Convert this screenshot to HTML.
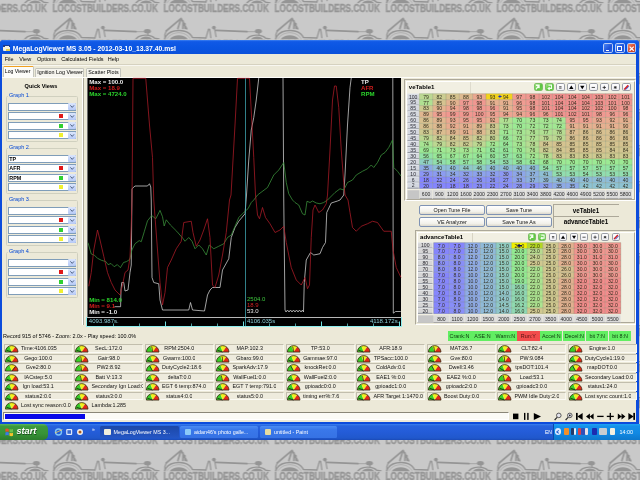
<!DOCTYPE html>
<html><head><meta charset="utf-8"><title>MegaLogViewer MS 3.05</title>
<style>
html,body{margin:0;padding:0;}
body{width:640px;height:480px;overflow:hidden;position:relative;background:#c9c9c9;font-family:"Liberation Sans", sans-serif;}
#root{position:absolute;left:0;top:0;width:640px;height:480px;overflow:hidden;will-change:transform;}
#root div,#root .t,#root .abs{position:absolute;}
.t{white-space:nowrap;display:block;}
svg{display:block;overflow:visible;}
</style></head><body><div id="root">
<svg class="abs" style="left:0;top:0" width="640" height="480" viewBox="0 0 640 480">
<pattern id="wm" x="52.5" y="0" width="111.0" height="36.0" patternUnits="userSpaceOnUse">
<clipPath id="cc"><rect x="-5" y="10" width="125" height="29.2"/></clipPath>
<rect width="111.0" height="36.0" fill="#c9c9c9"/>
<g transform="translate(0 0)" clip-path="url(#cc)">
<g fill="none" stroke="#959595" stroke-linecap="round" stroke-linejoin="round">
 <path d="M2.7 31L17.6 18.4L23.3 28.8M17.2 19.4L14.4 28.6M19.6 21.2L19.4 28.4M21.4 23.6L21.6 28.4" stroke-width="1.7"/>
 <path d="M2.7 31L1.4 34.6V40" stroke-width="1.3"/>
 <path d="M1.4 38.6C3.5 32.6 10 30.3 16.2 30.4C22.5 30.6 27 33.4 28.8 37.4L42.5 37.9" stroke-width="1.5"/>
 <path d="M3.4 39.5C5.5 34.6 10.6 32.6 16 32.7C20.6 32.9 24.6 35 26.4 38.4" stroke-width="0.8" stroke="#a8a8a8"/>
 <path d="M42.5 37.9L45 29.2L46.2 29.4L47.4 37.6" stroke-width="1.3"/>
 <path d="M51 28.4L52.6 36.6" stroke-width="1.2"/>
 <path d="M52.6 30.4L83.5 31.7" stroke-width="1.7"/>
 <path d="M83.5 31.7H91.3" stroke-width="0.7"/>
 <path d="M95.4 33L95.6 35.2" stroke-width="1.3"/>
 <path d="M83.4 39C85.6 36 89.6 35 93.6 35.1C97.4 35.2 100.4 36.4 102.2 38.2L106.6 38.9" stroke-width="1.4"/>
</g>
<g fill="#959595">
 <path d="M4.9 41.5C6.4 37.6 10.6 35.2 15.4 35.2C20.2 35.2 24.2 37.6 25.6 41.5Z"/>
 <ellipse cx="50.4" cy="27.6" rx="1.9" ry="1.9"/>
 <ellipse cx="94.9" cy="31.2" rx="3.5" ry="2.2"/>
 <path d="M86.6 41C88 37.8 90.6 36.6 93.6 36.6C96.6 36.6 99.2 37.8 100.6 41Z"/>
</g></g><g transform="translate(0 -36)" clip-path="url(#cc)">
<g fill="none" stroke="#959595" stroke-linecap="round" stroke-linejoin="round">
 <path d="M2.7 31L17.6 18.4L23.3 28.8M17.2 19.4L14.4 28.6M19.6 21.2L19.4 28.4M21.4 23.6L21.6 28.4" stroke-width="1.7"/>
 <path d="M2.7 31L1.4 34.6V40" stroke-width="1.3"/>
 <path d="M1.4 38.6C3.5 32.6 10 30.3 16.2 30.4C22.5 30.6 27 33.4 28.8 37.4L42.5 37.9" stroke-width="1.5"/>
 <path d="M3.4 39.5C5.5 34.6 10.6 32.6 16 32.7C20.6 32.9 24.6 35 26.4 38.4" stroke-width="0.8" stroke="#a8a8a8"/>
 <path d="M42.5 37.9L45 29.2L46.2 29.4L47.4 37.6" stroke-width="1.3"/>
 <path d="M51 28.4L52.6 36.6" stroke-width="1.2"/>
 <path d="M52.6 30.4L83.5 31.7" stroke-width="1.7"/>
 <path d="M83.5 31.7H91.3" stroke-width="0.7"/>
 <path d="M95.4 33L95.6 35.2" stroke-width="1.3"/>
 <path d="M83.4 39C85.6 36 89.6 35 93.6 35.1C97.4 35.2 100.4 36.4 102.2 38.2L106.6 38.9" stroke-width="1.4"/>
</g>
<g fill="#959595">
 <path d="M4.9 41.5C6.4 37.6 10.6 35.2 15.4 35.2C20.2 35.2 24.2 37.6 25.6 41.5Z"/>
 <ellipse cx="50.4" cy="27.6" rx="1.9" ry="1.9"/>
 <ellipse cx="94.9" cy="31.2" rx="3.5" ry="2.2"/>
 <path d="M86.6 41C88 37.8 90.6 36.6 93.6 36.6C96.6 36.6 99.2 37.8 100.6 41Z"/>
</g></g>
<rect x="-1" y="3.6" width="107.5" height="8.8" fill="#c9c9c9" opacity="0.0"/>
<text x="0" y="11.75" font-family='"Liberation Sans", sans-serif' font-weight="bold" font-size="10.2" fill="#959595" stroke="#959595" stroke-width="0.35" textLength="105.5" lengthAdjust="spacingAndGlyphs">LOCOSTBUILDERS.CO.UK</text>
</pattern>
<rect width="640" height="480" fill="url(#wm)"/>
</svg>
<div style="left:0.00px;top:39.70px;width:638.50px;height:384.60px;background:#0c4cdc;border-radius:3.5px 3.5px 0 0;"></div>
<div style="left:0.00px;top:39.70px;width:638.50px;height:14.60px;background:linear-gradient(#3d80f2 0%,#1059e6 12%,#0a55e2 55%,#0b50da 100%);border-radius:3.5px 3.5px 0 0;"></div>
<div style="left:2.20px;top:54.30px;width:634.00px;height:367.30px;background:#ece9d8;"></div>
<div style="left:3.40px;top:44.70px;width:6.90px;height:6.50px;background:#f4f2e4;border-radius:1px;"></div>
<div style="left:3.40px;top:44.70px;width:6.90px;height:2.60px;background:#1f3c90;"></div>
<div style="left:5.00px;top:46.30px;width:3.50px;height:2.60px;background:#f8f4e0;"></div>
<div style="left:6.00px;top:48.60px;width:3.50px;height:2.20px;background:#e8d050;"></div>
<span class="t" style="top:44.53px;font-size:6.79px;line-height:8.15px;color:#fff;font-weight:bold;left:12.80px;">MegaLogViewer MS 3.05 - 2012-03-10_13.37.40.msl</span>
<div style="left:603.40px;top:43.30px;width:9.60px;height:9.90px;background:linear-gradient(135deg,#4a86f4,#1c50d8 60%,#2a62e8);border:1px solid #b9cdf6;border-radius:1.8px;box-sizing:border-box;"></div>
<div style="left:615.00px;top:43.30px;width:9.60px;height:9.90px;background:linear-gradient(135deg,#4a86f4,#1c50d8 60%,#2a62e8);border:1px solid #b9cdf6;border-radius:1.8px;box-sizing:border-box;"></div>
<div style="left:626.60px;top:43.30px;width:9.60px;height:9.90px;background:linear-gradient(135deg,#f08a6a,#d84a2a 55%,#c83c20);border:1px solid #b9cdf6;border-radius:1.8px;box-sizing:border-box;"></div>
<div style="left:605.80px;top:49.60px;width:3.40px;height:1.50px;background:#fff;"></div>
<div style="left:617.40px;top:45.80px;width:5.00px;height:4.80px;border:1px solid #fff;border-top-width:1.6px;box-sizing:border-box;"></div>
<svg class="abs" style="left:628.7px;top:45.6px" width="5.4" height="5.4" viewBox="0 0 5.4 5.4"><path d="M0.6 0.6L4.8 4.8M4.8 0.6L0.6 4.8" stroke="#fff" stroke-width="1.2"/></svg>
<div style="left:2.20px;top:63.90px;width:634.00px;height:0.60px;background:#d6d2c0;"></div>
<div style="left:2.20px;top:64.50px;width:634.00px;height:0.60px;background:#f8f7f0;"></div>
<span class="t" style="top:56.20px;font-size:5.5px;line-height:6.60px;color:#000;left:4.70px;">File</span>
<span class="t" style="top:56.20px;font-size:5.5px;line-height:6.60px;color:#000;left:19.30px;">View</span>
<span class="t" style="top:56.20px;font-size:5.5px;line-height:6.60px;color:#000;left:37.00px;">Options</span>
<span class="t" style="top:56.20px;font-size:5.5px;line-height:6.60px;color:#000;left:61.30px;">Calculated Fields</span>
<span class="t" style="top:56.20px;font-size:5.5px;line-height:6.60px;color:#000;left:107.80px;">Help</span>
<div style="left:2.20px;top:76.60px;width:634.00px;height:0.70px;background:#fdfdfa;"></div>
<div style="left:35.20px;top:67.60px;width:48.80px;height:9.00px;background:#f6f5ee;border:1px solid #c4c5bd;border-bottom:none;box-sizing:border-box;border-radius:1.5px 1.5px 0 0;"></div>
<div style="left:85.80px;top:67.60px;width:34.80px;height:9.00px;background:#f6f5ee;border:1px solid #c4c5bd;border-bottom:none;box-sizing:border-box;border-radius:1.5px 1.5px 0 0;"></div>
<div style="left:2.60px;top:65.80px;width:31.40px;height:11.50px;background:#fcfcf9;border:1px solid #c4c5bd;border-bottom:none;border-top:1.3px solid #f0a020;box-sizing:border-box;border-radius:1.5px 1.5px 0 0;"></div>
<span class="t" style="top:68.32px;font-size:5.14px;line-height:6.17px;color:#000;left:4.80px;">Log Viewer</span>
<span class="t" style="top:68.98px;font-size:5.36px;line-height:6.43px;color:#000;left:37.20px;">Ignition Log Viewer</span>
<span class="t" style="top:68.98px;font-size:5.36px;line-height:6.43px;color:#000;left:88.30px;">Scatter Plots</span>
<div style="left:82.30px;top:78.00px;width:0.70px;height:247.00px;background:#fff;"></div>
<div style="left:83.00px;top:78.00px;width:0.70px;height:247.00px;background:#aca899;"></div>
<span class="t" style="top:82.64px;font-size:5.6px;line-height:6.72px;color:#000;font-weight:bold;left:-59.00px;width:200px;text-align:center;">Quick Views</span>
<div style="left:5.50px;top:96.00px;width:72.50px;height:46.00px;border:0.6px solid #d0d0bf;border-radius:1.5px;box-sizing:border-box;"></div>
<div style="left:8.00px;top:93.00px;width:19.50px;height:6.00px;background:#ece9d8;"></div>
<span class="t" style="top:92.30px;font-size:5.5px;line-height:6.60px;color:#0046d5;left:9.00px;">Graph 1</span>
<div style="left:7.50px;top:102.50px;width:68.80px;height:8.40px;background:#fff;border:0.6px solid #7f9db9;box-sizing:border-box;"></div>
<div style="left:68.20px;top:103.10px;width:7.50px;height:7.20px;background:linear-gradient(#dbe6fd,#b6c9f7);border-radius:1px;"></div>
<svg class="abs" style="left:69.8px;top:105.20px" width="4.4" height="3" viewBox="0 0 4.4 3"><path d="M0.4 0.4L2.2 2.4L4 0.4" fill="none" stroke="#4d6185" stroke-width="1"/></svg>
<div style="left:7.50px;top:112.00px;width:68.80px;height:8.40px;background:#fff;border:0.6px solid #7f9db9;box-sizing:border-box;"></div>
<div style="left:68.20px;top:112.60px;width:7.50px;height:7.20px;background:linear-gradient(#dbe6fd,#b6c9f7);border-radius:1px;"></div>
<svg class="abs" style="left:69.8px;top:114.70px" width="4.4" height="3" viewBox="0 0 4.4 3"><path d="M0.4 0.4L2.2 2.4L4 0.4" fill="none" stroke="#4d6185" stroke-width="1"/></svg>
<div style="left:59.00px;top:114.40px;width:3.80px;height:3.80px;background:#e01818;"></div>
<div style="left:7.50px;top:121.50px;width:68.80px;height:8.40px;background:#fff;border:0.6px solid #7f9db9;box-sizing:border-box;"></div>
<div style="left:68.20px;top:122.10px;width:7.50px;height:7.20px;background:linear-gradient(#dbe6fd,#b6c9f7);border-radius:1px;"></div>
<svg class="abs" style="left:69.8px;top:124.20px" width="4.4" height="3" viewBox="0 0 4.4 3"><path d="M0.4 0.4L2.2 2.4L4 0.4" fill="none" stroke="#4d6185" stroke-width="1"/></svg>
<div style="left:59.00px;top:123.90px;width:3.80px;height:3.80px;background:#30d030;"></div>
<div style="left:7.50px;top:131.00px;width:68.80px;height:8.40px;background:#fff;border:0.6px solid #7f9db9;box-sizing:border-box;"></div>
<div style="left:68.20px;top:131.60px;width:7.50px;height:7.20px;background:linear-gradient(#dbe6fd,#b6c9f7);border-radius:1px;"></div>
<svg class="abs" style="left:69.8px;top:133.70px" width="4.4" height="3" viewBox="0 0 4.4 3"><path d="M0.4 0.4L2.2 2.4L4 0.4" fill="none" stroke="#4d6185" stroke-width="1"/></svg>
<div style="left:59.00px;top:133.40px;width:3.80px;height:3.80px;background:#f0f030;"></div>
<div style="left:5.50px;top:148.00px;width:72.50px;height:46.00px;border:0.6px solid #d0d0bf;border-radius:1.5px;box-sizing:border-box;"></div>
<div style="left:8.00px;top:145.00px;width:19.50px;height:6.00px;background:#ece9d8;"></div>
<span class="t" style="top:144.30px;font-size:5.5px;line-height:6.60px;color:#0046d5;left:9.00px;">Graph 2</span>
<div style="left:7.50px;top:154.50px;width:68.80px;height:8.40px;background:#fff;border:0.6px solid #7f9db9;box-sizing:border-box;"></div>
<div style="left:68.20px;top:155.10px;width:7.50px;height:7.20px;background:linear-gradient(#dbe6fd,#b6c9f7);border-radius:1px;"></div>
<svg class="abs" style="left:69.8px;top:157.20px" width="4.4" height="3" viewBox="0 0 4.4 3"><path d="M0.4 0.4L2.2 2.4L4 0.4" fill="none" stroke="#4d6185" stroke-width="1"/></svg>
<span class="t" style="top:155.56px;font-size:5.4px;line-height:6.48px;color:#000;font-weight:bold;left:9.30px;">TP</span>
<div style="left:7.50px;top:164.00px;width:68.80px;height:8.40px;background:#fff;border:0.6px solid #7f9db9;box-sizing:border-box;"></div>
<div style="left:68.20px;top:164.60px;width:7.50px;height:7.20px;background:linear-gradient(#dbe6fd,#b6c9f7);border-radius:1px;"></div>
<svg class="abs" style="left:69.8px;top:166.70px" width="4.4" height="3" viewBox="0 0 4.4 3"><path d="M0.4 0.4L2.2 2.4L4 0.4" fill="none" stroke="#4d6185" stroke-width="1"/></svg>
<div style="left:59.00px;top:166.40px;width:3.80px;height:3.80px;background:#e01818;"></div>
<span class="t" style="top:165.06px;font-size:5.4px;line-height:6.48px;color:#000;font-weight:bold;left:9.30px;">AFR</span>
<div style="left:7.50px;top:173.50px;width:68.80px;height:8.40px;background:#fff;border:0.6px solid #7f9db9;box-sizing:border-box;"></div>
<div style="left:68.20px;top:174.10px;width:7.50px;height:7.20px;background:linear-gradient(#dbe6fd,#b6c9f7);border-radius:1px;"></div>
<svg class="abs" style="left:69.8px;top:176.20px" width="4.4" height="3" viewBox="0 0 4.4 3"><path d="M0.4 0.4L2.2 2.4L4 0.4" fill="none" stroke="#4d6185" stroke-width="1"/></svg>
<div style="left:59.00px;top:175.90px;width:3.80px;height:3.80px;background:#30d030;"></div>
<span class="t" style="top:174.56px;font-size:5.4px;line-height:6.48px;color:#000;font-weight:bold;left:9.30px;">RPM</span>
<div style="left:7.50px;top:183.00px;width:68.80px;height:8.40px;background:#fff;border:0.6px solid #7f9db9;box-sizing:border-box;"></div>
<div style="left:68.20px;top:183.60px;width:7.50px;height:7.20px;background:linear-gradient(#dbe6fd,#b6c9f7);border-radius:1px;"></div>
<svg class="abs" style="left:69.8px;top:185.70px" width="4.4" height="3" viewBox="0 0 4.4 3"><path d="M0.4 0.4L2.2 2.4L4 0.4" fill="none" stroke="#4d6185" stroke-width="1"/></svg>
<div style="left:59.00px;top:185.40px;width:3.80px;height:3.80px;background:#f0f030;"></div>
<div style="left:5.50px;top:200.00px;width:72.50px;height:46.00px;border:0.6px solid #d0d0bf;border-radius:1.5px;box-sizing:border-box;"></div>
<div style="left:8.00px;top:197.00px;width:19.50px;height:6.00px;background:#ece9d8;"></div>
<span class="t" style="top:196.30px;font-size:5.5px;line-height:6.60px;color:#0046d5;left:9.00px;">Graph 3</span>
<div style="left:7.50px;top:206.50px;width:68.80px;height:8.40px;background:#fff;border:0.6px solid #7f9db9;box-sizing:border-box;"></div>
<div style="left:68.20px;top:207.10px;width:7.50px;height:7.20px;background:linear-gradient(#dbe6fd,#b6c9f7);border-radius:1px;"></div>
<svg class="abs" style="left:69.8px;top:209.20px" width="4.4" height="3" viewBox="0 0 4.4 3"><path d="M0.4 0.4L2.2 2.4L4 0.4" fill="none" stroke="#4d6185" stroke-width="1"/></svg>
<div style="left:7.50px;top:216.00px;width:68.80px;height:8.40px;background:#fff;border:0.6px solid #7f9db9;box-sizing:border-box;"></div>
<div style="left:68.20px;top:216.60px;width:7.50px;height:7.20px;background:linear-gradient(#dbe6fd,#b6c9f7);border-radius:1px;"></div>
<svg class="abs" style="left:69.8px;top:218.70px" width="4.4" height="3" viewBox="0 0 4.4 3"><path d="M0.4 0.4L2.2 2.4L4 0.4" fill="none" stroke="#4d6185" stroke-width="1"/></svg>
<div style="left:59.00px;top:218.40px;width:3.80px;height:3.80px;background:#e01818;"></div>
<div style="left:7.50px;top:225.50px;width:68.80px;height:8.40px;background:#fff;border:0.6px solid #7f9db9;box-sizing:border-box;"></div>
<div style="left:68.20px;top:226.10px;width:7.50px;height:7.20px;background:linear-gradient(#dbe6fd,#b6c9f7);border-radius:1px;"></div>
<svg class="abs" style="left:69.8px;top:228.20px" width="4.4" height="3" viewBox="0 0 4.4 3"><path d="M0.4 0.4L2.2 2.4L4 0.4" fill="none" stroke="#4d6185" stroke-width="1"/></svg>
<div style="left:59.00px;top:227.90px;width:3.80px;height:3.80px;background:#30d030;"></div>
<div style="left:7.50px;top:235.00px;width:68.80px;height:8.40px;background:#fff;border:0.6px solid #7f9db9;box-sizing:border-box;"></div>
<div style="left:68.20px;top:235.60px;width:7.50px;height:7.20px;background:linear-gradient(#dbe6fd,#b6c9f7);border-radius:1px;"></div>
<svg class="abs" style="left:69.8px;top:237.70px" width="4.4" height="3" viewBox="0 0 4.4 3"><path d="M0.4 0.4L2.2 2.4L4 0.4" fill="none" stroke="#4d6185" stroke-width="1"/></svg>
<div style="left:59.00px;top:237.40px;width:3.80px;height:3.80px;background:#f0f030;"></div>
<div style="left:5.50px;top:252.00px;width:72.50px;height:46.00px;border:0.6px solid #d0d0bf;border-radius:1.5px;box-sizing:border-box;"></div>
<div style="left:8.00px;top:249.00px;width:19.50px;height:6.00px;background:#ece9d8;"></div>
<span class="t" style="top:248.30px;font-size:5.5px;line-height:6.60px;color:#0046d5;left:9.00px;">Graph 4</span>
<div style="left:7.50px;top:258.50px;width:68.80px;height:8.40px;background:#fff;border:0.6px solid #7f9db9;box-sizing:border-box;"></div>
<div style="left:68.20px;top:259.10px;width:7.50px;height:7.20px;background:linear-gradient(#dbe6fd,#b6c9f7);border-radius:1px;"></div>
<svg class="abs" style="left:69.8px;top:261.20px" width="4.4" height="3" viewBox="0 0 4.4 3"><path d="M0.4 0.4L2.2 2.4L4 0.4" fill="none" stroke="#4d6185" stroke-width="1"/></svg>
<div style="left:7.50px;top:268.00px;width:68.80px;height:8.40px;background:#fff;border:0.6px solid #7f9db9;box-sizing:border-box;"></div>
<div style="left:68.20px;top:268.60px;width:7.50px;height:7.20px;background:linear-gradient(#dbe6fd,#b6c9f7);border-radius:1px;"></div>
<svg class="abs" style="left:69.8px;top:270.70px" width="4.4" height="3" viewBox="0 0 4.4 3"><path d="M0.4 0.4L2.2 2.4L4 0.4" fill="none" stroke="#4d6185" stroke-width="1"/></svg>
<div style="left:59.00px;top:270.40px;width:3.80px;height:3.80px;background:#e01818;"></div>
<div style="left:7.50px;top:277.50px;width:68.80px;height:8.40px;background:#fff;border:0.6px solid #7f9db9;box-sizing:border-box;"></div>
<div style="left:68.20px;top:278.10px;width:7.50px;height:7.20px;background:linear-gradient(#dbe6fd,#b6c9f7);border-radius:1px;"></div>
<svg class="abs" style="left:69.8px;top:280.20px" width="4.4" height="3" viewBox="0 0 4.4 3"><path d="M0.4 0.4L2.2 2.4L4 0.4" fill="none" stroke="#4d6185" stroke-width="1"/></svg>
<div style="left:59.00px;top:279.90px;width:3.80px;height:3.80px;background:#30d030;"></div>
<div style="left:7.50px;top:287.00px;width:68.80px;height:8.40px;background:#fff;border:0.6px solid #7f9db9;box-sizing:border-box;"></div>
<div style="left:68.20px;top:287.60px;width:7.50px;height:7.20px;background:linear-gradient(#dbe6fd,#b6c9f7);border-radius:1px;"></div>
<svg class="abs" style="left:69.8px;top:289.70px" width="4.4" height="3" viewBox="0 0 4.4 3"><path d="M0.4 0.4L2.2 2.4L4 0.4" fill="none" stroke="#4d6185" stroke-width="1"/></svg>
<div style="left:59.00px;top:289.40px;width:3.80px;height:3.80px;background:#f0f030;"></div>
<div style="left:85.80px;top:316.50px;width:316.40px;height:10.60px;background:#8eeeee;"></div>
<div style="left:87.30px;top:78.30px;width:313.50px;height:247.70px;background:#000;"></div>
<div style="left:86.80px;top:78.30px;width:1.00px;height:238.60px;background:#6a6a6a;"></div>
<div style="left:87.30px;top:316.50px;width:313.50px;height:0.80px;background:#b8b8b8;"></div>
<svg class="abs" style="left:0;top:0" width="640" height="480" viewBox="0 0 640 480">
<g fill="none" stroke-width="0.75" stroke-linejoin="round">
<polyline stroke="#d6d6d6" points="114.5,306.7 120.6,306.7 121,290 121.75,282.5 123.75,282.5 125,291 128,290 130,272.5 131.25,265 132,188.75 135,186 147.5,186 149.5,183.75 150.75,187 151.25,200 152,277.5 153.75,282.5 158.75,283.75 160,300 162.5,310 188.75,310 190.5,302.5 192.5,310 204.5,311 207.5,295 210,290 212.5,287.5 220,287.5 222.5,270 228.75,258.75 231.25,237.5 235,227.5 238.75,221.25 245,213.75 246.5,195 248.75,160 251.25,130 253.75,117.5 256.25,100 258.75,78"/>
<polyline stroke="#d6d6d6" points="283,78 283.75,200 285,310 286,312 287.5,310 289,312 290.5,310 292,312 293.5,310 295,312 296.5,310 298,312 299.5,310 301,312 302.5,310 303.5,312 304.25,282.5 306.25,260 310.5,252.5 313.75,255 320,253.75 322.5,247.5 325.5,242.5 326.75,212.5 331.25,203 337.5,201 340,200 343.75,195 345,175 347.5,125 350,87.5 351.25,78"/>
<polyline stroke="#d6d6d6" points="392.8,78 393.3,313.2 395.6,311.5 400.8,311.5"/>
<polyline stroke="#3c943c" points="88,242.7 91.25,254 94.4,255.2 97.5,258.3 101.7,260.4 105.8,261.5 108,264.6 111,263.5 114.2,266.7 117.3,264.6 120.4,267.7 123.5,262.5 126.7,261.5 129.8,259.4 131.9,250 135,243.75 139.2,240.6 141.25,241.7 144.4,231.25 147.5,220.8 151.7,215.6 155.8,218.75 160,210.4 162.5,216.7 164.2,226 166.25,219.8 170.4,225 176.7,231.25 183,238.5 185,241.25 188.75,237.5 192,241.25 195,248.75 198.75,245 202.5,248.75 206.25,255 209.25,245 213.75,248.75 218.75,246.25 223.75,243.75 227.5,237.5 231.25,235 235,226.25 238.75,217.5 245,211.25 248,208.75 251.25,202.5 253.75,200 257.5,195 267.5,187.5 273.75,175 278.75,170 283.75,162.5 286.25,182.5 288.75,193.75 292.5,200 295,202.5 298.75,205 302.5,213.75 305,215 307,201.25 310,202.5 312.5,201 316.25,203 320,203.75 323.75,202.5 327.5,200 335,192.5 340,188.75 343.75,190 347.5,182.5 352.5,180 356.25,175 362.5,171.25 367.5,168.75 371.25,165 373.75,167.5 377.5,162.5 381.25,155 385,152.5 388.75,147.5 392.5,140 393.75,167.5 397.5,171.25 401,176"/>
<polyline stroke="#b01c28" points="88.75,286.25 91.25,272.5 93.75,250 97.5,230 100,240 103.75,256.25 107.5,272.5 111.25,282.5 115,290 120,295 122.5,285 125,272.5 128,270 130,257.5 131.25,225 132,200 133,78.3 145.75,78.3 149.5,125 152.5,157.5 153.75,200 157.5,250 160,282.5 162.5,305 165,292.5 167.5,267.5 171.25,260 176.25,248.75 181.25,241.25 183.75,222.5 191.25,221.25 193,232.5 196.25,246.25 200,240 203.75,230 207.5,218.75 210,237.5 212.5,285 215,287.5 218.75,275 222.5,255 226.25,232.5 229.5,200 231,195 235,125 237.5,78.3 249.5,78.3 252,125 253.75,157.5 255.5,195 257.5,215 259.5,218.75 262.5,207.5 265.5,217.5 270,223.75 275,232.5 280,230 283.75,226.25 286.25,242.5 291.25,267.5 296.25,280 301.25,285 305,277.5 307.5,288.75 309.5,285 311.25,237.5 313,210 315,205 318.75,212.5 322.5,210 326.25,203.75 327.5,195 330,150 332.5,100 334.5,86 336.25,86 338.75,107.5 341.25,150 343.75,182.5 345,195 348,200 350,212.5 352.5,227.5 356.25,231.25 361.25,226.25 367.5,223.75 372.5,221.25 377.5,222.5 383.75,231.25 391.25,231.25 393,250 396.25,267.5 401,277.5"/>
</g>
<path d="M245.5 78.3V326" stroke="#46b8c4" stroke-width="0.7"/>
<path d="M113.5 323.5V326" stroke="#70e0e0" stroke-width="0.7"/>
<path d="M139.5 323.5V326" stroke="#70e0e0" stroke-width="0.7"/>
<path d="M165.5 321.5V326" stroke="#70e0e0" stroke-width="1"/>
<path d="M191.5 323.5V326" stroke="#70e0e0" stroke-width="0.7"/>
<path d="M217.5 323.5V326" stroke="#70e0e0" stroke-width="0.7"/>
<path d="M243.5 321.5V326" stroke="#70e0e0" stroke-width="1"/>
<path d="M269.5 323.5V326" stroke="#70e0e0" stroke-width="0.7"/>
<path d="M295.5 323.5V326" stroke="#70e0e0" stroke-width="0.7"/>
<path d="M321.5 321.5V326" stroke="#70e0e0" stroke-width="1"/>
<path d="M347.5 323.5V326" stroke="#70e0e0" stroke-width="0.7"/>
<path d="M373.5 323.5V326" stroke="#70e0e0" stroke-width="0.7"/>
<path d="M399.5 321.5V326" stroke="#70e0e0" stroke-width="1"/>
</svg>
<span class="t" style="top:78.04px;font-size:6.1px;line-height:7.32px;color:#ececec;font-weight:bold;left:89.20px;">Max = 100.0</span>
<span class="t" style="top:83.94px;font-size:6.1px;line-height:7.32px;color:#d01c1c;font-weight:bold;left:89.20px;">Max = 18.9</span>
<span class="t" style="top:89.84px;font-size:6.1px;line-height:7.32px;color:#2cd42c;font-weight:bold;left:89.20px;">Max = 4724.0</span>
<span class="t" style="top:77.54px;font-size:6.1px;line-height:7.32px;color:#ececec;font-weight:bold;left:361.00px;">TP</span>
<span class="t" style="top:83.84px;font-size:6.1px;line-height:7.32px;color:#d01c1c;font-weight:bold;left:361.00px;">AFR</span>
<span class="t" style="top:90.14px;font-size:6.1px;line-height:7.32px;color:#2cd42c;font-weight:bold;left:361.00px;">RPM</span>
<span class="t" style="top:296.14px;font-size:6.1px;line-height:7.32px;color:#2cd42c;font-weight:bold;left:89.20px;">Min = 814.0</span>
<span class="t" style="top:302.14px;font-size:6.1px;line-height:7.32px;color:#d01c1c;font-weight:bold;left:89.20px;">Min = 9.1</span>
<span class="t" style="top:308.04px;font-size:6.1px;line-height:7.32px;color:#ececec;font-weight:bold;left:89.20px;">Min = -1.0</span>
<span class="t" style="top:296.20px;font-size:6px;line-height:7.20px;color:#3cc43c;left:247.00px;">2504.0</span>
<span class="t" style="top:301.90px;font-size:6px;line-height:7.20px;color:#d02222;left:247.00px;">18.9</span>
<span class="t" style="top:307.60px;font-size:6px;line-height:7.20px;color:#e8e8e8;left:247.00px;">53.0</span>
<span class="t" style="top:317.56px;font-size:6.06px;line-height:7.27px;color:#8ccdd6;left:88.80px;">4093.987s.</span>
<span class="t" style="top:317.56px;font-size:6.06px;line-height:7.27px;color:#8ccdd6;left:247.00px;">4106.035s</span>
<span class="t" style="top:317.56px;font-size:6.06px;line-height:7.27px;color:#8ccdd6;left:199.40px;width:200px;text-align:right;">4118.172s.</span>
<span class="t" style="top:332.94px;font-size:5.44px;line-height:6.53px;color:#000;left:3.00px;">Record 915 of 5746 - Zoom: 2.0x - Play speed: 100.0%</span>
<div style="left:404.40px;top:79.00px;width:231.80px;height:122.00px;border:0.7px solid #aca899;border-right-color:#fff;border-bottom-color:#fff;box-sizing:border-box;"></div>
<div style="left:406.30px;top:81.00px;width:228.50px;height:118.60px;background:#f1efe2;border:0.6px solid #fff;border-right-color:#aca899;border-bottom-color:#aca899;box-sizing:border-box;"></div>
<div style="left:470.00px;top:82.00px;width:1.00px;height:10.50px;background:#dedbcd;"></div>
<span class="t" style="top:82.74px;font-size:6.1px;line-height:7.32px;color:#000;font-weight:bold;left:408.80px;">veTable1</span>
<div style="left:534.30px;top:82.90px;width:8.60px;height:8.60px;background:linear-gradient(135deg,#a6ea86,#5cc440 55%,#6ad04a);border:1px solid #7cc066;border-radius:1.8px;box-sizing:border-box;"></div>
<svg class="abs" style="left:534.30px;top:82.90px" width="8.6" height="8.6" viewBox="0 0 8.5 8.5"><path d="M2 2.2H5V5.2M5 2.2L2 6.4" fill="none" stroke="#f4fff0" stroke-width="1.3"/></svg>
<div style="left:545.30px;top:82.90px;width:8.60px;height:8.60px;background:linear-gradient(135deg,#a6ea86,#5cc440 55%,#6ad04a);border:1px solid #7cc066;border-radius:1.8px;box-sizing:border-box;"></div>
<svg class="abs" style="left:545.30px;top:82.90px" width="8.6" height="8.6" viewBox="0 0 8.5 8.5"><path d="M3.4 2.2H6.4V5.4H4M4.6 4.2L3.2 5.4L4.6 6.6" fill="none" stroke="#f4fff0" stroke-width="1.2"/></svg>
<div style="left:556.30px;top:82.90px;width:8.60px;height:8.60px;background:linear-gradient(#ffffff,#f0f0f4);border:1px solid #9a9ea6;border-radius:1.8px;box-sizing:border-box;"></div>
<svg class="abs" style="left:556.30px;top:82.90px" width="8.6" height="8.6" viewBox="0 0 8.5 8.5"><path d="M3.1 3.7H5.5M3.1 5.1H5.5" stroke="#222" stroke-width="0.75"/></svg>
<div style="left:567.30px;top:82.90px;width:8.60px;height:8.60px;background:linear-gradient(#ffffff,#f0f0f4);border:1px solid #9a9ea6;border-radius:1.8px;box-sizing:border-box;"></div>
<svg class="abs" style="left:567.30px;top:82.90px" width="8.6" height="8.6" viewBox="0 0 8.5 8.5"><path d="M2.1 6L4.25 2.5L6.4 6Z" fill="#000"/></svg>
<div style="left:578.30px;top:82.90px;width:8.60px;height:8.60px;background:linear-gradient(#ffffff,#f0f0f4);border:1px solid #9a9ea6;border-radius:1.8px;box-sizing:border-box;"></div>
<svg class="abs" style="left:578.30px;top:82.90px" width="8.6" height="8.6" viewBox="0 0 8.5 8.5"><path d="M2.1 2.8L4.25 6.3L6.4 2.8Z" fill="#000"/></svg>
<div style="left:589.30px;top:82.90px;width:8.60px;height:8.60px;background:linear-gradient(#ffffff,#f0f0f4);border:1px solid #9a9ea6;border-radius:1.8px;box-sizing:border-box;"></div>
<svg class="abs" style="left:589.30px;top:82.90px" width="8.6" height="8.6" viewBox="0 0 8.5 8.5"><path d="M2.6 4.4H5.9" stroke="#222" stroke-width="0.8"/></svg>
<div style="left:600.30px;top:82.90px;width:8.60px;height:8.60px;background:linear-gradient(#ffffff,#f0f0f4);border:1px solid #9a9ea6;border-radius:1.8px;box-sizing:border-box;"></div>
<svg class="abs" style="left:600.30px;top:82.90px" width="8.6" height="8.6" viewBox="0 0 8.5 8.5"><path d="M2.6 4.4H5.9M4.25 2.75V6.05" stroke="#222" stroke-width="0.8"/></svg>
<div style="left:611.30px;top:82.90px;width:8.60px;height:8.60px;background:linear-gradient(#ffffff,#f0f0f4);border:1px solid #9a9ea6;border-radius:1.8px;box-sizing:border-box;"></div>
<svg class="abs" style="left:611.30px;top:82.90px" width="8.6" height="8.6" viewBox="0 0 8.5 8.5"><path d="M2.9 4.4H5.6M4.25 3V5.8M3.2 3.3L5.3 5.5M5.3 3.3L3.2 5.5" stroke="#222" stroke-width="0.7"/></svg>
<div style="left:622.30px;top:82.90px;width:8.60px;height:8.60px;background:linear-gradient(#ffffff,#f0f0f4);border:1px solid #9a9ea6;border-radius:1.8px;box-sizing:border-box;"></div>
<svg class="abs" style="left:622.30px;top:82.90px" width="8.6" height="8.6" viewBox="0 0 8.5 8.5"><path d="M2.2 6.4L6.2 2.2" stroke="#d42020" stroke-width="1.5"/><path d="M3.6 6.6L6.8 3.2" stroke="#2030c0" stroke-width="0.9"/></svg>
<svg class="abs" style="left:0;top:0" width="640" height="480" viewBox="0 0 640 480"><rect x="407.50" y="93.70" width="11.30" height="5.93" fill="#d3d7df"/><rect x="407.50" y="98.73" width="11.30" height="0.9" fill="#8d929c"/><rect x="407.50" y="93.70" width="11.30" height="0.6" fill="#eceef2"/><rect x="419.40" y="93.70" width="13.35" height="5.98" fill="#bcd892"/><rect x="432.70" y="93.70" width="13.35" height="5.98" fill="#cbcd92"/><rect x="446.00" y="93.70" width="13.35" height="5.98" fill="#d5c390"/><rect x="459.30" y="93.70" width="13.35" height="5.98" fill="#deba90"/><rect x="472.60" y="93.70" width="13.35" height="5.98" fill="#eaa891"/><rect x="485.90" y="93.70" width="13.35" height="5.98" fill="#f2d21e"/><rect x="499.20" y="93.70" width="13.35" height="5.98" fill="#f2d21e"/><rect x="512.50" y="93.70" width="13.35" height="5.98" fill="#f09a92"/><rect x="525.80" y="93.70" width="13.35" height="5.98" fill="#f09891"/><rect x="539.10" y="93.70" width="13.35" height="5.98" fill="#f2928f"/><rect x="552.40" y="93.70" width="13.35" height="5.98" fill="#f28e8e"/><rect x="565.70" y="93.70" width="13.35" height="5.98" fill="#f28e8e"/><rect x="579.00" y="93.70" width="13.35" height="5.98" fill="#f28e8e"/><rect x="592.30" y="93.70" width="13.35" height="5.98" fill="#f2908e"/><rect x="605.60" y="93.70" width="13.35" height="5.98" fill="#f2928f"/><rect x="618.90" y="93.70" width="13.35" height="5.98" fill="#f19390"/><rect x="407.50" y="99.63" width="11.30" height="5.93" fill="#d3d7df"/><rect x="407.50" y="104.66" width="11.30" height="0.9" fill="#8d929c"/><rect x="407.50" y="99.63" width="11.30" height="0.6" fill="#eceef2"/><rect x="419.40" y="99.63" width="13.35" height="5.98" fill="#b0e092"/><rect x="432.70" y="99.63" width="13.35" height="5.98" fill="#d5c390"/><rect x="446.00" y="99.63" width="13.35" height="5.98" fill="#e3b390"/><rect x="459.30" y="99.63" width="13.35" height="5.98" fill="#f09a92"/><rect x="472.60" y="99.63" width="13.35" height="5.98" fill="#f09891"/><rect x="485.90" y="99.63" width="13.35" height="5.98" fill="#e6b090"/><rect x="499.20" y="99.63" width="13.35" height="5.98" fill="#e6b090"/><rect x="512.50" y="99.63" width="13.35" height="5.98" fill="#f09c92"/><rect x="525.80" y="99.63" width="13.35" height="5.98" fill="#f09891"/><rect x="539.10" y="99.63" width="13.35" height="5.98" fill="#f19390"/><rect x="552.40" y="99.63" width="13.35" height="5.98" fill="#f28e8e"/><rect x="565.70" y="99.63" width="13.35" height="5.98" fill="#f28e8e"/><rect x="579.00" y="99.63" width="13.35" height="5.98" fill="#f28e8e"/><rect x="592.30" y="99.63" width="13.35" height="5.98" fill="#f2908e"/><rect x="605.60" y="99.63" width="13.35" height="5.98" fill="#f19390"/><rect x="618.90" y="99.63" width="13.35" height="5.98" fill="#f19590"/><rect x="407.50" y="105.56" width="11.30" height="5.93" fill="#d3d7df"/><rect x="407.50" y="110.59" width="11.30" height="0.9" fill="#8d929c"/><rect x="407.50" y="105.56" width="11.30" height="0.6" fill="#eceef2"/><rect x="419.40" y="105.56" width="13.35" height="5.98" fill="#ceca91"/><rect x="432.70" y="105.56" width="13.35" height="5.98" fill="#e3b390"/><rect x="446.00" y="105.56" width="13.35" height="5.98" fill="#eca491"/><rect x="459.30" y="105.56" width="13.35" height="5.98" fill="#f09891"/><rect x="472.60" y="105.56" width="13.35" height="5.98" fill="#f09891"/><rect x="485.90" y="105.56" width="13.35" height="5.98" fill="#f09c92"/><rect x="499.20" y="105.56" width="13.35" height="5.98" fill="#e6b090"/><rect x="512.50" y="105.56" width="13.35" height="5.98" fill="#eea092"/><rect x="525.80" y="105.56" width="13.35" height="5.98" fill="#f09891"/><rect x="539.10" y="105.56" width="13.35" height="5.98" fill="#f19390"/><rect x="552.40" y="105.56" width="13.35" height="5.98" fill="#f28e8e"/><rect x="565.70" y="105.56" width="13.35" height="5.98" fill="#f28e8e"/><rect x="579.00" y="105.56" width="13.35" height="5.98" fill="#f2928f"/><rect x="592.30" y="105.56" width="13.35" height="5.98" fill="#f2928f"/><rect x="605.60" y="105.56" width="13.35" height="5.98" fill="#f19590"/><rect x="618.90" y="105.56" width="13.35" height="5.98" fill="#f09891"/><rect x="407.50" y="111.49" width="11.30" height="5.93" fill="#d3d7df"/><rect x="407.50" y="116.52" width="11.30" height="0.9" fill="#8d929c"/><rect x="407.50" y="111.49" width="11.30" height="0.6" fill="#eceef2"/><rect x="419.40" y="111.49" width="13.35" height="5.98" fill="#e0b690"/><rect x="432.70" y="111.49" width="13.35" height="5.98" fill="#eea092"/><rect x="446.00" y="111.49" width="13.35" height="5.98" fill="#f19790"/><rect x="459.30" y="111.49" width="13.35" height="5.98" fill="#f19790"/><rect x="472.60" y="111.49" width="13.35" height="5.98" fill="#f19590"/><rect x="485.90" y="111.49" width="13.35" height="5.98" fill="#eea092"/><rect x="499.20" y="111.49" width="13.35" height="5.98" fill="#eca491"/><rect x="512.50" y="111.49" width="13.35" height="5.98" fill="#eca491"/><rect x="525.80" y="111.49" width="13.35" height="5.98" fill="#f09c92"/><rect x="539.10" y="111.49" width="13.35" height="5.98" fill="#f09c92"/><rect x="552.40" y="111.49" width="13.35" height="5.98" fill="#f19390"/><rect x="565.70" y="111.49" width="13.35" height="5.98" fill="#f2928f"/><rect x="579.00" y="111.49" width="13.35" height="5.98" fill="#f19390"/><rect x="592.30" y="111.49" width="13.35" height="5.98" fill="#f09891"/><rect x="605.60" y="111.49" width="13.35" height="5.98" fill="#f09c92"/><rect x="618.90" y="111.49" width="13.35" height="5.98" fill="#f09c92"/><rect x="407.50" y="117.42" width="11.30" height="5.93" fill="#d3d7df"/><rect x="407.50" y="122.45" width="11.30" height="0.9" fill="#8d929c"/><rect x="407.50" y="117.42" width="11.30" height="0.6" fill="#eceef2"/><rect x="419.40" y="117.42" width="13.35" height="5.98" fill="#d8c090"/><rect x="432.70" y="117.42" width="13.35" height="5.98" fill="#e0b690"/><rect x="446.00" y="117.42" width="13.35" height="5.98" fill="#eaa891"/><rect x="459.30" y="117.42" width="13.35" height="5.98" fill="#eea092"/><rect x="472.60" y="117.42" width="13.35" height="5.98" fill="#eea092"/><rect x="485.90" y="117.42" width="13.35" height="5.98" fill="#e8ac90"/><rect x="499.20" y="117.42" width="13.35" height="5.98" fill="#b0e092"/><rect x="512.50" y="117.42" width="13.35" height="5.98" fill="#9cea94"/><rect x="525.80" y="117.42" width="13.35" height="5.98" fill="#a5e693"/><rect x="539.10" y="117.42" width="13.35" height="5.98" fill="#a5e693"/><rect x="552.40" y="117.42" width="13.35" height="5.98" fill="#a7e493"/><rect x="565.70" y="117.42" width="13.35" height="5.98" fill="#eea092"/><rect x="579.00" y="117.42" width="13.35" height="5.98" fill="#eea092"/><rect x="592.30" y="117.42" width="13.35" height="5.98" fill="#eaa891"/><rect x="605.60" y="117.42" width="13.35" height="5.98" fill="#e8ac90"/><rect x="618.90" y="117.42" width="13.35" height="5.98" fill="#e6b090"/><rect x="407.50" y="123.35" width="11.30" height="5.93" fill="#d3d7df"/><rect x="407.50" y="128.38" width="11.30" height="0.9" fill="#8d929c"/><rect x="407.50" y="123.35" width="11.30" height="0.6" fill="#eceef2"/><rect x="419.40" y="123.35" width="13.35" height="5.98" fill="#d8c090"/><rect x="432.70" y="123.35" width="13.35" height="5.98" fill="#deba90"/><rect x="446.00" y="123.35" width="13.35" height="5.98" fill="#e8ac90"/><rect x="459.30" y="123.35" width="13.35" height="5.98" fill="#e6b090"/><rect x="472.60" y="123.35" width="13.35" height="5.98" fill="#e0b690"/><rect x="485.90" y="123.35" width="13.35" height="5.98" fill="#ceca91"/><rect x="499.20" y="123.35" width="13.35" height="5.98" fill="#a5e693"/><rect x="512.50" y="123.35" width="13.35" height="5.98" fill="#9cea94"/><rect x="525.80" y="123.35" width="13.35" height="5.98" fill="#a2e793"/><rect x="539.10" y="123.35" width="13.35" height="5.98" fill="#a2e793"/><rect x="552.40" y="123.35" width="13.35" height="5.98" fill="#a2e793"/><rect x="565.70" y="123.35" width="13.35" height="5.98" fill="#e6b090"/><rect x="579.00" y="123.35" width="13.35" height="5.98" fill="#e6b090"/><rect x="592.30" y="123.35" width="13.35" height="5.98" fill="#e6b090"/><rect x="605.60" y="123.35" width="13.35" height="5.98" fill="#e6b090"/><rect x="618.90" y="123.35" width="13.35" height="5.98" fill="#e3b390"/><rect x="407.50" y="129.28" width="11.30" height="5.93" fill="#d3d7df"/><rect x="407.50" y="134.31" width="11.30" height="0.9" fill="#8d929c"/><rect x="407.50" y="129.28" width="11.30" height="0.6" fill="#eceef2"/><rect x="419.40" y="129.28" width="13.35" height="5.98" fill="#ceca91"/><rect x="432.70" y="129.28" width="13.35" height="5.98" fill="#dbbd90"/><rect x="446.00" y="129.28" width="13.35" height="5.98" fill="#e0b690"/><rect x="459.30" y="129.28" width="13.35" height="5.98" fill="#e6b090"/><rect x="472.60" y="129.28" width="13.35" height="5.98" fill="#deba90"/><rect x="485.90" y="129.28" width="13.35" height="5.98" fill="#ceca91"/><rect x="499.20" y="129.28" width="13.35" height="5.98" fill="#9fe994"/><rect x="512.50" y="129.28" width="13.35" height="5.98" fill="#a5e693"/><rect x="525.80" y="129.28" width="13.35" height="5.98" fill="#ade192"/><rect x="539.10" y="129.28" width="13.35" height="5.98" fill="#b0e092"/><rect x="552.40" y="129.28" width="13.35" height="5.98" fill="#b6dc92"/><rect x="565.70" y="129.28" width="13.35" height="5.98" fill="#dbbd90"/><rect x="579.00" y="129.28" width="13.35" height="5.98" fill="#d8c090"/><rect x="592.30" y="129.28" width="13.35" height="5.98" fill="#d8c090"/><rect x="605.60" y="129.28" width="13.35" height="5.98" fill="#d8c090"/><rect x="618.90" y="129.28" width="13.35" height="5.98" fill="#d8c090"/><rect x="407.50" y="135.21" width="11.30" height="5.93" fill="#d3d7df"/><rect x="407.50" y="140.24" width="11.30" height="0.9" fill="#8d929c"/><rect x="407.50" y="135.21" width="11.30" height="0.6" fill="#eceef2"/><rect x="419.40" y="135.21" width="13.35" height="5.98" fill="#bcd892"/><rect x="432.70" y="135.21" width="13.35" height="5.98" fill="#cbcd92"/><rect x="446.00" y="135.21" width="13.35" height="5.98" fill="#d2c691"/><rect x="459.30" y="135.21" width="13.35" height="5.98" fill="#d5c390"/><rect x="472.60" y="135.21" width="13.35" height="5.98" fill="#cbcd92"/><rect x="485.90" y="135.21" width="13.35" height="5.98" fill="#c2d492"/><rect x="499.20" y="135.21" width="13.35" height="5.98" fill="#99e998"/><rect x="512.50" y="135.21" width="13.35" height="5.98" fill="#a5e693"/><rect x="525.80" y="135.21" width="13.35" height="5.98" fill="#b0e092"/><rect x="539.10" y="135.21" width="13.35" height="5.98" fill="#bcd892"/><rect x="552.40" y="135.21" width="13.35" height="5.98" fill="#bcd892"/><rect x="565.70" y="135.21" width="13.35" height="5.98" fill="#d8c090"/><rect x="579.00" y="135.21" width="13.35" height="5.98" fill="#d8c090"/><rect x="592.30" y="135.21" width="13.35" height="5.98" fill="#d8c090"/><rect x="605.60" y="135.21" width="13.35" height="5.98" fill="#d8c090"/><rect x="618.90" y="135.21" width="13.35" height="5.98" fill="#d8c090"/><rect x="407.50" y="141.14" width="11.30" height="5.93" fill="#d3d7df"/><rect x="407.50" y="146.17" width="11.30" height="0.9" fill="#8d929c"/><rect x="407.50" y="141.14" width="11.30" height="0.6" fill="#eceef2"/><rect x="419.40" y="141.14" width="13.35" height="5.98" fill="#a7e493"/><rect x="432.70" y="141.14" width="13.35" height="5.98" fill="#bcd892"/><rect x="446.00" y="141.14" width="13.35" height="5.98" fill="#cbcd92"/><rect x="459.30" y="141.14" width="13.35" height="5.98" fill="#cbcd92"/><rect x="472.60" y="141.14" width="13.35" height="5.98" fill="#bcd892"/><rect x="485.90" y="141.14" width="13.35" height="5.98" fill="#a2e793"/><rect x="499.20" y="141.14" width="13.35" height="5.98" fill="#97e89a"/><rect x="512.50" y="141.14" width="13.35" height="5.98" fill="#a5e693"/><rect x="525.80" y="141.14" width="13.35" height="5.98" fill="#b6dc92"/><rect x="539.10" y="141.14" width="13.35" height="5.98" fill="#d2c691"/><rect x="552.40" y="141.14" width="13.35" height="5.98" fill="#d5c390"/><rect x="565.70" y="141.14" width="13.35" height="5.98" fill="#d5c390"/><rect x="579.00" y="141.14" width="13.35" height="5.98" fill="#d5c390"/><rect x="592.30" y="141.14" width="13.35" height="5.98" fill="#d5c390"/><rect x="605.60" y="141.14" width="13.35" height="5.98" fill="#d5c390"/><rect x="618.90" y="141.14" width="13.35" height="5.98" fill="#d5c390"/><rect x="407.50" y="147.07" width="11.30" height="5.93" fill="#d3d7df"/><rect x="407.50" y="152.10" width="11.30" height="0.9" fill="#8d929c"/><rect x="407.50" y="147.07" width="11.30" height="0.6" fill="#eceef2"/><rect x="419.40" y="147.07" width="13.35" height="5.98" fill="#9bea95"/><rect x="432.70" y="147.07" width="13.35" height="5.98" fill="#9fe994"/><rect x="446.00" y="147.07" width="13.35" height="5.98" fill="#a5e693"/><rect x="459.30" y="147.07" width="13.35" height="5.98" fill="#a5e693"/><rect x="472.60" y="147.07" width="13.35" height="5.98" fill="#9fe994"/><rect x="485.90" y="147.07" width="13.35" height="5.98" fill="#95e79c"/><rect x="499.20" y="147.07" width="13.35" height="5.98" fill="#94e79d"/><rect x="512.50" y="147.07" width="13.35" height="5.98" fill="#9cea94"/><rect x="525.80" y="147.07" width="13.35" height="5.98" fill="#ade192"/><rect x="539.10" y="147.07" width="13.35" height="5.98" fill="#cbcd92"/><rect x="552.40" y="147.07" width="13.35" height="5.98" fill="#d2c691"/><rect x="565.70" y="147.07" width="13.35" height="5.98" fill="#d5c390"/><rect x="579.00" y="147.07" width="13.35" height="5.98" fill="#d5c390"/><rect x="592.30" y="147.07" width="13.35" height="5.98" fill="#d5c390"/><rect x="605.60" y="147.07" width="13.35" height="5.98" fill="#d2c691"/><rect x="618.90" y="147.07" width="13.35" height="5.98" fill="#d2c691"/><rect x="407.50" y="153.00" width="11.30" height="5.93" fill="#d3d7df"/><rect x="407.50" y="158.03" width="11.30" height="0.9" fill="#8d929c"/><rect x="407.50" y="153.00" width="11.30" height="0.6" fill="#eceef2"/><rect x="419.40" y="153.00" width="13.35" height="5.98" fill="#92e2a6"/><rect x="432.70" y="153.00" width="13.35" height="5.98" fill="#98e899"/><rect x="446.00" y="153.00" width="13.35" height="5.98" fill="#9ae997"/><rect x="459.30" y="153.00" width="13.35" height="5.98" fill="#9ae997"/><rect x="472.60" y="153.00" width="13.35" height="5.98" fill="#97e89a"/><rect x="485.90" y="153.00" width="13.35" height="5.98" fill="#94e79e"/><rect x="499.20" y="153.00" width="13.35" height="5.98" fill="#92e4a3"/><rect x="512.50" y="153.00" width="13.35" height="5.98" fill="#96e89b"/><rect x="525.80" y="153.00" width="13.35" height="5.98" fill="#a2e793"/><rect x="539.10" y="153.00" width="13.35" height="5.98" fill="#b6dc92"/><rect x="552.40" y="153.00" width="13.35" height="5.98" fill="#ceca91"/><rect x="565.70" y="153.00" width="13.35" height="5.98" fill="#ceca91"/><rect x="579.00" y="153.00" width="13.35" height="5.98" fill="#ceca91"/><rect x="592.30" y="153.00" width="13.35" height="5.98" fill="#ceca91"/><rect x="605.60" y="153.00" width="13.35" height="5.98" fill="#ceca91"/><rect x="618.90" y="153.00" width="13.35" height="5.98" fill="#ceca91"/><rect x="407.50" y="158.93" width="11.30" height="5.93" fill="#d3d7df"/><rect x="407.50" y="163.96" width="11.30" height="0.9" fill="#8d929c"/><rect x="407.50" y="158.93" width="11.30" height="0.6" fill="#eceef2"/><rect x="419.40" y="158.93" width="13.35" height="5.98" fill="#8fd0c2"/><rect x="432.70" y="158.93" width="13.35" height="5.98" fill="#91dfac"/><rect x="446.00" y="158.93" width="13.35" height="5.98" fill="#92e6a0"/><rect x="459.30" y="158.93" width="13.35" height="5.98" fill="#92e4a3"/><rect x="472.60" y="158.93" width="13.35" height="5.98" fill="#92e6a0"/><rect x="485.90" y="158.93" width="13.35" height="5.98" fill="#91dfac"/><rect x="499.20" y="158.93" width="13.35" height="5.98" fill="#91ddaf"/><rect x="512.50" y="158.93" width="13.35" height="5.98" fill="#92e6a0"/><rect x="525.80" y="158.93" width="13.35" height="5.98" fill="#95e79c"/><rect x="539.10" y="158.93" width="13.35" height="5.98" fill="#9ae996"/><rect x="552.40" y="158.93" width="13.35" height="5.98" fill="#9cea94"/><rect x="565.70" y="158.93" width="13.35" height="5.98" fill="#9cea94"/><rect x="579.00" y="158.93" width="13.35" height="5.98" fill="#9cea94"/><rect x="592.30" y="158.93" width="13.35" height="5.98" fill="#9cea94"/><rect x="605.60" y="158.93" width="13.35" height="5.98" fill="#9cea94"/><rect x="618.90" y="158.93" width="13.35" height="5.98" fill="#9cea94"/><rect x="407.50" y="164.86" width="11.30" height="5.93" fill="#d3d7df"/><rect x="407.50" y="169.89" width="11.30" height="0.9" fill="#8d929c"/><rect x="407.50" y="164.86" width="11.30" height="0.6" fill="#eceef2"/><rect x="419.40" y="164.86" width="13.35" height="5.98" fill="#8daae6"/><rect x="432.70" y="164.86" width="13.35" height="5.98" fill="#8ebcd8"/><rect x="446.00" y="164.86" width="13.35" height="5.98" fill="#8ebcd8"/><rect x="459.30" y="164.86" width="13.35" height="5.98" fill="#8fc7cb"/><rect x="472.60" y="164.86" width="13.35" height="5.98" fill="#8fcdc5"/><rect x="485.90" y="164.86" width="13.35" height="5.98" fill="#8ebcd8"/><rect x="499.20" y="164.86" width="13.35" height="5.98" fill="#8ebcd8"/><rect x="512.50" y="164.86" width="13.35" height="5.98" fill="#8ebcd8"/><rect x="525.80" y="164.86" width="13.35" height="5.98" fill="#8ebcd8"/><rect x="539.10" y="164.86" width="13.35" height="5.98" fill="#91dfac"/><rect x="552.40" y="164.86" width="13.35" height="5.98" fill="#92e4a3"/><rect x="565.70" y="164.86" width="13.35" height="5.98" fill="#92e4a3"/><rect x="579.00" y="164.86" width="13.35" height="5.98" fill="#92e4a3"/><rect x="592.30" y="164.86" width="13.35" height="5.98" fill="#92e4a3"/><rect x="605.60" y="164.86" width="13.35" height="5.98" fill="#92e4a3"/><rect x="618.90" y="164.86" width="13.35" height="5.98" fill="#92e4a3"/><rect x="407.50" y="170.79" width="11.30" height="5.93" fill="#d3d7df"/><rect x="407.50" y="175.82" width="11.30" height="0.9" fill="#8d929c"/><rect x="407.50" y="170.79" width="11.30" height="0.6" fill="#eceef2"/><rect x="419.40" y="170.79" width="13.35" height="5.98" fill="#8b96f5"/><rect x="432.70" y="170.79" width="13.35" height="5.98" fill="#8c9cf1"/><rect x="446.00" y="170.79" width="13.35" height="5.98" fill="#8da6e9"/><rect x="459.30" y="170.79" width="13.35" height="5.98" fill="#8c9fee"/><rect x="472.60" y="170.79" width="13.35" height="5.98" fill="#8da3ec"/><rect x="485.90" y="170.79" width="13.35" height="5.98" fill="#8c9fee"/><rect x="499.20" y="170.79" width="13.35" height="5.98" fill="#8c98f4"/><rect x="512.50" y="170.79" width="13.35" height="5.98" fill="#8da6e9"/><rect x="525.80" y="170.79" width="13.35" height="5.98" fill="#8db1e0"/><rect x="539.10" y="170.79" width="13.35" height="5.98" fill="#8ebfd5"/><rect x="552.40" y="170.79" width="13.35" height="5.98" fill="#91ddaf"/><rect x="565.70" y="170.79" width="13.35" height="5.98" fill="#91ddaf"/><rect x="579.00" y="170.79" width="13.35" height="5.98" fill="#91dfac"/><rect x="592.30" y="170.79" width="13.35" height="5.98" fill="#91ddaf"/><rect x="605.60" y="170.79" width="13.35" height="5.98" fill="#91ddaf"/><rect x="618.90" y="170.79" width="13.35" height="5.98" fill="#91ddaf"/><rect x="407.50" y="176.72" width="11.30" height="5.93" fill="#d3d7df"/><rect x="407.50" y="181.75" width="11.30" height="0.9" fill="#8d929c"/><rect x="407.50" y="176.72" width="11.30" height="0.6" fill="#eceef2"/><rect x="419.40" y="176.72" width="13.35" height="5.98" fill="#8484ff"/><rect x="432.70" y="176.72" width="13.35" height="5.98" fill="#878bfb"/><rect x="446.00" y="176.72" width="13.35" height="5.98" fill="#888efa"/><rect x="459.30" y="176.72" width="13.35" height="5.98" fill="#8991f8"/><rect x="472.60" y="176.72" width="13.35" height="5.98" fill="#8991f8"/><rect x="485.90" y="176.72" width="13.35" height="5.98" fill="#8991f8"/><rect x="499.20" y="176.72" width="13.35" height="5.98" fill="#8a93f7"/><rect x="512.50" y="176.72" width="13.35" height="5.98" fill="#8da3ec"/><rect x="525.80" y="176.72" width="13.35" height="5.98" fill="#8db1e0"/><rect x="539.10" y="176.72" width="13.35" height="5.98" fill="#8eb8db"/><rect x="552.40" y="176.72" width="13.35" height="5.98" fill="#8ebcd8"/><rect x="565.70" y="176.72" width="13.35" height="5.98" fill="#8ebcd8"/><rect x="579.00" y="176.72" width="13.35" height="5.98" fill="#8ebcd8"/><rect x="592.30" y="176.72" width="13.35" height="5.98" fill="#8ebcd8"/><rect x="605.60" y="176.72" width="13.35" height="5.98" fill="#8ebcd8"/><rect x="618.90" y="176.72" width="13.35" height="5.98" fill="#8ebcd8"/><rect x="407.50" y="182.65" width="11.30" height="5.93" fill="#d3d7df"/><rect x="407.50" y="187.68" width="11.30" height="0.9" fill="#8d929c"/><rect x="407.50" y="182.65" width="11.30" height="0.6" fill="#eceef2"/><rect x="419.40" y="182.65" width="13.35" height="5.98" fill="#8587fd"/><rect x="432.70" y="182.65" width="13.35" height="5.98" fill="#8586fe"/><rect x="446.00" y="182.65" width="13.35" height="5.98" fill="#8484ff"/><rect x="459.30" y="182.65" width="13.35" height="5.98" fill="#8484ff"/><rect x="472.60" y="182.65" width="13.35" height="5.98" fill="#878cfa"/><rect x="485.90" y="182.65" width="13.35" height="5.98" fill="#878bfb"/><rect x="499.20" y="182.65" width="13.35" height="5.98" fill="#888efa"/><rect x="512.50" y="182.65" width="13.35" height="5.98" fill="#8b95f6"/><rect x="525.80" y="182.65" width="13.35" height="5.98" fill="#8b96f5"/><rect x="539.10" y="182.65" width="13.35" height="5.98" fill="#8c9fee"/><rect x="552.40" y="182.65" width="13.35" height="5.98" fill="#8daae6"/><rect x="565.70" y="182.65" width="13.35" height="5.98" fill="#8daae6"/><rect x="579.00" y="182.65" width="13.35" height="5.98" fill="#8ec2d2"/><rect x="592.30" y="182.65" width="13.35" height="5.98" fill="#8ec2d2"/><rect x="605.60" y="182.65" width="13.35" height="5.98" fill="#8ec2d2"/><rect x="618.90" y="182.65" width="13.35" height="5.98" fill="#8ec2d2"/><path d="M419.40 93.70H632.20M419.40 99.63H632.20M419.40 105.56H632.20M419.40 111.49H632.20M419.40 117.42H632.20M419.40 123.35H632.20M419.40 129.28H632.20M419.40 135.21H632.20M419.40 141.14H632.20M419.40 147.07H632.20M419.40 153.00H632.20M419.40 158.93H632.20M419.40 164.86H632.20M419.40 170.79H632.20M419.40 176.72H632.20M419.40 182.65H632.20M419.40 188.58H632.20M419.40 93.70V188.58M432.70 93.70V188.58M446.00 93.70V188.58M459.30 93.70V188.58M472.60 93.70V188.58M485.90 93.70V188.58M499.20 93.70V188.58M512.50 93.70V188.58M525.80 93.70V188.58M539.10 93.70V188.58M552.40 93.70V188.58M565.70 93.70V188.58M579.00 93.70V188.58M592.30 93.70V188.58M605.60 93.70V188.58M618.90 93.70V188.58M632.20 93.70V188.58" stroke="#5a6a4a" stroke-opacity="0.38" stroke-width="0.6" fill="none"/><rect x="407.50" y="190.20" width="11.90" height="8.80" fill="#c6c6c6"/><rect x="419.70" y="190.20" width="12.70" height="8.80" fill="#dadada"/><rect x="419.70" y="198.10" width="12.70" height="0.9" fill="#a2a2a2"/><rect x="433.00" y="190.20" width="12.70" height="8.80" fill="#dadada"/><rect x="433.00" y="198.10" width="12.70" height="0.9" fill="#a2a2a2"/><rect x="446.30" y="190.20" width="12.70" height="8.80" fill="#dadada"/><rect x="446.30" y="198.10" width="12.70" height="0.9" fill="#a2a2a2"/><rect x="459.60" y="190.20" width="12.70" height="8.80" fill="#dadada"/><rect x="459.60" y="198.10" width="12.70" height="0.9" fill="#a2a2a2"/><rect x="472.90" y="190.20" width="12.70" height="8.80" fill="#dadada"/><rect x="472.90" y="198.10" width="12.70" height="0.9" fill="#a2a2a2"/><rect x="486.20" y="190.20" width="12.70" height="8.80" fill="#dadada"/><rect x="486.20" y="198.10" width="12.70" height="0.9" fill="#a2a2a2"/><rect x="499.50" y="190.20" width="12.70" height="8.80" fill="#dadada"/><rect x="499.50" y="198.10" width="12.70" height="0.9" fill="#a2a2a2"/><rect x="512.80" y="190.20" width="12.70" height="8.80" fill="#dadada"/><rect x="512.80" y="198.10" width="12.70" height="0.9" fill="#a2a2a2"/><rect x="526.10" y="190.20" width="12.70" height="8.80" fill="#dadada"/><rect x="526.10" y="198.10" width="12.70" height="0.9" fill="#a2a2a2"/><rect x="539.40" y="190.20" width="12.70" height="8.80" fill="#dadada"/><rect x="539.40" y="198.10" width="12.70" height="0.9" fill="#a2a2a2"/><rect x="552.70" y="190.20" width="12.70" height="8.80" fill="#dadada"/><rect x="552.70" y="198.10" width="12.70" height="0.9" fill="#a2a2a2"/><rect x="566.00" y="190.20" width="12.70" height="8.80" fill="#dadada"/><rect x="566.00" y="198.10" width="12.70" height="0.9" fill="#a2a2a2"/><rect x="579.30" y="190.20" width="12.70" height="8.80" fill="#dadada"/><rect x="579.30" y="198.10" width="12.70" height="0.9" fill="#a2a2a2"/><rect x="592.60" y="190.20" width="12.70" height="8.80" fill="#dadada"/><rect x="592.60" y="198.10" width="12.70" height="0.9" fill="#a2a2a2"/><rect x="605.90" y="190.20" width="12.70" height="8.80" fill="#dadada"/><rect x="605.90" y="198.10" width="12.70" height="0.9" fill="#a2a2a2"/><rect x="619.20" y="190.20" width="12.70" height="8.80" fill="#dadada"/><rect x="619.20" y="198.10" width="12.70" height="0.9" fill="#a2a2a2"/></svg>
<span class="t" style="top:93.51px;font-size:5.1px;line-height:6.12px;color:#2c2c34;left:313.15px;width:200px;text-align:center;">100</span>
<span class="t" style="top:93.61px;font-size:5.1px;line-height:6.12px;color:#33301f;left:326.05px;width:200px;text-align:center;">79</span>
<span class="t" style="top:93.61px;font-size:5.1px;line-height:6.12px;color:#33301f;left:339.35px;width:200px;text-align:center;">82</span>
<span class="t" style="top:93.61px;font-size:5.1px;line-height:6.12px;color:#33301f;left:352.65px;width:200px;text-align:center;">85</span>
<span class="t" style="top:93.61px;font-size:5.1px;line-height:6.12px;color:#33301f;left:365.95px;width:200px;text-align:center;">88</span>
<span class="t" style="top:93.61px;font-size:5.1px;line-height:6.12px;color:#33301f;left:379.25px;width:200px;text-align:center;">93</span>
<span class="t" style="top:93.61px;font-size:5.1px;line-height:6.12px;color:#33301f;left:392.55px;width:200px;text-align:center;">93</span>
<span class="t" style="top:93.61px;font-size:5.1px;line-height:6.12px;color:#33301f;left:405.85px;width:200px;text-align:center;">94</span>
<span class="t" style="top:93.61px;font-size:5.1px;line-height:6.12px;color:#33301f;left:419.15px;width:200px;text-align:center;">97</span>
<span class="t" style="top:93.61px;font-size:5.1px;line-height:6.12px;color:#33301f;left:432.45px;width:200px;text-align:center;">98</span>
<span class="t" style="top:93.61px;font-size:5.1px;line-height:6.12px;color:#33301f;left:445.75px;width:200px;text-align:center;">102</span>
<span class="t" style="top:93.61px;font-size:5.1px;line-height:6.12px;color:#33301f;left:459.05px;width:200px;text-align:center;">104</span>
<span class="t" style="top:93.61px;font-size:5.1px;line-height:6.12px;color:#33301f;left:472.35px;width:200px;text-align:center;">104</span>
<span class="t" style="top:93.61px;font-size:5.1px;line-height:6.12px;color:#33301f;left:485.65px;width:200px;text-align:center;">104</span>
<span class="t" style="top:93.61px;font-size:5.1px;line-height:6.12px;color:#33301f;left:498.95px;width:200px;text-align:center;">103</span>
<span class="t" style="top:93.61px;font-size:5.1px;line-height:6.12px;color:#33301f;left:512.25px;width:200px;text-align:center;">102</span>
<span class="t" style="top:93.61px;font-size:5.1px;line-height:6.12px;color:#33301f;left:525.55px;width:200px;text-align:center;">101</span>
<span class="t" style="top:99.44px;font-size:5.1px;line-height:6.12px;color:#2c2c34;left:313.15px;width:200px;text-align:center;">95</span>
<span class="t" style="top:99.53px;font-size:5.1px;line-height:6.12px;color:#33301f;left:326.05px;width:200px;text-align:center;">77</span>
<span class="t" style="top:99.53px;font-size:5.1px;line-height:6.12px;color:#33301f;left:339.35px;width:200px;text-align:center;">85</span>
<span class="t" style="top:99.53px;font-size:5.1px;line-height:6.12px;color:#33301f;left:352.65px;width:200px;text-align:center;">90</span>
<span class="t" style="top:99.53px;font-size:5.1px;line-height:6.12px;color:#33301f;left:365.95px;width:200px;text-align:center;">97</span>
<span class="t" style="top:99.53px;font-size:5.1px;line-height:6.12px;color:#33301f;left:379.25px;width:200px;text-align:center;">98</span>
<span class="t" style="top:99.53px;font-size:5.1px;line-height:6.12px;color:#33301f;left:392.55px;width:200px;text-align:center;">91</span>
<span class="t" style="top:99.53px;font-size:5.1px;line-height:6.12px;color:#33301f;left:405.85px;width:200px;text-align:center;">91</span>
<span class="t" style="top:99.53px;font-size:5.1px;line-height:6.12px;color:#33301f;left:419.15px;width:200px;text-align:center;">96</span>
<span class="t" style="top:99.53px;font-size:5.1px;line-height:6.12px;color:#33301f;left:432.45px;width:200px;text-align:center;">98</span>
<span class="t" style="top:99.53px;font-size:5.1px;line-height:6.12px;color:#33301f;left:445.75px;width:200px;text-align:center;">101</span>
<span class="t" style="top:99.53px;font-size:5.1px;line-height:6.12px;color:#33301f;left:459.05px;width:200px;text-align:center;">104</span>
<span class="t" style="top:99.53px;font-size:5.1px;line-height:6.12px;color:#33301f;left:472.35px;width:200px;text-align:center;">104</span>
<span class="t" style="top:99.53px;font-size:5.1px;line-height:6.12px;color:#33301f;left:485.65px;width:200px;text-align:center;">104</span>
<span class="t" style="top:99.53px;font-size:5.1px;line-height:6.12px;color:#33301f;left:498.95px;width:200px;text-align:center;">103</span>
<span class="t" style="top:99.53px;font-size:5.1px;line-height:6.12px;color:#33301f;left:512.25px;width:200px;text-align:center;">101</span>
<span class="t" style="top:99.53px;font-size:5.1px;line-height:6.12px;color:#33301f;left:525.55px;width:200px;text-align:center;">100</span>
<span class="t" style="top:105.37px;font-size:5.1px;line-height:6.12px;color:#2c2c34;left:313.15px;width:200px;text-align:center;">85</span>
<span class="t" style="top:105.47px;font-size:5.1px;line-height:6.12px;color:#33301f;left:326.05px;width:200px;text-align:center;">83</span>
<span class="t" style="top:105.47px;font-size:5.1px;line-height:6.12px;color:#33301f;left:339.35px;width:200px;text-align:center;">90</span>
<span class="t" style="top:105.47px;font-size:5.1px;line-height:6.12px;color:#33301f;left:352.65px;width:200px;text-align:center;">94</span>
<span class="t" style="top:105.47px;font-size:5.1px;line-height:6.12px;color:#33301f;left:365.95px;width:200px;text-align:center;">98</span>
<span class="t" style="top:105.47px;font-size:5.1px;line-height:6.12px;color:#33301f;left:379.25px;width:200px;text-align:center;">98</span>
<span class="t" style="top:105.47px;font-size:5.1px;line-height:6.12px;color:#33301f;left:392.55px;width:200px;text-align:center;">96</span>
<span class="t" style="top:105.47px;font-size:5.1px;line-height:6.12px;color:#33301f;left:405.85px;width:200px;text-align:center;">91</span>
<span class="t" style="top:105.47px;font-size:5.1px;line-height:6.12px;color:#33301f;left:419.15px;width:200px;text-align:center;">95</span>
<span class="t" style="top:105.47px;font-size:5.1px;line-height:6.12px;color:#33301f;left:432.45px;width:200px;text-align:center;">98</span>
<span class="t" style="top:105.47px;font-size:5.1px;line-height:6.12px;color:#33301f;left:445.75px;width:200px;text-align:center;">101</span>
<span class="t" style="top:105.47px;font-size:5.1px;line-height:6.12px;color:#33301f;left:459.05px;width:200px;text-align:center;">104</span>
<span class="t" style="top:105.47px;font-size:5.1px;line-height:6.12px;color:#33301f;left:472.35px;width:200px;text-align:center;">104</span>
<span class="t" style="top:105.47px;font-size:5.1px;line-height:6.12px;color:#33301f;left:485.65px;width:200px;text-align:center;">102</span>
<span class="t" style="top:105.47px;font-size:5.1px;line-height:6.12px;color:#33301f;left:498.95px;width:200px;text-align:center;">102</span>
<span class="t" style="top:105.47px;font-size:5.1px;line-height:6.12px;color:#33301f;left:512.25px;width:200px;text-align:center;">100</span>
<span class="t" style="top:105.47px;font-size:5.1px;line-height:6.12px;color:#33301f;left:525.55px;width:200px;text-align:center;">98</span>
<span class="t" style="top:111.30px;font-size:5.1px;line-height:6.12px;color:#2c2c34;left:313.15px;width:200px;text-align:center;">65</span>
<span class="t" style="top:111.40px;font-size:5.1px;line-height:6.12px;color:#33301f;left:326.05px;width:200px;text-align:center;">89</span>
<span class="t" style="top:111.40px;font-size:5.1px;line-height:6.12px;color:#33301f;left:339.35px;width:200px;text-align:center;">95</span>
<span class="t" style="top:111.40px;font-size:5.1px;line-height:6.12px;color:#33301f;left:352.65px;width:200px;text-align:center;">99</span>
<span class="t" style="top:111.40px;font-size:5.1px;line-height:6.12px;color:#33301f;left:365.95px;width:200px;text-align:center;">99</span>
<span class="t" style="top:111.40px;font-size:5.1px;line-height:6.12px;color:#33301f;left:379.25px;width:200px;text-align:center;">100</span>
<span class="t" style="top:111.40px;font-size:5.1px;line-height:6.12px;color:#33301f;left:392.55px;width:200px;text-align:center;">95</span>
<span class="t" style="top:111.40px;font-size:5.1px;line-height:6.12px;color:#33301f;left:405.85px;width:200px;text-align:center;">94</span>
<span class="t" style="top:111.40px;font-size:5.1px;line-height:6.12px;color:#33301f;left:419.15px;width:200px;text-align:center;">94</span>
<span class="t" style="top:111.40px;font-size:5.1px;line-height:6.12px;color:#33301f;left:432.45px;width:200px;text-align:center;">96</span>
<span class="t" style="top:111.40px;font-size:5.1px;line-height:6.12px;color:#33301f;left:445.75px;width:200px;text-align:center;">96</span>
<span class="t" style="top:111.40px;font-size:5.1px;line-height:6.12px;color:#33301f;left:459.05px;width:200px;text-align:center;">101</span>
<span class="t" style="top:111.40px;font-size:5.1px;line-height:6.12px;color:#33301f;left:472.35px;width:200px;text-align:center;">102</span>
<span class="t" style="top:111.40px;font-size:5.1px;line-height:6.12px;color:#33301f;left:485.65px;width:200px;text-align:center;">101</span>
<span class="t" style="top:111.40px;font-size:5.1px;line-height:6.12px;color:#33301f;left:498.95px;width:200px;text-align:center;">98</span>
<span class="t" style="top:111.40px;font-size:5.1px;line-height:6.12px;color:#33301f;left:512.25px;width:200px;text-align:center;">96</span>
<span class="t" style="top:111.40px;font-size:5.1px;line-height:6.12px;color:#33301f;left:525.55px;width:200px;text-align:center;">96</span>
<span class="t" style="top:117.23px;font-size:5.1px;line-height:6.12px;color:#2c2c34;left:313.15px;width:200px;text-align:center;">60</span>
<span class="t" style="top:117.33px;font-size:5.1px;line-height:6.12px;color:#33301f;left:326.05px;width:200px;text-align:center;">86</span>
<span class="t" style="top:117.33px;font-size:5.1px;line-height:6.12px;color:#33301f;left:339.35px;width:200px;text-align:center;">89</span>
<span class="t" style="top:117.33px;font-size:5.1px;line-height:6.12px;color:#33301f;left:352.65px;width:200px;text-align:center;">93</span>
<span class="t" style="top:117.33px;font-size:5.1px;line-height:6.12px;color:#33301f;left:365.95px;width:200px;text-align:center;">95</span>
<span class="t" style="top:117.33px;font-size:5.1px;line-height:6.12px;color:#33301f;left:379.25px;width:200px;text-align:center;">95</span>
<span class="t" style="top:117.33px;font-size:5.1px;line-height:6.12px;color:#33301f;left:392.55px;width:200px;text-align:center;">92</span>
<span class="t" style="top:117.33px;font-size:5.1px;line-height:6.12px;color:#33301f;left:405.85px;width:200px;text-align:center;">77</span>
<span class="t" style="top:117.33px;font-size:5.1px;line-height:6.12px;color:#33301f;left:419.15px;width:200px;text-align:center;">70</span>
<span class="t" style="top:117.33px;font-size:5.1px;line-height:6.12px;color:#33301f;left:432.45px;width:200px;text-align:center;">73</span>
<span class="t" style="top:117.33px;font-size:5.1px;line-height:6.12px;color:#33301f;left:445.75px;width:200px;text-align:center;">73</span>
<span class="t" style="top:117.33px;font-size:5.1px;line-height:6.12px;color:#33301f;left:459.05px;width:200px;text-align:center;">74</span>
<span class="t" style="top:117.33px;font-size:5.1px;line-height:6.12px;color:#33301f;left:472.35px;width:200px;text-align:center;">95</span>
<span class="t" style="top:117.33px;font-size:5.1px;line-height:6.12px;color:#33301f;left:485.65px;width:200px;text-align:center;">95</span>
<span class="t" style="top:117.33px;font-size:5.1px;line-height:6.12px;color:#33301f;left:498.95px;width:200px;text-align:center;">93</span>
<span class="t" style="top:117.33px;font-size:5.1px;line-height:6.12px;color:#33301f;left:512.25px;width:200px;text-align:center;">92</span>
<span class="t" style="top:117.33px;font-size:5.1px;line-height:6.12px;color:#33301f;left:525.55px;width:200px;text-align:center;">91</span>
<span class="t" style="top:123.16px;font-size:5.1px;line-height:6.12px;color:#2c2c34;left:313.15px;width:200px;text-align:center;">55</span>
<span class="t" style="top:123.25px;font-size:5.1px;line-height:6.12px;color:#33301f;left:326.05px;width:200px;text-align:center;">86</span>
<span class="t" style="top:123.25px;font-size:5.1px;line-height:6.12px;color:#33301f;left:339.35px;width:200px;text-align:center;">88</span>
<span class="t" style="top:123.25px;font-size:5.1px;line-height:6.12px;color:#33301f;left:352.65px;width:200px;text-align:center;">92</span>
<span class="t" style="top:123.25px;font-size:5.1px;line-height:6.12px;color:#33301f;left:365.95px;width:200px;text-align:center;">91</span>
<span class="t" style="top:123.25px;font-size:5.1px;line-height:6.12px;color:#33301f;left:379.25px;width:200px;text-align:center;">89</span>
<span class="t" style="top:123.25px;font-size:5.1px;line-height:6.12px;color:#33301f;left:392.55px;width:200px;text-align:center;">83</span>
<span class="t" style="top:123.25px;font-size:5.1px;line-height:6.12px;color:#33301f;left:405.85px;width:200px;text-align:center;">73</span>
<span class="t" style="top:123.25px;font-size:5.1px;line-height:6.12px;color:#33301f;left:419.15px;width:200px;text-align:center;">70</span>
<span class="t" style="top:123.25px;font-size:5.1px;line-height:6.12px;color:#33301f;left:432.45px;width:200px;text-align:center;">72</span>
<span class="t" style="top:123.25px;font-size:5.1px;line-height:6.12px;color:#33301f;left:445.75px;width:200px;text-align:center;">72</span>
<span class="t" style="top:123.25px;font-size:5.1px;line-height:6.12px;color:#33301f;left:459.05px;width:200px;text-align:center;">72</span>
<span class="t" style="top:123.25px;font-size:5.1px;line-height:6.12px;color:#33301f;left:472.35px;width:200px;text-align:center;">91</span>
<span class="t" style="top:123.25px;font-size:5.1px;line-height:6.12px;color:#33301f;left:485.65px;width:200px;text-align:center;">91</span>
<span class="t" style="top:123.25px;font-size:5.1px;line-height:6.12px;color:#33301f;left:498.95px;width:200px;text-align:center;">91</span>
<span class="t" style="top:123.25px;font-size:5.1px;line-height:6.12px;color:#33301f;left:512.25px;width:200px;text-align:center;">91</span>
<span class="t" style="top:123.25px;font-size:5.1px;line-height:6.12px;color:#33301f;left:525.55px;width:200px;text-align:center;">90</span>
<span class="t" style="top:129.09px;font-size:5.1px;line-height:6.12px;color:#2c2c34;left:313.15px;width:200px;text-align:center;">50</span>
<span class="t" style="top:129.19px;font-size:5.1px;line-height:6.12px;color:#33301f;left:326.05px;width:200px;text-align:center;">83</span>
<span class="t" style="top:129.19px;font-size:5.1px;line-height:6.12px;color:#33301f;left:339.35px;width:200px;text-align:center;">87</span>
<span class="t" style="top:129.19px;font-size:5.1px;line-height:6.12px;color:#33301f;left:352.65px;width:200px;text-align:center;">89</span>
<span class="t" style="top:129.19px;font-size:5.1px;line-height:6.12px;color:#33301f;left:365.95px;width:200px;text-align:center;">91</span>
<span class="t" style="top:129.19px;font-size:5.1px;line-height:6.12px;color:#33301f;left:379.25px;width:200px;text-align:center;">88</span>
<span class="t" style="top:129.19px;font-size:5.1px;line-height:6.12px;color:#33301f;left:392.55px;width:200px;text-align:center;">83</span>
<span class="t" style="top:129.19px;font-size:5.1px;line-height:6.12px;color:#33301f;left:405.85px;width:200px;text-align:center;">71</span>
<span class="t" style="top:129.19px;font-size:5.1px;line-height:6.12px;color:#33301f;left:419.15px;width:200px;text-align:center;">73</span>
<span class="t" style="top:129.19px;font-size:5.1px;line-height:6.12px;color:#33301f;left:432.45px;width:200px;text-align:center;">76</span>
<span class="t" style="top:129.19px;font-size:5.1px;line-height:6.12px;color:#33301f;left:445.75px;width:200px;text-align:center;">77</span>
<span class="t" style="top:129.19px;font-size:5.1px;line-height:6.12px;color:#33301f;left:459.05px;width:200px;text-align:center;">78</span>
<span class="t" style="top:129.19px;font-size:5.1px;line-height:6.12px;color:#33301f;left:472.35px;width:200px;text-align:center;">87</span>
<span class="t" style="top:129.19px;font-size:5.1px;line-height:6.12px;color:#33301f;left:485.65px;width:200px;text-align:center;">86</span>
<span class="t" style="top:129.19px;font-size:5.1px;line-height:6.12px;color:#33301f;left:498.95px;width:200px;text-align:center;">86</span>
<span class="t" style="top:129.19px;font-size:5.1px;line-height:6.12px;color:#33301f;left:512.25px;width:200px;text-align:center;">86</span>
<span class="t" style="top:129.19px;font-size:5.1px;line-height:6.12px;color:#33301f;left:525.55px;width:200px;text-align:center;">86</span>
<span class="t" style="top:135.02px;font-size:5.1px;line-height:6.12px;color:#2c2c34;left:313.15px;width:200px;text-align:center;">45</span>
<span class="t" style="top:135.12px;font-size:5.1px;line-height:6.12px;color:#33301f;left:326.05px;width:200px;text-align:center;">79</span>
<span class="t" style="top:135.12px;font-size:5.1px;line-height:6.12px;color:#33301f;left:339.35px;width:200px;text-align:center;">82</span>
<span class="t" style="top:135.12px;font-size:5.1px;line-height:6.12px;color:#33301f;left:352.65px;width:200px;text-align:center;">84</span>
<span class="t" style="top:135.12px;font-size:5.1px;line-height:6.12px;color:#33301f;left:365.95px;width:200px;text-align:center;">85</span>
<span class="t" style="top:135.12px;font-size:5.1px;line-height:6.12px;color:#33301f;left:379.25px;width:200px;text-align:center;">82</span>
<span class="t" style="top:135.12px;font-size:5.1px;line-height:6.12px;color:#33301f;left:392.55px;width:200px;text-align:center;">80</span>
<span class="t" style="top:135.12px;font-size:5.1px;line-height:6.12px;color:#33301f;left:405.85px;width:200px;text-align:center;">66</span>
<span class="t" style="top:135.12px;font-size:5.1px;line-height:6.12px;color:#33301f;left:419.15px;width:200px;text-align:center;">73</span>
<span class="t" style="top:135.12px;font-size:5.1px;line-height:6.12px;color:#33301f;left:432.45px;width:200px;text-align:center;">77</span>
<span class="t" style="top:135.12px;font-size:5.1px;line-height:6.12px;color:#33301f;left:445.75px;width:200px;text-align:center;">79</span>
<span class="t" style="top:135.12px;font-size:5.1px;line-height:6.12px;color:#33301f;left:459.05px;width:200px;text-align:center;">79</span>
<span class="t" style="top:135.12px;font-size:5.1px;line-height:6.12px;color:#33301f;left:472.35px;width:200px;text-align:center;">86</span>
<span class="t" style="top:135.12px;font-size:5.1px;line-height:6.12px;color:#33301f;left:485.65px;width:200px;text-align:center;">86</span>
<span class="t" style="top:135.12px;font-size:5.1px;line-height:6.12px;color:#33301f;left:498.95px;width:200px;text-align:center;">86</span>
<span class="t" style="top:135.12px;font-size:5.1px;line-height:6.12px;color:#33301f;left:512.25px;width:200px;text-align:center;">86</span>
<span class="t" style="top:135.12px;font-size:5.1px;line-height:6.12px;color:#33301f;left:525.55px;width:200px;text-align:center;">86</span>
<span class="t" style="top:140.94px;font-size:5.1px;line-height:6.12px;color:#2c2c34;left:313.15px;width:200px;text-align:center;">40</span>
<span class="t" style="top:141.04px;font-size:5.1px;line-height:6.12px;color:#33301f;left:326.05px;width:200px;text-align:center;">74</span>
<span class="t" style="top:141.04px;font-size:5.1px;line-height:6.12px;color:#33301f;left:339.35px;width:200px;text-align:center;">79</span>
<span class="t" style="top:141.04px;font-size:5.1px;line-height:6.12px;color:#33301f;left:352.65px;width:200px;text-align:center;">82</span>
<span class="t" style="top:141.04px;font-size:5.1px;line-height:6.12px;color:#33301f;left:365.95px;width:200px;text-align:center;">82</span>
<span class="t" style="top:141.04px;font-size:5.1px;line-height:6.12px;color:#33301f;left:379.25px;width:200px;text-align:center;">79</span>
<span class="t" style="top:141.04px;font-size:5.1px;line-height:6.12px;color:#33301f;left:392.55px;width:200px;text-align:center;">72</span>
<span class="t" style="top:141.04px;font-size:5.1px;line-height:6.12px;color:#33301f;left:405.85px;width:200px;text-align:center;">64</span>
<span class="t" style="top:141.04px;font-size:5.1px;line-height:6.12px;color:#33301f;left:419.15px;width:200px;text-align:center;">73</span>
<span class="t" style="top:141.04px;font-size:5.1px;line-height:6.12px;color:#33301f;left:432.45px;width:200px;text-align:center;">78</span>
<span class="t" style="top:141.04px;font-size:5.1px;line-height:6.12px;color:#33301f;left:445.75px;width:200px;text-align:center;">84</span>
<span class="t" style="top:141.04px;font-size:5.1px;line-height:6.12px;color:#33301f;left:459.05px;width:200px;text-align:center;">85</span>
<span class="t" style="top:141.04px;font-size:5.1px;line-height:6.12px;color:#33301f;left:472.35px;width:200px;text-align:center;">85</span>
<span class="t" style="top:141.04px;font-size:5.1px;line-height:6.12px;color:#33301f;left:485.65px;width:200px;text-align:center;">85</span>
<span class="t" style="top:141.04px;font-size:5.1px;line-height:6.12px;color:#33301f;left:498.95px;width:200px;text-align:center;">85</span>
<span class="t" style="top:141.04px;font-size:5.1px;line-height:6.12px;color:#33301f;left:512.25px;width:200px;text-align:center;">85</span>
<span class="t" style="top:141.04px;font-size:5.1px;line-height:6.12px;color:#33301f;left:525.55px;width:200px;text-align:center;">85</span>
<span class="t" style="top:146.88px;font-size:5.1px;line-height:6.12px;color:#2c2c34;left:313.15px;width:200px;text-align:center;">35</span>
<span class="t" style="top:146.97px;font-size:5.1px;line-height:6.12px;color:#33301f;left:326.05px;width:200px;text-align:center;">69</span>
<span class="t" style="top:146.97px;font-size:5.1px;line-height:6.12px;color:#33301f;left:339.35px;width:200px;text-align:center;">71</span>
<span class="t" style="top:146.97px;font-size:5.1px;line-height:6.12px;color:#33301f;left:352.65px;width:200px;text-align:center;">73</span>
<span class="t" style="top:146.97px;font-size:5.1px;line-height:6.12px;color:#33301f;left:365.95px;width:200px;text-align:center;">73</span>
<span class="t" style="top:146.97px;font-size:5.1px;line-height:6.12px;color:#33301f;left:379.25px;width:200px;text-align:center;">71</span>
<span class="t" style="top:146.97px;font-size:5.1px;line-height:6.12px;color:#33301f;left:392.55px;width:200px;text-align:center;">62</span>
<span class="t" style="top:146.97px;font-size:5.1px;line-height:6.12px;color:#33301f;left:405.85px;width:200px;text-align:center;">61</span>
<span class="t" style="top:146.97px;font-size:5.1px;line-height:6.12px;color:#33301f;left:419.15px;width:200px;text-align:center;">70</span>
<span class="t" style="top:146.97px;font-size:5.1px;line-height:6.12px;color:#33301f;left:432.45px;width:200px;text-align:center;">76</span>
<span class="t" style="top:146.97px;font-size:5.1px;line-height:6.12px;color:#33301f;left:445.75px;width:200px;text-align:center;">82</span>
<span class="t" style="top:146.97px;font-size:5.1px;line-height:6.12px;color:#33301f;left:459.05px;width:200px;text-align:center;">84</span>
<span class="t" style="top:146.97px;font-size:5.1px;line-height:6.12px;color:#33301f;left:472.35px;width:200px;text-align:center;">85</span>
<span class="t" style="top:146.97px;font-size:5.1px;line-height:6.12px;color:#33301f;left:485.65px;width:200px;text-align:center;">85</span>
<span class="t" style="top:146.97px;font-size:5.1px;line-height:6.12px;color:#33301f;left:498.95px;width:200px;text-align:center;">85</span>
<span class="t" style="top:146.97px;font-size:5.1px;line-height:6.12px;color:#33301f;left:512.25px;width:200px;text-align:center;">84</span>
<span class="t" style="top:146.97px;font-size:5.1px;line-height:6.12px;color:#33301f;left:525.55px;width:200px;text-align:center;">84</span>
<span class="t" style="top:152.81px;font-size:5.1px;line-height:6.12px;color:#2c2c34;left:313.15px;width:200px;text-align:center;">30</span>
<span class="t" style="top:152.91px;font-size:5.1px;line-height:6.12px;color:#33301f;left:326.05px;width:200px;text-align:center;">56</span>
<span class="t" style="top:152.91px;font-size:5.1px;line-height:6.12px;color:#33301f;left:339.35px;width:200px;text-align:center;">65</span>
<span class="t" style="top:152.91px;font-size:5.1px;line-height:6.12px;color:#33301f;left:352.65px;width:200px;text-align:center;">67</span>
<span class="t" style="top:152.91px;font-size:5.1px;line-height:6.12px;color:#33301f;left:365.95px;width:200px;text-align:center;">67</span>
<span class="t" style="top:152.91px;font-size:5.1px;line-height:6.12px;color:#33301f;left:379.25px;width:200px;text-align:center;">64</span>
<span class="t" style="top:152.91px;font-size:5.1px;line-height:6.12px;color:#33301f;left:392.55px;width:200px;text-align:center;">60</span>
<span class="t" style="top:152.91px;font-size:5.1px;line-height:6.12px;color:#33301f;left:405.85px;width:200px;text-align:center;">57</span>
<span class="t" style="top:152.91px;font-size:5.1px;line-height:6.12px;color:#33301f;left:419.15px;width:200px;text-align:center;">63</span>
<span class="t" style="top:152.91px;font-size:5.1px;line-height:6.12px;color:#33301f;left:432.45px;width:200px;text-align:center;">72</span>
<span class="t" style="top:152.91px;font-size:5.1px;line-height:6.12px;color:#33301f;left:445.75px;width:200px;text-align:center;">78</span>
<span class="t" style="top:152.91px;font-size:5.1px;line-height:6.12px;color:#33301f;left:459.05px;width:200px;text-align:center;">83</span>
<span class="t" style="top:152.91px;font-size:5.1px;line-height:6.12px;color:#33301f;left:472.35px;width:200px;text-align:center;">83</span>
<span class="t" style="top:152.91px;font-size:5.1px;line-height:6.12px;color:#33301f;left:485.65px;width:200px;text-align:center;">83</span>
<span class="t" style="top:152.91px;font-size:5.1px;line-height:6.12px;color:#33301f;left:498.95px;width:200px;text-align:center;">83</span>
<span class="t" style="top:152.91px;font-size:5.1px;line-height:6.12px;color:#33301f;left:512.25px;width:200px;text-align:center;">83</span>
<span class="t" style="top:152.91px;font-size:5.1px;line-height:6.12px;color:#33301f;left:525.55px;width:200px;text-align:center;">83</span>
<span class="t" style="top:158.74px;font-size:5.1px;line-height:6.12px;color:#2c2c34;left:313.15px;width:200px;text-align:center;">20</span>
<span class="t" style="top:158.84px;font-size:5.1px;line-height:6.12px;color:#33301f;left:326.05px;width:200px;text-align:center;">47</span>
<span class="t" style="top:158.84px;font-size:5.1px;line-height:6.12px;color:#33301f;left:339.35px;width:200px;text-align:center;">54</span>
<span class="t" style="top:158.84px;font-size:5.1px;line-height:6.12px;color:#33301f;left:352.65px;width:200px;text-align:center;">58</span>
<span class="t" style="top:158.84px;font-size:5.1px;line-height:6.12px;color:#33301f;left:365.95px;width:200px;text-align:center;">57</span>
<span class="t" style="top:158.84px;font-size:5.1px;line-height:6.12px;color:#33301f;left:379.25px;width:200px;text-align:center;">58</span>
<span class="t" style="top:158.84px;font-size:5.1px;line-height:6.12px;color:#33301f;left:392.55px;width:200px;text-align:center;">54</span>
<span class="t" style="top:158.84px;font-size:5.1px;line-height:6.12px;color:#33301f;left:405.85px;width:200px;text-align:center;">53</span>
<span class="t" style="top:158.84px;font-size:5.1px;line-height:6.12px;color:#33301f;left:419.15px;width:200px;text-align:center;">58</span>
<span class="t" style="top:158.84px;font-size:5.1px;line-height:6.12px;color:#33301f;left:432.45px;width:200px;text-align:center;">62</span>
<span class="t" style="top:158.84px;font-size:5.1px;line-height:6.12px;color:#33301f;left:445.75px;width:200px;text-align:center;">68</span>
<span class="t" style="top:158.84px;font-size:5.1px;line-height:6.12px;color:#33301f;left:459.05px;width:200px;text-align:center;">70</span>
<span class="t" style="top:158.84px;font-size:5.1px;line-height:6.12px;color:#33301f;left:472.35px;width:200px;text-align:center;">70</span>
<span class="t" style="top:158.84px;font-size:5.1px;line-height:6.12px;color:#33301f;left:485.65px;width:200px;text-align:center;">70</span>
<span class="t" style="top:158.84px;font-size:5.1px;line-height:6.12px;color:#33301f;left:498.95px;width:200px;text-align:center;">70</span>
<span class="t" style="top:158.84px;font-size:5.1px;line-height:6.12px;color:#33301f;left:512.25px;width:200px;text-align:center;">70</span>
<span class="t" style="top:158.84px;font-size:5.1px;line-height:6.12px;color:#33301f;left:525.55px;width:200px;text-align:center;">70</span>
<span class="t" style="top:164.67px;font-size:5.1px;line-height:6.12px;color:#2c2c34;left:313.15px;width:200px;text-align:center;">15</span>
<span class="t" style="top:164.77px;font-size:5.1px;line-height:6.12px;color:#33301f;left:326.05px;width:200px;text-align:center;">35</span>
<span class="t" style="top:164.77px;font-size:5.1px;line-height:6.12px;color:#33301f;left:339.35px;width:200px;text-align:center;">40</span>
<span class="t" style="top:164.77px;font-size:5.1px;line-height:6.12px;color:#33301f;left:352.65px;width:200px;text-align:center;">40</span>
<span class="t" style="top:164.77px;font-size:5.1px;line-height:6.12px;color:#33301f;left:365.95px;width:200px;text-align:center;">44</span>
<span class="t" style="top:164.77px;font-size:5.1px;line-height:6.12px;color:#33301f;left:379.25px;width:200px;text-align:center;">46</span>
<span class="t" style="top:164.77px;font-size:5.1px;line-height:6.12px;color:#33301f;left:392.55px;width:200px;text-align:center;">40</span>
<span class="t" style="top:164.77px;font-size:5.1px;line-height:6.12px;color:#33301f;left:405.85px;width:200px;text-align:center;">40</span>
<span class="t" style="top:164.77px;font-size:5.1px;line-height:6.12px;color:#33301f;left:419.15px;width:200px;text-align:center;">40</span>
<span class="t" style="top:164.77px;font-size:5.1px;line-height:6.12px;color:#33301f;left:432.45px;width:200px;text-align:center;">40</span>
<span class="t" style="top:164.77px;font-size:5.1px;line-height:6.12px;color:#33301f;left:445.75px;width:200px;text-align:center;">54</span>
<span class="t" style="top:164.77px;font-size:5.1px;line-height:6.12px;color:#33301f;left:459.05px;width:200px;text-align:center;">57</span>
<span class="t" style="top:164.77px;font-size:5.1px;line-height:6.12px;color:#33301f;left:472.35px;width:200px;text-align:center;">57</span>
<span class="t" style="top:164.77px;font-size:5.1px;line-height:6.12px;color:#33301f;left:485.65px;width:200px;text-align:center;">57</span>
<span class="t" style="top:164.77px;font-size:5.1px;line-height:6.12px;color:#33301f;left:498.95px;width:200px;text-align:center;">57</span>
<span class="t" style="top:164.77px;font-size:5.1px;line-height:6.12px;color:#33301f;left:512.25px;width:200px;text-align:center;">57</span>
<span class="t" style="top:164.77px;font-size:5.1px;line-height:6.12px;color:#33301f;left:525.55px;width:200px;text-align:center;">57</span>
<span class="t" style="top:170.60px;font-size:5.1px;line-height:6.12px;color:#2c2c34;left:313.15px;width:200px;text-align:center;">10</span>
<span class="t" style="top:170.70px;font-size:5.1px;line-height:6.12px;color:#33301f;left:326.05px;width:200px;text-align:center;">29</span>
<span class="t" style="top:170.70px;font-size:5.1px;line-height:6.12px;color:#33301f;left:339.35px;width:200px;text-align:center;">31</span>
<span class="t" style="top:170.70px;font-size:5.1px;line-height:6.12px;color:#33301f;left:352.65px;width:200px;text-align:center;">34</span>
<span class="t" style="top:170.70px;font-size:5.1px;line-height:6.12px;color:#33301f;left:365.95px;width:200px;text-align:center;">32</span>
<span class="t" style="top:170.70px;font-size:5.1px;line-height:6.12px;color:#33301f;left:379.25px;width:200px;text-align:center;">33</span>
<span class="t" style="top:170.70px;font-size:5.1px;line-height:6.12px;color:#33301f;left:392.55px;width:200px;text-align:center;">32</span>
<span class="t" style="top:170.70px;font-size:5.1px;line-height:6.12px;color:#33301f;left:405.85px;width:200px;text-align:center;">30</span>
<span class="t" style="top:170.70px;font-size:5.1px;line-height:6.12px;color:#33301f;left:419.15px;width:200px;text-align:center;">34</span>
<span class="t" style="top:170.70px;font-size:5.1px;line-height:6.12px;color:#33301f;left:432.45px;width:200px;text-align:center;">37</span>
<span class="t" style="top:170.70px;font-size:5.1px;line-height:6.12px;color:#33301f;left:445.75px;width:200px;text-align:center;">41</span>
<span class="t" style="top:170.70px;font-size:5.1px;line-height:6.12px;color:#33301f;left:459.05px;width:200px;text-align:center;">53</span>
<span class="t" style="top:170.70px;font-size:5.1px;line-height:6.12px;color:#33301f;left:472.35px;width:200px;text-align:center;">53</span>
<span class="t" style="top:170.70px;font-size:5.1px;line-height:6.12px;color:#33301f;left:485.65px;width:200px;text-align:center;">54</span>
<span class="t" style="top:170.70px;font-size:5.1px;line-height:6.12px;color:#33301f;left:498.95px;width:200px;text-align:center;">53</span>
<span class="t" style="top:170.70px;font-size:5.1px;line-height:6.12px;color:#33301f;left:512.25px;width:200px;text-align:center;">53</span>
<span class="t" style="top:170.70px;font-size:5.1px;line-height:6.12px;color:#33301f;left:525.55px;width:200px;text-align:center;">53</span>
<span class="t" style="top:176.53px;font-size:5.1px;line-height:6.12px;color:#2c2c34;left:313.15px;width:200px;text-align:center;">6</span>
<span class="t" style="top:176.62px;font-size:5.1px;line-height:6.12px;color:#33301f;left:326.05px;width:200px;text-align:center;">18</span>
<span class="t" style="top:176.62px;font-size:5.1px;line-height:6.12px;color:#33301f;left:339.35px;width:200px;text-align:center;">22</span>
<span class="t" style="top:176.62px;font-size:5.1px;line-height:6.12px;color:#33301f;left:352.65px;width:200px;text-align:center;">24</span>
<span class="t" style="top:176.62px;font-size:5.1px;line-height:6.12px;color:#33301f;left:365.95px;width:200px;text-align:center;">26</span>
<span class="t" style="top:176.62px;font-size:5.1px;line-height:6.12px;color:#33301f;left:379.25px;width:200px;text-align:center;">26</span>
<span class="t" style="top:176.62px;font-size:5.1px;line-height:6.12px;color:#33301f;left:392.55px;width:200px;text-align:center;">26</span>
<span class="t" style="top:176.62px;font-size:5.1px;line-height:6.12px;color:#33301f;left:405.85px;width:200px;text-align:center;">27</span>
<span class="t" style="top:176.62px;font-size:5.1px;line-height:6.12px;color:#33301f;left:419.15px;width:200px;text-align:center;">33</span>
<span class="t" style="top:176.62px;font-size:5.1px;line-height:6.12px;color:#33301f;left:432.45px;width:200px;text-align:center;">37</span>
<span class="t" style="top:176.62px;font-size:5.1px;line-height:6.12px;color:#33301f;left:445.75px;width:200px;text-align:center;">39</span>
<span class="t" style="top:176.62px;font-size:5.1px;line-height:6.12px;color:#33301f;left:459.05px;width:200px;text-align:center;">40</span>
<span class="t" style="top:176.62px;font-size:5.1px;line-height:6.12px;color:#33301f;left:472.35px;width:200px;text-align:center;">40</span>
<span class="t" style="top:176.62px;font-size:5.1px;line-height:6.12px;color:#33301f;left:485.65px;width:200px;text-align:center;">40</span>
<span class="t" style="top:176.62px;font-size:5.1px;line-height:6.12px;color:#33301f;left:498.95px;width:200px;text-align:center;">40</span>
<span class="t" style="top:176.62px;font-size:5.1px;line-height:6.12px;color:#33301f;left:512.25px;width:200px;text-align:center;">40</span>
<span class="t" style="top:176.62px;font-size:5.1px;line-height:6.12px;color:#33301f;left:525.55px;width:200px;text-align:center;">40</span>
<span class="t" style="top:182.45px;font-size:5.1px;line-height:6.12px;color:#2c2c34;left:313.15px;width:200px;text-align:center;">2</span>
<span class="t" style="top:182.55px;font-size:5.1px;line-height:6.12px;color:#33301f;left:326.05px;width:200px;text-align:center;">20</span>
<span class="t" style="top:182.55px;font-size:5.1px;line-height:6.12px;color:#33301f;left:339.35px;width:200px;text-align:center;">19</span>
<span class="t" style="top:182.55px;font-size:5.1px;line-height:6.12px;color:#33301f;left:352.65px;width:200px;text-align:center;">18</span>
<span class="t" style="top:182.55px;font-size:5.1px;line-height:6.12px;color:#33301f;left:365.95px;width:200px;text-align:center;">18</span>
<span class="t" style="top:182.55px;font-size:5.1px;line-height:6.12px;color:#33301f;left:379.25px;width:200px;text-align:center;">23</span>
<span class="t" style="top:182.55px;font-size:5.1px;line-height:6.12px;color:#33301f;left:392.55px;width:200px;text-align:center;">22</span>
<span class="t" style="top:182.55px;font-size:5.1px;line-height:6.12px;color:#33301f;left:405.85px;width:200px;text-align:center;">24</span>
<span class="t" style="top:182.55px;font-size:5.1px;line-height:6.12px;color:#33301f;left:419.15px;width:200px;text-align:center;">28</span>
<span class="t" style="top:182.55px;font-size:5.1px;line-height:6.12px;color:#33301f;left:432.45px;width:200px;text-align:center;">29</span>
<span class="t" style="top:182.55px;font-size:5.1px;line-height:6.12px;color:#33301f;left:445.75px;width:200px;text-align:center;">32</span>
<span class="t" style="top:182.55px;font-size:5.1px;line-height:6.12px;color:#33301f;left:459.05px;width:200px;text-align:center;">35</span>
<span class="t" style="top:182.55px;font-size:5.1px;line-height:6.12px;color:#33301f;left:472.35px;width:200px;text-align:center;">35</span>
<span class="t" style="top:182.55px;font-size:5.1px;line-height:6.12px;color:#33301f;left:485.65px;width:200px;text-align:center;">42</span>
<span class="t" style="top:182.55px;font-size:5.1px;line-height:6.12px;color:#33301f;left:498.95px;width:200px;text-align:center;">42</span>
<span class="t" style="top:182.55px;font-size:5.1px;line-height:6.12px;color:#33301f;left:512.25px;width:200px;text-align:center;">42</span>
<span class="t" style="top:182.55px;font-size:5.1px;line-height:6.12px;color:#33301f;left:525.55px;width:200px;text-align:center;">42</span>
<span class="t" style="top:191.34px;font-size:5.1px;line-height:6.12px;color:#2a2a2a;left:326.05px;width:200px;text-align:center;">600</span>
<span class="t" style="top:191.34px;font-size:5.1px;line-height:6.12px;color:#2a2a2a;left:339.35px;width:200px;text-align:center;">900</span>
<span class="t" style="top:191.34px;font-size:5.1px;line-height:6.12px;color:#2a2a2a;left:352.65px;width:200px;text-align:center;">1200</span>
<span class="t" style="top:191.34px;font-size:5.1px;line-height:6.12px;color:#2a2a2a;left:365.95px;width:200px;text-align:center;">1600</span>
<span class="t" style="top:191.34px;font-size:5.1px;line-height:6.12px;color:#2a2a2a;left:379.25px;width:200px;text-align:center;">2000</span>
<span class="t" style="top:191.34px;font-size:5.1px;line-height:6.12px;color:#2a2a2a;left:392.55px;width:200px;text-align:center;">2300</span>
<span class="t" style="top:191.34px;font-size:5.1px;line-height:6.12px;color:#2a2a2a;left:405.85px;width:200px;text-align:center;">2700</span>
<span class="t" style="top:191.34px;font-size:5.1px;line-height:6.12px;color:#2a2a2a;left:419.15px;width:200px;text-align:center;">3100</span>
<span class="t" style="top:191.34px;font-size:5.1px;line-height:6.12px;color:#2a2a2a;left:432.45px;width:200px;text-align:center;">3400</span>
<span class="t" style="top:191.34px;font-size:5.1px;line-height:6.12px;color:#2a2a2a;left:445.75px;width:200px;text-align:center;">3800</span>
<span class="t" style="top:191.34px;font-size:5.1px;line-height:6.12px;color:#2a2a2a;left:459.05px;width:200px;text-align:center;">4200</span>
<span class="t" style="top:191.34px;font-size:5.1px;line-height:6.12px;color:#2a2a2a;left:472.35px;width:200px;text-align:center;">4600</span>
<span class="t" style="top:191.34px;font-size:5.1px;line-height:6.12px;color:#2a2a2a;left:485.65px;width:200px;text-align:center;">4900</span>
<span class="t" style="top:191.34px;font-size:5.1px;line-height:6.12px;color:#2a2a2a;left:498.95px;width:200px;text-align:center;">5200</span>
<span class="t" style="top:191.34px;font-size:5.1px;line-height:6.12px;color:#2a2a2a;left:512.25px;width:200px;text-align:center;">5500</span>
<span class="t" style="top:191.34px;font-size:5.1px;line-height:6.12px;color:#2a2a2a;left:525.55px;width:200px;text-align:center;">5800</span>
<svg class="abs" style="left:497.8px;top:95.2px" width="3.6" height="3" viewBox="0 0 3.6 3"><path d="M0 1.5L2.4 0V3Z M2.2 0.9H3.6V2.1H2.2Z" fill="#1830c8"/></svg>
<div style="left:419.40px;top:205.30px;width:65.20px;height:10.00px;background:linear-gradient(#ffffff,#f2f1ea 70%,#dcd8cc);border:1px solid #7f93b4;border-radius:2px;box-sizing:border-box;"></div>
<span class="t" style="top:207.06px;font-size:5.4px;line-height:6.48px;color:#111;left:352.00px;width:200px;text-align:center;">Open Tune File</span>
<div style="left:486.40px;top:205.30px;width:65.20px;height:10.00px;background:linear-gradient(#ffffff,#f2f1ea 70%,#dcd8cc);border:1px solid #7f93b4;border-radius:2px;box-sizing:border-box;"></div>
<span class="t" style="top:207.06px;font-size:5.4px;line-height:6.48px;color:#111;left:419.00px;width:200px;text-align:center;">Save Tune</span>
<div style="left:419.40px;top:217.10px;width:65.20px;height:10.00px;background:linear-gradient(#ffffff,#f2f1ea 70%,#dcd8cc);border:1px solid #7f93b4;border-radius:2px;box-sizing:border-box;"></div>
<span class="t" style="top:218.86px;font-size:5.4px;line-height:6.48px;color:#111;left:352.00px;width:200px;text-align:center;">VE Analyzer</span>
<div style="left:486.40px;top:217.10px;width:65.20px;height:10.00px;background:linear-gradient(#ffffff,#f2f1ea 70%,#dcd8cc);border:1px solid #7f93b4;border-radius:2px;box-sizing:border-box;"></div>
<span class="t" style="top:218.86px;font-size:5.4px;line-height:6.48px;color:#111;left:419.00px;width:200px;text-align:center;">Save Tune As</span>
<div style="left:553.00px;top:204.40px;width:66.00px;height:0.60px;background:#aca899;"></div>
<div style="left:553.00px;top:216.30px;width:66.00px;height:0.60px;background:#aca899;"></div>
<div style="left:553.00px;top:204.40px;width:0.60px;height:24.00px;background:#aca899;"></div>
<span class="t" style="top:206.72px;font-size:6.3px;line-height:7.56px;color:#000;font-weight:bold;left:486.00px;width:200px;text-align:center;">veTable1</span>
<span class="t" style="top:218.42px;font-size:6.3px;line-height:7.56px;color:#000;font-weight:bold;left:486.00px;width:200px;text-align:center;">advanceTable1</span>
<div style="left:414.80px;top:230.40px;width:221.40px;height:94.60px;border:0.7px solid #aca899;border-right-color:#fff;border-bottom-color:#fff;box-sizing:border-box;"></div>
<div style="left:416.60px;top:232.20px;width:218.00px;height:91.20px;background:#f1efe2;border:0.6px solid #fff;border-right-color:#aca899;border-bottom-color:#aca899;box-sizing:border-box;"></div>
<div style="left:472.30px;top:233.00px;width:0.50px;height:9.00px;background:#d8d4c4;"></div>
<span class="t" style="top:232.54px;font-size:6.1px;line-height:7.32px;color:#000;font-weight:bold;left:420.00px;">advanceTable1</span>
<div style="left:527.90px;top:233.00px;width:8.10px;height:8.10px;background:linear-gradient(135deg,#a6ea86,#5cc440 55%,#6ad04a);border:1px solid #7cc066;border-radius:1.8px;box-sizing:border-box;"></div>
<svg class="abs" style="left:527.90px;top:233.00px" width="8.1" height="8.1" viewBox="0 0 8.5 8.5"><path d="M2 2.2H5V5.2M5 2.2L2 6.4" fill="none" stroke="#f4fff0" stroke-width="1.3"/></svg>
<div style="left:538.40px;top:233.00px;width:8.10px;height:8.10px;background:linear-gradient(135deg,#a6ea86,#5cc440 55%,#6ad04a);border:1px solid #7cc066;border-radius:1.8px;box-sizing:border-box;"></div>
<svg class="abs" style="left:538.40px;top:233.00px" width="8.1" height="8.1" viewBox="0 0 8.5 8.5"><path d="M3.4 2.2H6.4V5.4H4M4.6 4.2L3.2 5.4L4.6 6.6" fill="none" stroke="#f4fff0" stroke-width="1.2"/></svg>
<div style="left:548.90px;top:233.00px;width:8.10px;height:8.10px;background:linear-gradient(#ffffff,#f0f0f4);border:1px solid #9a9ea6;border-radius:1.8px;box-sizing:border-box;"></div>
<svg class="abs" style="left:548.90px;top:233.00px" width="8.1" height="8.1" viewBox="0 0 8.5 8.5"><path d="M3.1 3.7H5.5M3.1 5.1H5.5" stroke="#222" stroke-width="0.75"/></svg>
<div style="left:559.40px;top:233.00px;width:8.10px;height:8.10px;background:linear-gradient(#ffffff,#f0f0f4);border:1px solid #9a9ea6;border-radius:1.8px;box-sizing:border-box;"></div>
<svg class="abs" style="left:559.40px;top:233.00px" width="8.1" height="8.1" viewBox="0 0 8.5 8.5"><path d="M2.1 6L4.25 2.5L6.4 6Z" fill="#000"/></svg>
<div style="left:569.90px;top:233.00px;width:8.10px;height:8.10px;background:linear-gradient(#ffffff,#f0f0f4);border:1px solid #9a9ea6;border-radius:1.8px;box-sizing:border-box;"></div>
<svg class="abs" style="left:569.90px;top:233.00px" width="8.1" height="8.1" viewBox="0 0 8.5 8.5"><path d="M2.1 2.8L4.25 6.3L6.4 2.8Z" fill="#000"/></svg>
<div style="left:580.40px;top:233.00px;width:8.10px;height:8.10px;background:linear-gradient(#ffffff,#f0f0f4);border:1px solid #9a9ea6;border-radius:1.8px;box-sizing:border-box;"></div>
<svg class="abs" style="left:580.40px;top:233.00px" width="8.1" height="8.1" viewBox="0 0 8.5 8.5"><path d="M2.6 4.4H5.9" stroke="#222" stroke-width="0.8"/></svg>
<div style="left:590.90px;top:233.00px;width:8.10px;height:8.10px;background:linear-gradient(#ffffff,#f0f0f4);border:1px solid #9a9ea6;border-radius:1.8px;box-sizing:border-box;"></div>
<svg class="abs" style="left:590.90px;top:233.00px" width="8.1" height="8.1" viewBox="0 0 8.5 8.5"><path d="M2.6 4.4H5.9M4.25 2.75V6.05" stroke="#222" stroke-width="0.8"/></svg>
<div style="left:601.40px;top:233.00px;width:8.10px;height:8.10px;background:linear-gradient(#ffffff,#f0f0f4);border:1px solid #9a9ea6;border-radius:1.8px;box-sizing:border-box;"></div>
<svg class="abs" style="left:601.40px;top:233.00px" width="8.1" height="8.1" viewBox="0 0 8.5 8.5"><path d="M2.9 4.4H5.6M4.25 3V5.8M3.2 3.3L5.3 5.5M5.3 3.3L3.2 5.5" stroke="#222" stroke-width="0.7"/></svg>
<div style="left:611.90px;top:233.00px;width:8.10px;height:8.10px;background:linear-gradient(#ffffff,#f0f0f4);border:1px solid #9a9ea6;border-radius:1.8px;box-sizing:border-box;"></div>
<svg class="abs" style="left:611.90px;top:233.00px" width="8.1" height="8.1" viewBox="0 0 8.5 8.5"><path d="M2.2 6.4L6.2 2.2" stroke="#d42020" stroke-width="1.5"/><path d="M3.6 6.6L6.8 3.2" stroke="#2030c0" stroke-width="0.9"/></svg>
<svg class="abs" style="left:0;top:0" width="640" height="480" viewBox="0 0 640 480"><rect x="418.00" y="242.60" width="14.50" height="5.93" fill="#d6d6d6"/><rect x="418.00" y="247.63" width="14.50" height="0.9" fill="#8d929c"/><rect x="418.00" y="242.60" width="14.50" height="0.6" fill="#eceef2"/><rect x="433.60" y="242.60" width="15.65" height="5.98" fill="#8686fc"/><rect x="449.20" y="242.60" width="15.65" height="5.98" fill="#8686fc"/><rect x="464.80" y="242.60" width="15.65" height="5.98" fill="#8fabe7"/><rect x="480.40" y="242.60" width="15.65" height="5.98" fill="#90bad8"/><rect x="496.00" y="242.60" width="15.65" height="5.98" fill="#90ccc2"/><rect x="511.60" y="242.60" width="15.65" height="5.98" fill="#f0f000"/><rect x="527.20" y="242.60" width="15.65" height="5.98" fill="#b4d822"/><rect x="542.80" y="242.60" width="15.65" height="5.98" fill="#d0c890"/><rect x="558.40" y="242.60" width="15.65" height="5.98" fill="#e2b090"/><rect x="574.00" y="242.60" width="15.65" height="5.98" fill="#f09690"/><rect x="589.60" y="242.60" width="15.65" height="5.98" fill="#f09690"/><rect x="605.20" y="242.60" width="15.65" height="5.98" fill="#f09690"/><rect x="418.00" y="248.53" width="14.50" height="5.93" fill="#d6d6d6"/><rect x="418.00" y="253.56" width="14.50" height="0.9" fill="#8d929c"/><rect x="418.00" y="248.53" width="14.50" height="0.6" fill="#eceef2"/><rect x="433.60" y="248.53" width="15.65" height="5.98" fill="#8686fc"/><rect x="449.20" y="248.53" width="15.65" height="5.98" fill="#8686fc"/><rect x="464.80" y="248.53" width="15.65" height="5.98" fill="#8fabe7"/><rect x="480.40" y="248.53" width="15.65" height="5.98" fill="#90bad8"/><rect x="496.00" y="248.53" width="15.65" height="5.98" fill="#90ccc2"/><rect x="511.60" y="248.53" width="15.65" height="5.98" fill="#92ea92"/><rect x="527.20" y="248.53" width="15.65" height="5.98" fill="#b8db90"/><rect x="542.80" y="248.53" width="15.65" height="5.98" fill="#d0c890"/><rect x="558.40" y="248.53" width="15.65" height="5.98" fill="#e2b090"/><rect x="574.00" y="248.53" width="15.65" height="5.98" fill="#f09690"/><rect x="589.60" y="248.53" width="15.65" height="5.98" fill="#f09690"/><rect x="605.20" y="248.53" width="15.65" height="5.98" fill="#f09690"/><rect x="418.00" y="254.46" width="14.50" height="5.93" fill="#d6d6d6"/><rect x="418.00" y="259.49" width="14.50" height="0.9" fill="#8d929c"/><rect x="418.00" y="254.46" width="14.50" height="0.6" fill="#eceef2"/><rect x="433.60" y="254.46" width="15.65" height="5.98" fill="#898ff7"/><rect x="449.20" y="254.46" width="15.65" height="5.98" fill="#898ff7"/><rect x="464.80" y="254.46" width="15.65" height="5.98" fill="#8fabe7"/><rect x="480.40" y="254.46" width="15.65" height="5.98" fill="#90bad8"/><rect x="496.00" y="254.46" width="15.65" height="5.98" fill="#90ccc2"/><rect x="511.60" y="254.46" width="15.65" height="5.98" fill="#92ea92"/><rect x="527.20" y="254.46" width="15.65" height="5.98" fill="#c4d190"/><rect x="542.80" y="254.46" width="15.65" height="5.98" fill="#d0c890"/><rect x="558.40" y="254.46" width="15.65" height="5.98" fill="#e2b090"/><rect x="574.00" y="254.46" width="15.65" height="5.98" fill="#f1918e"/><rect x="589.60" y="254.46" width="15.65" height="5.98" fill="#f1918e"/><rect x="605.20" y="254.46" width="15.65" height="5.98" fill="#f1918e"/><rect x="418.00" y="260.39" width="14.50" height="5.93" fill="#d6d6d6"/><rect x="418.00" y="265.42" width="14.50" height="0.9" fill="#8d929c"/><rect x="418.00" y="260.39" width="14.50" height="0.6" fill="#eceef2"/><rect x="433.60" y="260.39" width="15.65" height="5.98" fill="#898ff7"/><rect x="449.20" y="260.39" width="15.65" height="5.98" fill="#898ff7"/><rect x="464.80" y="260.39" width="15.65" height="5.98" fill="#8fabe7"/><rect x="480.40" y="260.39" width="15.65" height="5.98" fill="#90bad8"/><rect x="496.00" y="260.39" width="15.65" height="5.98" fill="#90ccc2"/><rect x="511.60" y="260.39" width="15.65" height="5.98" fill="#92ea92"/><rect x="527.20" y="260.39" width="15.65" height="5.98" fill="#d0c890"/><rect x="542.80" y="260.39" width="15.65" height="5.98" fill="#d0c890"/><rect x="558.40" y="260.39" width="15.65" height="5.98" fill="#e2b090"/><rect x="574.00" y="260.39" width="15.65" height="5.98" fill="#f09690"/><rect x="589.60" y="260.39" width="15.65" height="5.98" fill="#f09690"/><rect x="605.20" y="260.39" width="15.65" height="5.98" fill="#f09690"/><rect x="418.00" y="266.32" width="14.50" height="5.93" fill="#d6d6d6"/><rect x="418.00" y="271.35" width="14.50" height="0.9" fill="#8d929c"/><rect x="418.00" y="266.32" width="14.50" height="0.6" fill="#eceef2"/><rect x="433.60" y="266.32" width="15.65" height="5.98" fill="#898ff7"/><rect x="449.20" y="266.32" width="15.65" height="5.98" fill="#898ff7"/><rect x="464.80" y="266.32" width="15.65" height="5.98" fill="#8fabe7"/><rect x="480.40" y="266.32" width="15.65" height="5.98" fill="#90bad8"/><rect x="496.00" y="266.32" width="15.65" height="5.98" fill="#90ccc2"/><rect x="511.60" y="266.32" width="15.65" height="5.98" fill="#92ea92"/><rect x="527.20" y="266.32" width="15.65" height="5.98" fill="#ace490"/><rect x="542.80" y="266.32" width="15.65" height="5.98" fill="#d0c890"/><rect x="558.40" y="266.32" width="15.65" height="5.98" fill="#d6c090"/><rect x="574.00" y="266.32" width="15.65" height="5.98" fill="#f09690"/><rect x="589.60" y="266.32" width="15.65" height="5.98" fill="#f09690"/><rect x="605.20" y="266.32" width="15.65" height="5.98" fill="#f09690"/><rect x="418.00" y="272.25" width="14.50" height="5.93" fill="#d6d6d6"/><rect x="418.00" y="277.28" width="14.50" height="0.9" fill="#8d929c"/><rect x="418.00" y="272.25" width="14.50" height="0.6" fill="#eceef2"/><rect x="433.60" y="272.25" width="15.65" height="5.98" fill="#8686fc"/><rect x="449.20" y="272.25" width="15.65" height="5.98" fill="#898ff7"/><rect x="464.80" y="272.25" width="15.65" height="5.98" fill="#8fabe7"/><rect x="480.40" y="272.25" width="15.65" height="5.98" fill="#90bad8"/><rect x="496.00" y="272.25" width="15.65" height="5.98" fill="#90ccc2"/><rect x="511.60" y="272.25" width="15.65" height="5.98" fill="#92ea92"/><rect x="527.20" y="272.25" width="15.65" height="5.98" fill="#ace490"/><rect x="542.80" y="272.25" width="15.65" height="5.98" fill="#d0c890"/><rect x="558.40" y="272.25" width="15.65" height="5.98" fill="#d6c090"/><rect x="574.00" y="272.25" width="15.65" height="5.98" fill="#f09690"/><rect x="589.60" y="272.25" width="15.65" height="5.98" fill="#f09690"/><rect x="605.20" y="272.25" width="15.65" height="5.98" fill="#f09690"/><rect x="418.00" y="278.18" width="14.50" height="5.93" fill="#d6d6d6"/><rect x="418.00" y="283.21" width="14.50" height="0.9" fill="#8d929c"/><rect x="418.00" y="278.18" width="14.50" height="0.6" fill="#eceef2"/><rect x="433.60" y="278.18" width="15.65" height="5.98" fill="#8686fc"/><rect x="449.20" y="278.18" width="15.65" height="5.98" fill="#898ff7"/><rect x="464.80" y="278.18" width="15.65" height="5.98" fill="#8fabe7"/><rect x="480.40" y="278.18" width="15.65" height="5.98" fill="#90bad8"/><rect x="496.00" y="278.18" width="15.65" height="5.98" fill="#90ccc2"/><rect x="511.60" y="278.18" width="15.65" height="5.98" fill="#91e898"/><rect x="527.20" y="278.18" width="15.65" height="5.98" fill="#ace490"/><rect x="542.80" y="278.18" width="15.65" height="5.98" fill="#d0c890"/><rect x="558.40" y="278.18" width="15.65" height="5.98" fill="#e2b090"/><rect x="574.00" y="278.18" width="15.65" height="5.98" fill="#f28c8c"/><rect x="589.60" y="278.18" width="15.65" height="5.98" fill="#f28c8c"/><rect x="605.20" y="278.18" width="15.65" height="5.98" fill="#f28c8c"/><rect x="418.00" y="284.11" width="14.50" height="5.93" fill="#d6d6d6"/><rect x="418.00" y="289.14" width="14.50" height="0.9" fill="#8d929c"/><rect x="418.00" y="284.11" width="14.50" height="0.6" fill="#eceef2"/><rect x="433.60" y="284.11" width="15.65" height="5.98" fill="#8686fc"/><rect x="449.20" y="284.11" width="15.65" height="5.98" fill="#898ff7"/><rect x="464.80" y="284.11" width="15.65" height="5.98" fill="#8fabe7"/><rect x="480.40" y="284.11" width="15.65" height="5.98" fill="#90bad8"/><rect x="496.00" y="284.11" width="15.65" height="5.98" fill="#90ccc2"/><rect x="511.60" y="284.11" width="15.65" height="5.98" fill="#90d8b3"/><rect x="527.20" y="284.11" width="15.65" height="5.98" fill="#ace490"/><rect x="542.80" y="284.11" width="15.65" height="5.98" fill="#d0c890"/><rect x="558.40" y="284.11" width="15.65" height="5.98" fill="#e2b090"/><rect x="574.00" y="284.11" width="15.65" height="5.98" fill="#f28c8c"/><rect x="589.60" y="284.11" width="15.65" height="5.98" fill="#f28c8c"/><rect x="605.20" y="284.11" width="15.65" height="5.98" fill="#f28c8c"/><rect x="418.00" y="290.04" width="14.50" height="5.93" fill="#d6d6d6"/><rect x="418.00" y="295.07" width="14.50" height="0.9" fill="#8d929c"/><rect x="418.00" y="290.04" width="14.50" height="0.6" fill="#eceef2"/><rect x="433.60" y="290.04" width="15.65" height="5.98" fill="#8686fc"/><rect x="449.20" y="290.04" width="15.65" height="5.98" fill="#898ff7"/><rect x="464.80" y="290.04" width="15.65" height="5.98" fill="#8fabe7"/><rect x="480.40" y="290.04" width="15.65" height="5.98" fill="#90bad8"/><rect x="496.00" y="290.04" width="15.65" height="5.98" fill="#90c5cb"/><rect x="511.60" y="290.04" width="15.65" height="5.98" fill="#90d8b3"/><rect x="527.20" y="290.04" width="15.65" height="5.98" fill="#ace490"/><rect x="542.80" y="290.04" width="15.65" height="5.98" fill="#d0c890"/><rect x="558.40" y="290.04" width="15.65" height="5.98" fill="#e2b090"/><rect x="574.00" y="290.04" width="15.65" height="5.98" fill="#f28c8c"/><rect x="589.60" y="290.04" width="15.65" height="5.98" fill="#f28c8c"/><rect x="605.20" y="290.04" width="15.65" height="5.98" fill="#f28c8c"/><rect x="418.00" y="295.97" width="14.50" height="5.93" fill="#d6d6d6"/><rect x="418.00" y="301.00" width="14.50" height="0.9" fill="#8d929c"/><rect x="418.00" y="295.97" width="14.50" height="0.6" fill="#eceef2"/><rect x="433.60" y="295.97" width="15.65" height="5.98" fill="#8686fc"/><rect x="449.20" y="295.97" width="15.65" height="5.98" fill="#898ff7"/><rect x="464.80" y="295.97" width="15.65" height="5.98" fill="#8fabe7"/><rect x="480.40" y="295.97" width="15.65" height="5.98" fill="#90bad8"/><rect x="496.00" y="295.97" width="15.65" height="5.98" fill="#90c5cb"/><rect x="511.60" y="295.97" width="15.65" height="5.98" fill="#90d8b3"/><rect x="527.20" y="295.97" width="15.65" height="5.98" fill="#ace490"/><rect x="542.80" y="295.97" width="15.65" height="5.98" fill="#d0c890"/><rect x="558.40" y="295.97" width="15.65" height="5.98" fill="#e2b090"/><rect x="574.00" y="295.97" width="15.65" height="5.98" fill="#f28c8c"/><rect x="589.60" y="295.97" width="15.65" height="5.98" fill="#f28c8c"/><rect x="605.20" y="295.97" width="15.65" height="5.98" fill="#f28c8c"/><rect x="418.00" y="301.90" width="14.50" height="5.93" fill="#d6d6d6"/><rect x="418.00" y="306.93" width="14.50" height="0.9" fill="#8d929c"/><rect x="418.00" y="301.90" width="14.50" height="0.6" fill="#eceef2"/><rect x="433.60" y="301.90" width="15.65" height="5.98" fill="#8686fc"/><rect x="449.20" y="301.90" width="15.65" height="5.98" fill="#888ef8"/><rect x="464.80" y="301.90" width="15.65" height="5.98" fill="#8fabe7"/><rect x="480.40" y="301.90" width="15.65" height="5.98" fill="#90bad8"/><rect x="496.00" y="301.90" width="15.65" height="5.98" fill="#90c8c7"/><rect x="511.60" y="301.90" width="15.65" height="5.98" fill="#90dab0"/><rect x="527.20" y="301.90" width="15.65" height="5.98" fill="#ace490"/><rect x="542.80" y="301.90" width="15.65" height="5.98" fill="#d0c890"/><rect x="558.40" y="301.90" width="15.65" height="5.98" fill="#e2b090"/><rect x="574.00" y="301.90" width="15.65" height="5.98" fill="#f28c8c"/><rect x="589.60" y="301.90" width="15.65" height="5.98" fill="#f28c8c"/><rect x="605.20" y="301.90" width="15.65" height="5.98" fill="#f28c8c"/><rect x="418.00" y="307.83" width="14.50" height="5.93" fill="#d6d6d6"/><rect x="418.00" y="312.86" width="14.50" height="0.9" fill="#8d929c"/><rect x="418.00" y="307.83" width="14.50" height="0.6" fill="#eceef2"/><rect x="433.60" y="307.83" width="15.65" height="5.98" fill="#8686fc"/><rect x="449.20" y="307.83" width="15.65" height="5.98" fill="#898ff7"/><rect x="464.80" y="307.83" width="15.65" height="5.98" fill="#8fabe7"/><rect x="480.40" y="307.83" width="15.65" height="5.98" fill="#90bad8"/><rect x="496.00" y="307.83" width="15.65" height="5.98" fill="#90c5cb"/><rect x="511.60" y="307.83" width="15.65" height="5.98" fill="#90d8b3"/><rect x="527.20" y="307.83" width="15.65" height="5.98" fill="#d0c890"/><rect x="542.80" y="307.83" width="15.65" height="5.98" fill="#d0c890"/><rect x="558.40" y="307.83" width="15.65" height="5.98" fill="#e2b090"/><rect x="574.00" y="307.83" width="15.65" height="5.98" fill="#f28c8c"/><rect x="589.60" y="307.83" width="15.65" height="5.98" fill="#f28c8c"/><rect x="605.20" y="307.83" width="15.65" height="5.98" fill="#f28c8c"/><path d="M433.60 242.60H620.80M433.60 248.53H620.80M433.60 254.46H620.80M433.60 260.39H620.80M433.60 266.32H620.80M433.60 272.25H620.80M433.60 278.18H620.80M433.60 284.11H620.80M433.60 290.04H620.80M433.60 295.97H620.80M433.60 301.90H620.80M433.60 307.83H620.80M433.60 313.76H620.80M433.60 242.60V313.76M449.20 242.60V313.76M464.80 242.60V313.76M480.40 242.60V313.76M496.00 242.60V313.76M511.60 242.60V313.76M527.20 242.60V313.76M542.80 242.60V313.76M558.40 242.60V313.76M574.00 242.60V313.76M589.60 242.60V313.76M605.20 242.60V313.76M620.80 242.60V313.76" stroke="#5a6a4a" stroke-opacity="0.38" stroke-width="0.6" fill="none"/><rect x="418.00" y="315.30" width="15.60" height="7.60" fill="#c6c6c6"/><rect x="433.90" y="315.30" width="15.00" height="7.60" fill="#dadada"/><rect x="433.90" y="322.00" width="15.00" height="0.9" fill="#a2a2a2"/><rect x="449.50" y="315.30" width="15.00" height="7.60" fill="#dadada"/><rect x="449.50" y="322.00" width="15.00" height="0.9" fill="#a2a2a2"/><rect x="465.10" y="315.30" width="15.00" height="7.60" fill="#dadada"/><rect x="465.10" y="322.00" width="15.00" height="0.9" fill="#a2a2a2"/><rect x="480.70" y="315.30" width="15.00" height="7.60" fill="#dadada"/><rect x="480.70" y="322.00" width="15.00" height="0.9" fill="#a2a2a2"/><rect x="496.30" y="315.30" width="15.00" height="7.60" fill="#dadada"/><rect x="496.30" y="322.00" width="15.00" height="0.9" fill="#a2a2a2"/><rect x="511.90" y="315.30" width="15.00" height="7.60" fill="#dadada"/><rect x="511.90" y="322.00" width="15.00" height="0.9" fill="#a2a2a2"/><rect x="527.50" y="315.30" width="15.00" height="7.60" fill="#dadada"/><rect x="527.50" y="322.00" width="15.00" height="0.9" fill="#a2a2a2"/><rect x="543.10" y="315.30" width="15.00" height="7.60" fill="#dadada"/><rect x="543.10" y="322.00" width="15.00" height="0.9" fill="#a2a2a2"/><rect x="558.70" y="315.30" width="15.00" height="7.60" fill="#dadada"/><rect x="558.70" y="322.00" width="15.00" height="0.9" fill="#a2a2a2"/><rect x="574.30" y="315.30" width="15.00" height="7.60" fill="#dadada"/><rect x="574.30" y="322.00" width="15.00" height="0.9" fill="#a2a2a2"/><rect x="589.90" y="315.30" width="15.00" height="7.60" fill="#dadada"/><rect x="589.90" y="322.00" width="15.00" height="0.9" fill="#a2a2a2"/><rect x="605.50" y="315.30" width="15.00" height="7.60" fill="#dadada"/><rect x="605.50" y="322.00" width="15.00" height="0.9" fill="#a2a2a2"/></svg>
<span class="t" style="top:242.41px;font-size:5.1px;line-height:6.12px;color:#2c2c34;left:325.25px;width:200px;text-align:center;">100</span>
<span class="t" style="top:242.50px;font-size:5.1px;line-height:6.12px;color:#33301f;left:341.40px;width:200px;text-align:center;">7.0</span>
<span class="t" style="top:242.50px;font-size:5.1px;line-height:6.12px;color:#33301f;left:357.00px;width:200px;text-align:center;">7.0</span>
<span class="t" style="top:242.50px;font-size:5.1px;line-height:6.12px;color:#33301f;left:372.60px;width:200px;text-align:center;">12.0</span>
<span class="t" style="top:242.50px;font-size:5.1px;line-height:6.12px;color:#33301f;left:388.20px;width:200px;text-align:center;">12.0</span>
<span class="t" style="top:242.50px;font-size:5.1px;line-height:6.12px;color:#33301f;left:403.80px;width:200px;text-align:center;">15.0</span>
<span class="t" style="top:242.50px;font-size:5.1px;line-height:6.12px;color:#33301f;left:419.40px;width:200px;text-align:center;">20.0</span>
<span class="t" style="top:242.50px;font-size:5.1px;line-height:6.12px;color:#33301f;left:435.00px;width:200px;text-align:center;">22.0</span>
<span class="t" style="top:242.50px;font-size:5.1px;line-height:6.12px;color:#33301f;left:450.60px;width:200px;text-align:center;">25.0</span>
<span class="t" style="top:242.50px;font-size:5.1px;line-height:6.12px;color:#33301f;left:466.20px;width:200px;text-align:center;">28.0</span>
<span class="t" style="top:242.50px;font-size:5.1px;line-height:6.12px;color:#33301f;left:481.80px;width:200px;text-align:center;">30.0</span>
<span class="t" style="top:242.50px;font-size:5.1px;line-height:6.12px;color:#33301f;left:497.40px;width:200px;text-align:center;">30.0</span>
<span class="t" style="top:242.50px;font-size:5.1px;line-height:6.12px;color:#33301f;left:513.00px;width:200px;text-align:center;">30.0</span>
<span class="t" style="top:248.34px;font-size:5.1px;line-height:6.12px;color:#2c2c34;left:325.25px;width:200px;text-align:center;">95</span>
<span class="t" style="top:248.44px;font-size:5.1px;line-height:6.12px;color:#33301f;left:341.40px;width:200px;text-align:center;">7.0</span>
<span class="t" style="top:248.44px;font-size:5.1px;line-height:6.12px;color:#33301f;left:357.00px;width:200px;text-align:center;">7.0</span>
<span class="t" style="top:248.44px;font-size:5.1px;line-height:6.12px;color:#33301f;left:372.60px;width:200px;text-align:center;">12.0</span>
<span class="t" style="top:248.44px;font-size:5.1px;line-height:6.12px;color:#33301f;left:388.20px;width:200px;text-align:center;">12.0</span>
<span class="t" style="top:248.44px;font-size:5.1px;line-height:6.12px;color:#33301f;left:403.80px;width:200px;text-align:center;">15.0</span>
<span class="t" style="top:248.44px;font-size:5.1px;line-height:6.12px;color:#33301f;left:419.40px;width:200px;text-align:center;">20.0</span>
<span class="t" style="top:248.44px;font-size:5.1px;line-height:6.12px;color:#33301f;left:435.00px;width:200px;text-align:center;">23.0</span>
<span class="t" style="top:248.44px;font-size:5.1px;line-height:6.12px;color:#33301f;left:450.60px;width:200px;text-align:center;">25.0</span>
<span class="t" style="top:248.44px;font-size:5.1px;line-height:6.12px;color:#33301f;left:466.20px;width:200px;text-align:center;">28.0</span>
<span class="t" style="top:248.44px;font-size:5.1px;line-height:6.12px;color:#33301f;left:481.80px;width:200px;text-align:center;">30.0</span>
<span class="t" style="top:248.44px;font-size:5.1px;line-height:6.12px;color:#33301f;left:497.40px;width:200px;text-align:center;">30.0</span>
<span class="t" style="top:248.44px;font-size:5.1px;line-height:6.12px;color:#33301f;left:513.00px;width:200px;text-align:center;">30.0</span>
<span class="t" style="top:254.26px;font-size:5.1px;line-height:6.12px;color:#2c2c34;left:325.25px;width:200px;text-align:center;">90</span>
<span class="t" style="top:254.36px;font-size:5.1px;line-height:6.12px;color:#33301f;left:341.40px;width:200px;text-align:center;">8.0</span>
<span class="t" style="top:254.36px;font-size:5.1px;line-height:6.12px;color:#33301f;left:357.00px;width:200px;text-align:center;">8.0</span>
<span class="t" style="top:254.36px;font-size:5.1px;line-height:6.12px;color:#33301f;left:372.60px;width:200px;text-align:center;">12.0</span>
<span class="t" style="top:254.36px;font-size:5.1px;line-height:6.12px;color:#33301f;left:388.20px;width:200px;text-align:center;">12.0</span>
<span class="t" style="top:254.36px;font-size:5.1px;line-height:6.12px;color:#33301f;left:403.80px;width:200px;text-align:center;">15.0</span>
<span class="t" style="top:254.36px;font-size:5.1px;line-height:6.12px;color:#33301f;left:419.40px;width:200px;text-align:center;">20.0</span>
<span class="t" style="top:254.36px;font-size:5.1px;line-height:6.12px;color:#33301f;left:435.00px;width:200px;text-align:center;">24.0</span>
<span class="t" style="top:254.36px;font-size:5.1px;line-height:6.12px;color:#33301f;left:450.60px;width:200px;text-align:center;">25.0</span>
<span class="t" style="top:254.36px;font-size:5.1px;line-height:6.12px;color:#33301f;left:466.20px;width:200px;text-align:center;">28.0</span>
<span class="t" style="top:254.36px;font-size:5.1px;line-height:6.12px;color:#33301f;left:481.80px;width:200px;text-align:center;">31.0</span>
<span class="t" style="top:254.36px;font-size:5.1px;line-height:6.12px;color:#33301f;left:497.40px;width:200px;text-align:center;">31.0</span>
<span class="t" style="top:254.36px;font-size:5.1px;line-height:6.12px;color:#33301f;left:513.00px;width:200px;text-align:center;">31.0</span>
<span class="t" style="top:260.19px;font-size:5.1px;line-height:6.12px;color:#2c2c34;left:325.25px;width:200px;text-align:center;">80</span>
<span class="t" style="top:260.29px;font-size:5.1px;line-height:6.12px;color:#33301f;left:341.40px;width:200px;text-align:center;">8.0</span>
<span class="t" style="top:260.29px;font-size:5.1px;line-height:6.12px;color:#33301f;left:357.00px;width:200px;text-align:center;">8.0</span>
<span class="t" style="top:260.29px;font-size:5.1px;line-height:6.12px;color:#33301f;left:372.60px;width:200px;text-align:center;">12.0</span>
<span class="t" style="top:260.29px;font-size:5.1px;line-height:6.12px;color:#33301f;left:388.20px;width:200px;text-align:center;">12.0</span>
<span class="t" style="top:260.29px;font-size:5.1px;line-height:6.12px;color:#33301f;left:403.80px;width:200px;text-align:center;">15.0</span>
<span class="t" style="top:260.29px;font-size:5.1px;line-height:6.12px;color:#33301f;left:419.40px;width:200px;text-align:center;">20.0</span>
<span class="t" style="top:260.29px;font-size:5.1px;line-height:6.12px;color:#33301f;left:435.00px;width:200px;text-align:center;">25.0</span>
<span class="t" style="top:260.29px;font-size:5.1px;line-height:6.12px;color:#33301f;left:450.60px;width:200px;text-align:center;">25.0</span>
<span class="t" style="top:260.29px;font-size:5.1px;line-height:6.12px;color:#33301f;left:466.20px;width:200px;text-align:center;">28.0</span>
<span class="t" style="top:260.29px;font-size:5.1px;line-height:6.12px;color:#33301f;left:481.80px;width:200px;text-align:center;">30.0</span>
<span class="t" style="top:260.29px;font-size:5.1px;line-height:6.12px;color:#33301f;left:497.40px;width:200px;text-align:center;">30.0</span>
<span class="t" style="top:260.29px;font-size:5.1px;line-height:6.12px;color:#33301f;left:513.00px;width:200px;text-align:center;">30.0</span>
<span class="t" style="top:266.12px;font-size:5.1px;line-height:6.12px;color:#2c2c34;left:325.25px;width:200px;text-align:center;">70</span>
<span class="t" style="top:266.22px;font-size:5.1px;line-height:6.12px;color:#33301f;left:341.40px;width:200px;text-align:center;">8.0</span>
<span class="t" style="top:266.22px;font-size:5.1px;line-height:6.12px;color:#33301f;left:357.00px;width:200px;text-align:center;">8.0</span>
<span class="t" style="top:266.22px;font-size:5.1px;line-height:6.12px;color:#33301f;left:372.60px;width:200px;text-align:center;">12.0</span>
<span class="t" style="top:266.22px;font-size:5.1px;line-height:6.12px;color:#33301f;left:388.20px;width:200px;text-align:center;">12.0</span>
<span class="t" style="top:266.22px;font-size:5.1px;line-height:6.12px;color:#33301f;left:403.80px;width:200px;text-align:center;">15.0</span>
<span class="t" style="top:266.22px;font-size:5.1px;line-height:6.12px;color:#33301f;left:419.40px;width:200px;text-align:center;">20.0</span>
<span class="t" style="top:266.22px;font-size:5.1px;line-height:6.12px;color:#33301f;left:435.00px;width:200px;text-align:center;">22.0</span>
<span class="t" style="top:266.22px;font-size:5.1px;line-height:6.12px;color:#33301f;left:450.60px;width:200px;text-align:center;">25.0</span>
<span class="t" style="top:266.22px;font-size:5.1px;line-height:6.12px;color:#33301f;left:466.20px;width:200px;text-align:center;">26.0</span>
<span class="t" style="top:266.22px;font-size:5.1px;line-height:6.12px;color:#33301f;left:481.80px;width:200px;text-align:center;">30.0</span>
<span class="t" style="top:266.22px;font-size:5.1px;line-height:6.12px;color:#33301f;left:497.40px;width:200px;text-align:center;">30.0</span>
<span class="t" style="top:266.22px;font-size:5.1px;line-height:6.12px;color:#33301f;left:513.00px;width:200px;text-align:center;">30.0</span>
<span class="t" style="top:272.05px;font-size:5.1px;line-height:6.12px;color:#2c2c34;left:325.25px;width:200px;text-align:center;">60</span>
<span class="t" style="top:272.15px;font-size:5.1px;line-height:6.12px;color:#33301f;left:341.40px;width:200px;text-align:center;">7.0</span>
<span class="t" style="top:272.15px;font-size:5.1px;line-height:6.12px;color:#33301f;left:357.00px;width:200px;text-align:center;">8.0</span>
<span class="t" style="top:272.15px;font-size:5.1px;line-height:6.12px;color:#33301f;left:372.60px;width:200px;text-align:center;">10.0</span>
<span class="t" style="top:272.15px;font-size:5.1px;line-height:6.12px;color:#33301f;left:388.20px;width:200px;text-align:center;">12.0</span>
<span class="t" style="top:272.15px;font-size:5.1px;line-height:6.12px;color:#33301f;left:403.80px;width:200px;text-align:center;">15.0</span>
<span class="t" style="top:272.15px;font-size:5.1px;line-height:6.12px;color:#33301f;left:419.40px;width:200px;text-align:center;">20.0</span>
<span class="t" style="top:272.15px;font-size:5.1px;line-height:6.12px;color:#33301f;left:435.00px;width:200px;text-align:center;">22.0</span>
<span class="t" style="top:272.15px;font-size:5.1px;line-height:6.12px;color:#33301f;left:450.60px;width:200px;text-align:center;">25.0</span>
<span class="t" style="top:272.15px;font-size:5.1px;line-height:6.12px;color:#33301f;left:466.20px;width:200px;text-align:center;">26.0</span>
<span class="t" style="top:272.15px;font-size:5.1px;line-height:6.12px;color:#33301f;left:481.80px;width:200px;text-align:center;">30.0</span>
<span class="t" style="top:272.15px;font-size:5.1px;line-height:6.12px;color:#33301f;left:497.40px;width:200px;text-align:center;">30.0</span>
<span class="t" style="top:272.15px;font-size:5.1px;line-height:6.12px;color:#33301f;left:513.00px;width:200px;text-align:center;">30.0</span>
<span class="t" style="top:277.98px;font-size:5.1px;line-height:6.12px;color:#2c2c34;left:325.25px;width:200px;text-align:center;">55</span>
<span class="t" style="top:278.08px;font-size:5.1px;line-height:6.12px;color:#33301f;left:341.40px;width:200px;text-align:center;">7.0</span>
<span class="t" style="top:278.08px;font-size:5.1px;line-height:6.12px;color:#33301f;left:357.00px;width:200px;text-align:center;">8.0</span>
<span class="t" style="top:278.08px;font-size:5.1px;line-height:6.12px;color:#33301f;left:372.60px;width:200px;text-align:center;">10.0</span>
<span class="t" style="top:278.08px;font-size:5.1px;line-height:6.12px;color:#33301f;left:388.20px;width:200px;text-align:center;">12.0</span>
<span class="t" style="top:278.08px;font-size:5.1px;line-height:6.12px;color:#33301f;left:403.80px;width:200px;text-align:center;">15.0</span>
<span class="t" style="top:278.08px;font-size:5.1px;line-height:6.12px;color:#33301f;left:419.40px;width:200px;text-align:center;">19.0</span>
<span class="t" style="top:278.08px;font-size:5.1px;line-height:6.12px;color:#33301f;left:435.00px;width:200px;text-align:center;">22.0</span>
<span class="t" style="top:278.08px;font-size:5.1px;line-height:6.12px;color:#33301f;left:450.60px;width:200px;text-align:center;">25.0</span>
<span class="t" style="top:278.08px;font-size:5.1px;line-height:6.12px;color:#33301f;left:466.20px;width:200px;text-align:center;">28.0</span>
<span class="t" style="top:278.08px;font-size:5.1px;line-height:6.12px;color:#33301f;left:481.80px;width:200px;text-align:center;">32.0</span>
<span class="t" style="top:278.08px;font-size:5.1px;line-height:6.12px;color:#33301f;left:497.40px;width:200px;text-align:center;">32.0</span>
<span class="t" style="top:278.08px;font-size:5.1px;line-height:6.12px;color:#33301f;left:513.00px;width:200px;text-align:center;">32.0</span>
<span class="t" style="top:283.91px;font-size:5.1px;line-height:6.12px;color:#2c2c34;left:325.25px;width:200px;text-align:center;">50</span>
<span class="t" style="top:284.01px;font-size:5.1px;line-height:6.12px;color:#33301f;left:341.40px;width:200px;text-align:center;">7.0</span>
<span class="t" style="top:284.01px;font-size:5.1px;line-height:6.12px;color:#33301f;left:357.00px;width:200px;text-align:center;">8.0</span>
<span class="t" style="top:284.01px;font-size:5.1px;line-height:6.12px;color:#33301f;left:372.60px;width:200px;text-align:center;">10.0</span>
<span class="t" style="top:284.01px;font-size:5.1px;line-height:6.12px;color:#33301f;left:388.20px;width:200px;text-align:center;">12.0</span>
<span class="t" style="top:284.01px;font-size:5.1px;line-height:6.12px;color:#33301f;left:403.80px;width:200px;text-align:center;">15.0</span>
<span class="t" style="top:284.01px;font-size:5.1px;line-height:6.12px;color:#33301f;left:419.40px;width:200px;text-align:center;">16.0</span>
<span class="t" style="top:284.01px;font-size:5.1px;line-height:6.12px;color:#33301f;left:435.00px;width:200px;text-align:center;">22.0</span>
<span class="t" style="top:284.01px;font-size:5.1px;line-height:6.12px;color:#33301f;left:450.60px;width:200px;text-align:center;">25.0</span>
<span class="t" style="top:284.01px;font-size:5.1px;line-height:6.12px;color:#33301f;left:466.20px;width:200px;text-align:center;">28.0</span>
<span class="t" style="top:284.01px;font-size:5.1px;line-height:6.12px;color:#33301f;left:481.80px;width:200px;text-align:center;">32.0</span>
<span class="t" style="top:284.01px;font-size:5.1px;line-height:6.12px;color:#33301f;left:497.40px;width:200px;text-align:center;">32.0</span>
<span class="t" style="top:284.01px;font-size:5.1px;line-height:6.12px;color:#33301f;left:513.00px;width:200px;text-align:center;">32.0</span>
<span class="t" style="top:289.84px;font-size:5.1px;line-height:6.12px;color:#2c2c34;left:325.25px;width:200px;text-align:center;">40</span>
<span class="t" style="top:289.94px;font-size:5.1px;line-height:6.12px;color:#33301f;left:341.40px;width:200px;text-align:center;">7.0</span>
<span class="t" style="top:289.94px;font-size:5.1px;line-height:6.12px;color:#33301f;left:357.00px;width:200px;text-align:center;">8.0</span>
<span class="t" style="top:289.94px;font-size:5.1px;line-height:6.12px;color:#33301f;left:372.60px;width:200px;text-align:center;">10.0</span>
<span class="t" style="top:289.94px;font-size:5.1px;line-height:6.12px;color:#33301f;left:388.20px;width:200px;text-align:center;">12.0</span>
<span class="t" style="top:289.94px;font-size:5.1px;line-height:6.12px;color:#33301f;left:403.80px;width:200px;text-align:center;">14.0</span>
<span class="t" style="top:289.94px;font-size:5.1px;line-height:6.12px;color:#33301f;left:419.40px;width:200px;text-align:center;">16.0</span>
<span class="t" style="top:289.94px;font-size:5.1px;line-height:6.12px;color:#33301f;left:435.00px;width:200px;text-align:center;">22.0</span>
<span class="t" style="top:289.94px;font-size:5.1px;line-height:6.12px;color:#33301f;left:450.60px;width:200px;text-align:center;">25.0</span>
<span class="t" style="top:289.94px;font-size:5.1px;line-height:6.12px;color:#33301f;left:466.20px;width:200px;text-align:center;">28.0</span>
<span class="t" style="top:289.94px;font-size:5.1px;line-height:6.12px;color:#33301f;left:481.80px;width:200px;text-align:center;">32.0</span>
<span class="t" style="top:289.94px;font-size:5.1px;line-height:6.12px;color:#33301f;left:497.40px;width:200px;text-align:center;">32.0</span>
<span class="t" style="top:289.94px;font-size:5.1px;line-height:6.12px;color:#33301f;left:513.00px;width:200px;text-align:center;">32.0</span>
<span class="t" style="top:295.77px;font-size:5.1px;line-height:6.12px;color:#2c2c34;left:325.25px;width:200px;text-align:center;">30</span>
<span class="t" style="top:295.87px;font-size:5.1px;line-height:6.12px;color:#33301f;left:341.40px;width:200px;text-align:center;">7.0</span>
<span class="t" style="top:295.87px;font-size:5.1px;line-height:6.12px;color:#33301f;left:357.00px;width:200px;text-align:center;">8.0</span>
<span class="t" style="top:295.87px;font-size:5.1px;line-height:6.12px;color:#33301f;left:372.60px;width:200px;text-align:center;">10.0</span>
<span class="t" style="top:295.87px;font-size:5.1px;line-height:6.12px;color:#33301f;left:388.20px;width:200px;text-align:center;">12.0</span>
<span class="t" style="top:295.87px;font-size:5.1px;line-height:6.12px;color:#33301f;left:403.80px;width:200px;text-align:center;">14.0</span>
<span class="t" style="top:295.87px;font-size:5.1px;line-height:6.12px;color:#33301f;left:419.40px;width:200px;text-align:center;">16.0</span>
<span class="t" style="top:295.87px;font-size:5.1px;line-height:6.12px;color:#33301f;left:435.00px;width:200px;text-align:center;">22.0</span>
<span class="t" style="top:295.87px;font-size:5.1px;line-height:6.12px;color:#33301f;left:450.60px;width:200px;text-align:center;">25.0</span>
<span class="t" style="top:295.87px;font-size:5.1px;line-height:6.12px;color:#33301f;left:466.20px;width:200px;text-align:center;">28.0</span>
<span class="t" style="top:295.87px;font-size:5.1px;line-height:6.12px;color:#33301f;left:481.80px;width:200px;text-align:center;">32.0</span>
<span class="t" style="top:295.87px;font-size:5.1px;line-height:6.12px;color:#33301f;left:497.40px;width:200px;text-align:center;">32.0</span>
<span class="t" style="top:295.87px;font-size:5.1px;line-height:6.12px;color:#33301f;left:513.00px;width:200px;text-align:center;">32.0</span>
<span class="t" style="top:301.70px;font-size:5.1px;line-height:6.12px;color:#2c2c34;left:325.25px;width:200px;text-align:center;">25</span>
<span class="t" style="top:301.80px;font-size:5.1px;line-height:6.12px;color:#33301f;left:341.40px;width:200px;text-align:center;">7.0</span>
<span class="t" style="top:301.80px;font-size:5.1px;line-height:6.12px;color:#33301f;left:357.00px;width:200px;text-align:center;">7.9</span>
<span class="t" style="top:301.80px;font-size:5.1px;line-height:6.12px;color:#33301f;left:372.60px;width:200px;text-align:center;">10.0</span>
<span class="t" style="top:301.80px;font-size:5.1px;line-height:6.12px;color:#33301f;left:388.20px;width:200px;text-align:center;">12.0</span>
<span class="t" style="top:301.80px;font-size:5.1px;line-height:6.12px;color:#33301f;left:403.80px;width:200px;text-align:center;">14.5</span>
<span class="t" style="top:301.80px;font-size:5.1px;line-height:6.12px;color:#33301f;left:419.40px;width:200px;text-align:center;">16.2</span>
<span class="t" style="top:301.80px;font-size:5.1px;line-height:6.12px;color:#33301f;left:435.00px;width:200px;text-align:center;">22.0</span>
<span class="t" style="top:301.80px;font-size:5.1px;line-height:6.12px;color:#33301f;left:450.60px;width:200px;text-align:center;">25.0</span>
<span class="t" style="top:301.80px;font-size:5.1px;line-height:6.12px;color:#33301f;left:466.20px;width:200px;text-align:center;">28.0</span>
<span class="t" style="top:301.80px;font-size:5.1px;line-height:6.12px;color:#33301f;left:481.80px;width:200px;text-align:center;">32.0</span>
<span class="t" style="top:301.80px;font-size:5.1px;line-height:6.12px;color:#33301f;left:497.40px;width:200px;text-align:center;">32.0</span>
<span class="t" style="top:301.80px;font-size:5.1px;line-height:6.12px;color:#33301f;left:513.00px;width:200px;text-align:center;">32.0</span>
<span class="t" style="top:307.63px;font-size:5.1px;line-height:6.12px;color:#2c2c34;left:325.25px;width:200px;text-align:center;">20</span>
<span class="t" style="top:307.73px;font-size:5.1px;line-height:6.12px;color:#33301f;left:341.40px;width:200px;text-align:center;">7.0</span>
<span class="t" style="top:307.73px;font-size:5.1px;line-height:6.12px;color:#33301f;left:357.00px;width:200px;text-align:center;">8.0</span>
<span class="t" style="top:307.73px;font-size:5.1px;line-height:6.12px;color:#33301f;left:372.60px;width:200px;text-align:center;">10.0</span>
<span class="t" style="top:307.73px;font-size:5.1px;line-height:6.12px;color:#33301f;left:388.20px;width:200px;text-align:center;">12.0</span>
<span class="t" style="top:307.73px;font-size:5.1px;line-height:6.12px;color:#33301f;left:403.80px;width:200px;text-align:center;">14.0</span>
<span class="t" style="top:307.73px;font-size:5.1px;line-height:6.12px;color:#33301f;left:419.40px;width:200px;text-align:center;">16.0</span>
<span class="t" style="top:307.73px;font-size:5.1px;line-height:6.12px;color:#33301f;left:435.00px;width:200px;text-align:center;">25.0</span>
<span class="t" style="top:307.73px;font-size:5.1px;line-height:6.12px;color:#33301f;left:450.60px;width:200px;text-align:center;">25.0</span>
<span class="t" style="top:307.73px;font-size:5.1px;line-height:6.12px;color:#33301f;left:466.20px;width:200px;text-align:center;">28.0</span>
<span class="t" style="top:307.73px;font-size:5.1px;line-height:6.12px;color:#33301f;left:481.80px;width:200px;text-align:center;">32.0</span>
<span class="t" style="top:307.73px;font-size:5.1px;line-height:6.12px;color:#33301f;left:497.40px;width:200px;text-align:center;">32.0</span>
<span class="t" style="top:307.73px;font-size:5.1px;line-height:6.12px;color:#33301f;left:513.00px;width:200px;text-align:center;">32.0</span>
<span class="t" style="top:315.84px;font-size:5.1px;line-height:6.12px;color:#2a2a2a;left:341.40px;width:200px;text-align:center;">800</span>
<span class="t" style="top:315.84px;font-size:5.1px;line-height:6.12px;color:#2a2a2a;left:357.00px;width:200px;text-align:center;">1100</span>
<span class="t" style="top:315.84px;font-size:5.1px;line-height:6.12px;color:#2a2a2a;left:372.60px;width:200px;text-align:center;">1200</span>
<span class="t" style="top:315.84px;font-size:5.1px;line-height:6.12px;color:#2a2a2a;left:388.20px;width:200px;text-align:center;">1500</span>
<span class="t" style="top:315.84px;font-size:5.1px;line-height:6.12px;color:#2a2a2a;left:403.80px;width:200px;text-align:center;">2000</span>
<span class="t" style="top:315.84px;font-size:5.1px;line-height:6.12px;color:#2a2a2a;left:419.40px;width:200px;text-align:center;">2500</span>
<span class="t" style="top:315.84px;font-size:5.1px;line-height:6.12px;color:#2a2a2a;left:435.00px;width:200px;text-align:center;">2700</span>
<span class="t" style="top:315.84px;font-size:5.1px;line-height:6.12px;color:#2a2a2a;left:450.60px;width:200px;text-align:center;">3500</span>
<span class="t" style="top:315.84px;font-size:5.1px;line-height:6.12px;color:#2a2a2a;left:466.20px;width:200px;text-align:center;">4000</span>
<span class="t" style="top:315.84px;font-size:5.1px;line-height:6.12px;color:#2a2a2a;left:481.80px;width:200px;text-align:center;">4500</span>
<span class="t" style="top:315.84px;font-size:5.1px;line-height:6.12px;color:#2a2a2a;left:497.40px;width:200px;text-align:center;">5000</span>
<span class="t" style="top:315.84px;font-size:5.1px;line-height:6.12px;color:#2a2a2a;left:513.00px;width:200px;text-align:center;">5500</span>
<svg class="abs" style="left:516.6px;top:243.6px" width="5" height="3.6" viewBox="0 0 5 3.6"><path d="M0 1.8L2.6 0V3.6Z M2.4 1H5V2.6H2.4Z" fill="#101060"/></svg>
<div style="left:448.40px;top:330.80px;width:22.30px;height:10.20px;background:#62ee62;"></div>
<span class="t" style="top:332.86px;font-size:5.4px;line-height:6.48px;color:#0c380c;left:359.50px;width:200px;text-align:center;">Crank:N</span>
<div style="left:471.35px;top:330.80px;width:22.30px;height:10.20px;background:#62ee62;"></div>
<span class="t" style="top:332.86px;font-size:5.4px;line-height:6.48px;color:#0c380c;left:382.45px;width:200px;text-align:center;">ASE:N</span>
<div style="left:494.30px;top:330.80px;width:22.30px;height:10.20px;background:#62ee62;"></div>
<span class="t" style="top:332.86px;font-size:5.4px;line-height:6.48px;color:#0c380c;left:405.40px;width:200px;text-align:center;">Warm:N</span>
<div style="left:517.25px;top:330.80px;width:22.30px;height:10.20px;background:#f24c4c;"></div>
<span class="t" style="top:332.86px;font-size:5.4px;line-height:6.48px;color:#501010;left:428.35px;width:200px;text-align:center;">Run:Y</span>
<div style="left:540.20px;top:330.80px;width:22.30px;height:10.20px;background:#62ee62;"></div>
<span class="t" style="top:332.86px;font-size:5.4px;line-height:6.48px;color:#0c380c;left:451.30px;width:200px;text-align:center;">Accel:N</span>
<div style="left:563.15px;top:330.80px;width:22.30px;height:10.20px;background:#62ee62;"></div>
<span class="t" style="top:332.86px;font-size:5.4px;line-height:6.48px;color:#0c380c;left:474.25px;width:200px;text-align:center;">Decel:N</span>
<div style="left:586.10px;top:330.80px;width:22.30px;height:10.20px;background:#62ee62;"></div>
<span class="t" style="top:332.86px;font-size:5.4px;line-height:6.48px;color:#0c380c;left:497.20px;width:200px;text-align:center;">bit 7:N</span>
<div style="left:609.05px;top:330.80px;width:22.30px;height:10.20px;background:#62ee62;"></div>
<span class="t" style="top:332.86px;font-size:5.4px;line-height:6.48px;color:#0c380c;left:520.15px;width:200px;text-align:center;">bit 8:N</span>
<div style="left:3.75px;top:344.30px;width:68.75px;height:8.70px;background:#eeebdd;border:1px solid #c2bead;border-right-color:#f8f7ee;border-bottom-color:#fbfaf4;box-sizing:border-box;"></div>
<svg class="abs" style="left:4.75px;top:345.20px" width="13.4" height="7.4" viewBox="0 0 13.4 7.4"><path d="M0.4 7.1A6.3 6.5 0 0 1 4.4 1.05L6.7 7.1Z" fill="#38d028"/><path d="M4.4 1.05A6.3 6.5 0 0 1 10.3 1.75L6.7 7.1Z" fill="#f0f020"/><path d="M10.3 1.75A6.3 6.5 0 0 1 13 7.1L6.7 7.1Z" fill="#e02818"/><path d="M0.4 7.1A6.3 6.5 0 0 1 13 7.1Z" fill="none" stroke="#3a2a10" stroke-width="0.8"/><path d="M6.7 7.1L1.44 5.18" stroke="#101010" stroke-width="0.7"/></svg>
<span class="t" style="top:345.36px;font-size:5.4px;line-height:6.48px;color:#111;left:20.95px;max-width:52.0px;overflow:hidden;">Time:4106.035</span>
<div style="left:3.75px;top:353.80px;width:68.75px;height:8.70px;background:#eeebdd;border:1px solid #c2bead;border-right-color:#f8f7ee;border-bottom-color:#fbfaf4;box-sizing:border-box;"></div>
<svg class="abs" style="left:4.75px;top:354.70px" width="13.4" height="7.4" viewBox="0 0 13.4 7.4"><path d="M0.4 7.1A6.3 6.5 0 0 1 4.4 1.05L6.7 7.1Z" fill="#38d028"/><path d="M4.4 1.05A6.3 6.5 0 0 1 10.3 1.75L6.7 7.1Z" fill="#f0f020"/><path d="M10.3 1.75A6.3 6.5 0 0 1 13 7.1L6.7 7.1Z" fill="#e02818"/><path d="M0.4 7.1A6.3 6.5 0 0 1 13 7.1Z" fill="none" stroke="#3a2a10" stroke-width="0.8"/><path d="M6.7 7.1L1.62 4.73" stroke="#101010" stroke-width="0.7"/></svg>
<span class="t" style="top:354.86px;font-size:5.4px;line-height:6.48px;color:#111;left:24.14px;max-width:48.8px;overflow:hidden;">Gego:100.0</span>
<div style="left:3.75px;top:363.30px;width:68.75px;height:8.70px;background:#eeebdd;border:1px solid #c2bead;border-right-color:#f8f7ee;border-bottom-color:#fbfaf4;box-sizing:border-box;"></div>
<svg class="abs" style="left:4.75px;top:364.20px" width="13.4" height="7.4" viewBox="0 0 13.4 7.4"><path d="M0.4 7.1A6.3 6.5 0 0 1 4.4 1.05L6.7 7.1Z" fill="#38d028"/><path d="M4.4 1.05A6.3 6.5 0 0 1 10.3 1.75L6.7 7.1Z" fill="#f0f020"/><path d="M10.3 1.75A6.3 6.5 0 0 1 13 7.1L6.7 7.1Z" fill="#e02818"/><path d="M0.4 7.1A6.3 6.5 0 0 1 13 7.1Z" fill="none" stroke="#3a2a10" stroke-width="0.8"/><path d="M6.7 7.1L10.30 2.81" stroke="#101010" stroke-width="0.7"/></svg>
<span class="t" style="top:364.36px;font-size:5.4px;line-height:6.48px;color:#111;left:25.79px;max-width:47.2px;overflow:hidden;">Gve2:80.0</span>
<div style="left:3.75px;top:372.80px;width:68.75px;height:8.70px;background:#eeebdd;border:1px solid #c2bead;border-right-color:#f8f7ee;border-bottom-color:#fbfaf4;box-sizing:border-box;"></div>
<svg class="abs" style="left:4.75px;top:373.70px" width="13.4" height="7.4" viewBox="0 0 13.4 7.4"><path d="M0.4 7.1A6.3 6.5 0 0 1 4.4 1.05L6.7 7.1Z" fill="#38d028"/><path d="M4.4 1.05A6.3 6.5 0 0 1 10.3 1.75L6.7 7.1Z" fill="#f0f020"/><path d="M10.3 1.75A6.3 6.5 0 0 1 13 7.1L6.7 7.1Z" fill="#e02818"/><path d="M0.4 7.1A6.3 6.5 0 0 1 13 7.1Z" fill="none" stroke="#3a2a10" stroke-width="0.8"/><path d="M6.7 7.1L1.44 5.18" stroke="#101010" stroke-width="0.7"/></svg>
<span class="t" style="top:373.86px;font-size:5.4px;line-height:6.48px;color:#111;left:24.14px;max-width:48.8px;overflow:hidden;">IACstep:5.0</span>
<div style="left:3.75px;top:382.30px;width:68.75px;height:8.70px;background:#eeebdd;border:1px solid #c2bead;border-right-color:#f8f7ee;border-bottom-color:#fbfaf4;box-sizing:border-box;"></div>
<svg class="abs" style="left:4.75px;top:383.20px" width="13.4" height="7.4" viewBox="0 0 13.4 7.4"><path d="M0.4 7.1A6.3 6.5 0 0 1 4.4 1.05L6.7 7.1Z" fill="#38d028"/><path d="M4.4 1.05A6.3 6.5 0 0 1 10.3 1.75L6.7 7.1Z" fill="#f0f020"/><path d="M10.3 1.75A6.3 6.5 0 0 1 13 7.1L6.7 7.1Z" fill="#e02818"/><path d="M0.4 7.1A6.3 6.5 0 0 1 13 7.1Z" fill="none" stroke="#3a2a10" stroke-width="0.8"/><path d="M6.7 7.1L1.44 5.18" stroke="#101010" stroke-width="0.7"/></svg>
<span class="t" style="top:383.36px;font-size:5.4px;line-height:6.48px;color:#111;left:22.64px;max-width:50.3px;overflow:hidden;">Ign load:53.1</span>
<div style="left:3.75px;top:391.80px;width:68.75px;height:8.70px;background:#eeebdd;border:1px solid #c2bead;border-right-color:#f8f7ee;border-bottom-color:#fbfaf4;box-sizing:border-box;"></div>
<svg class="abs" style="left:4.75px;top:392.70px" width="13.4" height="7.4" viewBox="0 0 13.4 7.4"><path d="M0.4 7.1A6.3 6.5 0 0 1 4.4 1.05L6.7 7.1Z" fill="#38d028"/><path d="M4.4 1.05A6.3 6.5 0 0 1 10.3 1.75L6.7 7.1Z" fill="#f0f020"/><path d="M10.3 1.75A6.3 6.5 0 0 1 13 7.1L6.7 7.1Z" fill="#e02818"/><path d="M0.4 7.1A6.3 6.5 0 0 1 13 7.1Z" fill="none" stroke="#3a2a10" stroke-width="0.8"/><path d="M6.7 7.1L1.44 5.18" stroke="#101010" stroke-width="0.7"/></svg>
<span class="t" style="top:392.86px;font-size:5.4px;line-height:6.48px;color:#111;left:25.04px;max-width:47.9px;overflow:hidden;">status2:0.0</span>
<svg class="abs" style="left:4.75px;top:402.20px" width="13.4" height="7.4" viewBox="0 0 13.4 7.4"><path d="M0.4 7.1A6.3 6.5 0 0 1 4.4 1.05L6.7 7.1Z" fill="#38d028"/><path d="M4.4 1.05A6.3 6.5 0 0 1 10.3 1.75L6.7 7.1Z" fill="#f0f020"/><path d="M10.3 1.75A6.3 6.5 0 0 1 13 7.1L6.7 7.1Z" fill="#e02818"/><path d="M0.4 7.1A6.3 6.5 0 0 1 13 7.1Z" fill="none" stroke="#3a2a10" stroke-width="0.8"/><path d="M6.7 7.1L1.44 5.18" stroke="#101010" stroke-width="0.7"/></svg>
<span class="t" style="top:402.36px;font-size:5.4px;line-height:6.48px;color:#111;left:20.95px;max-width:52.0px;overflow:hidden;">Lost sync reason:0.0</span>
<div style="left:74.25px;top:344.30px;width:68.75px;height:8.70px;background:#eeebdd;border:1px solid #c2bead;border-right-color:#f8f7ee;border-bottom-color:#fbfaf4;box-sizing:border-box;"></div>
<svg class="abs" style="left:75.25px;top:345.20px" width="13.4" height="7.4" viewBox="0 0 13.4 7.4"><path d="M0.4 7.1A6.3 6.5 0 0 1 4.4 1.05L6.7 7.1Z" fill="#38d028"/><path d="M4.4 1.05A6.3 6.5 0 0 1 10.3 1.75L6.7 7.1Z" fill="#f0f020"/><path d="M10.3 1.75A6.3 6.5 0 0 1 13 7.1L6.7 7.1Z" fill="#e02818"/><path d="M0.4 7.1A6.3 6.5 0 0 1 13 7.1Z" fill="none" stroke="#3a2a10" stroke-width="0.8"/><path d="M6.7 7.1L1.44 5.18" stroke="#101010" stroke-width="0.7"/></svg>
<span class="t" style="top:345.36px;font-size:5.4px;line-height:6.48px;color:#111;left:95.09px;max-width:48.4px;overflow:hidden;">SecL:172.0</span>
<div style="left:74.25px;top:353.80px;width:68.75px;height:8.70px;background:#eeebdd;border:1px solid #c2bead;border-right-color:#f8f7ee;border-bottom-color:#fbfaf4;box-sizing:border-box;"></div>
<svg class="abs" style="left:75.25px;top:354.70px" width="13.4" height="7.4" viewBox="0 0 13.4 7.4"><path d="M0.4 7.1A6.3 6.5 0 0 1 4.4 1.05L6.7 7.1Z" fill="#38d028"/><path d="M4.4 1.05A6.3 6.5 0 0 1 10.3 1.75L6.7 7.1Z" fill="#f0f020"/><path d="M10.3 1.75A6.3 6.5 0 0 1 13 7.1L6.7 7.1Z" fill="#e02818"/><path d="M0.4 7.1A6.3 6.5 0 0 1 13 7.1Z" fill="none" stroke="#3a2a10" stroke-width="0.8"/><path d="M6.7 7.1L5.73 1.59" stroke="#101010" stroke-width="0.7"/></svg>
<span class="t" style="top:354.86px;font-size:5.4px;line-height:6.48px;color:#111;left:97.64px;max-width:45.8px;overflow:hidden;">Gair:98.0</span>
<div style="left:74.25px;top:363.30px;width:68.75px;height:8.70px;background:#eeebdd;border:1px solid #c2bead;border-right-color:#f8f7ee;border-bottom-color:#fbfaf4;box-sizing:border-box;"></div>
<svg class="abs" style="left:75.25px;top:364.20px" width="13.4" height="7.4" viewBox="0 0 13.4 7.4"><path d="M0.4 7.1A6.3 6.5 0 0 1 4.4 1.05L6.7 7.1Z" fill="#38d028"/><path d="M4.4 1.05A6.3 6.5 0 0 1 10.3 1.75L6.7 7.1Z" fill="#f0f020"/><path d="M10.3 1.75A6.3 6.5 0 0 1 13 7.1L6.7 7.1Z" fill="#e02818"/><path d="M0.4 7.1A6.3 6.5 0 0 1 13 7.1Z" fill="none" stroke="#3a2a10" stroke-width="0.8"/><path d="M6.7 7.1L5.73 1.59" stroke="#101010" stroke-width="0.7"/></svg>
<span class="t" style="top:364.36px;font-size:5.4px;line-height:6.48px;color:#111;left:96.89px;max-width:46.6px;overflow:hidden;">PW2:8.92</span>
<div style="left:74.25px;top:372.80px;width:68.75px;height:8.70px;background:#eeebdd;border:1px solid #c2bead;border-right-color:#f8f7ee;border-bottom-color:#fbfaf4;box-sizing:border-box;"></div>
<svg class="abs" style="left:75.25px;top:373.70px" width="13.4" height="7.4" viewBox="0 0 13.4 7.4"><path d="M0.4 7.1A6.3 6.5 0 0 1 4.4 1.05L6.7 7.1Z" fill="#38d028"/><path d="M4.4 1.05A6.3 6.5 0 0 1 10.3 1.75L6.7 7.1Z" fill="#f0f020"/><path d="M10.3 1.75A6.3 6.5 0 0 1 13 7.1L6.7 7.1Z" fill="#e02818"/><path d="M0.4 7.1A6.3 6.5 0 0 1 13 7.1Z" fill="none" stroke="#3a2a10" stroke-width="0.8"/><path d="M6.7 7.1L5.25 1.69" stroke="#101010" stroke-width="0.7"/></svg>
<span class="t" style="top:373.86px;font-size:5.4px;line-height:6.48px;color:#111;left:95.49px;max-width:48.0px;overflow:hidden;">Batt V:13.3</span>
<div style="left:74.25px;top:382.30px;width:68.75px;height:8.70px;background:#eeebdd;border:1px solid #c2bead;border-right-color:#f8f7ee;border-bottom-color:#fbfaf4;box-sizing:border-box;"></div>
<svg class="abs" style="left:75.25px;top:383.20px" width="13.4" height="7.4" viewBox="0 0 13.4 7.4"><path d="M0.4 7.1A6.3 6.5 0 0 1 4.4 1.05L6.7 7.1Z" fill="#38d028"/><path d="M4.4 1.05A6.3 6.5 0 0 1 10.3 1.75L6.7 7.1Z" fill="#f0f020"/><path d="M10.3 1.75A6.3 6.5 0 0 1 13 7.1L6.7 7.1Z" fill="#e02818"/><path d="M0.4 7.1A6.3 6.5 0 0 1 13 7.1Z" fill="none" stroke="#3a2a10" stroke-width="0.8"/><path d="M6.7 7.1L1.44 5.18" stroke="#101010" stroke-width="0.7"/></svg>
<span class="t" style="top:383.36px;font-size:5.4px;line-height:6.48px;color:#111;left:91.45px;max-width:52.0px;overflow:hidden;">Secondary Ign Load:0.0</span>
<div style="left:74.25px;top:391.80px;width:68.75px;height:8.70px;background:#eeebdd;border:1px solid #c2bead;border-right-color:#f8f7ee;border-bottom-color:#fbfaf4;box-sizing:border-box;"></div>
<svg class="abs" style="left:75.25px;top:392.70px" width="13.4" height="7.4" viewBox="0 0 13.4 7.4"><path d="M0.4 7.1A6.3 6.5 0 0 1 4.4 1.05L6.7 7.1Z" fill="#38d028"/><path d="M4.4 1.05A6.3 6.5 0 0 1 10.3 1.75L6.7 7.1Z" fill="#f0f020"/><path d="M10.3 1.75A6.3 6.5 0 0 1 13 7.1L6.7 7.1Z" fill="#e02818"/><path d="M0.4 7.1A6.3 6.5 0 0 1 13 7.1Z" fill="none" stroke="#3a2a10" stroke-width="0.8"/><path d="M6.7 7.1L1.44 5.18" stroke="#101010" stroke-width="0.7"/></svg>
<span class="t" style="top:392.86px;font-size:5.4px;line-height:6.48px;color:#111;left:95.54px;max-width:47.9px;overflow:hidden;">status3:0.0</span>
<svg class="abs" style="left:75.25px;top:402.20px" width="13.4" height="7.4" viewBox="0 0 13.4 7.4"><path d="M0.4 7.1A6.3 6.5 0 0 1 4.4 1.05L6.7 7.1Z" fill="#38d028"/><path d="M4.4 1.05A6.3 6.5 0 0 1 10.3 1.75L6.7 7.1Z" fill="#f0f020"/><path d="M10.3 1.75A6.3 6.5 0 0 1 13 7.1L6.7 7.1Z" fill="#e02818"/><path d="M0.4 7.1A6.3 6.5 0 0 1 13 7.1Z" fill="none" stroke="#3a2a10" stroke-width="0.8"/><path d="M6.7 7.1L1.44 5.18" stroke="#101010" stroke-width="0.7"/></svg>
<span class="t" style="top:402.36px;font-size:5.4px;line-height:6.48px;color:#111;left:91.49px;max-width:52.0px;overflow:hidden;">Lambda:1.285</span>
<div style="left:144.75px;top:344.30px;width:68.75px;height:8.70px;background:#eeebdd;border:1px solid #c2bead;border-right-color:#f8f7ee;border-bottom-color:#fbfaf4;box-sizing:border-box;"></div>
<svg class="abs" style="left:145.75px;top:345.20px" width="13.4" height="7.4" viewBox="0 0 13.4 7.4"><path d="M0.4 7.1A6.3 6.5 0 0 1 4.4 1.05L6.7 7.1Z" fill="#38d028"/><path d="M4.4 1.05A6.3 6.5 0 0 1 10.3 1.75L6.7 7.1Z" fill="#f0f020"/><path d="M10.3 1.75A6.3 6.5 0 0 1 13 7.1L6.7 7.1Z" fill="#e02818"/><path d="M0.4 7.1A6.3 6.5 0 0 1 13 7.1Z" fill="none" stroke="#3a2a10" stroke-width="0.8"/><path d="M6.7 7.1L5.73 1.59" stroke="#101010" stroke-width="0.7"/></svg>
<span class="t" style="top:345.36px;font-size:5.4px;line-height:6.48px;color:#111;left:164.24px;max-width:49.7px;overflow:hidden;">RPM:2504.0</span>
<div style="left:144.75px;top:353.80px;width:68.75px;height:8.70px;background:#eeebdd;border:1px solid #c2bead;border-right-color:#f8f7ee;border-bottom-color:#fbfaf4;box-sizing:border-box;"></div>
<svg class="abs" style="left:145.75px;top:354.70px" width="13.4" height="7.4" viewBox="0 0 13.4 7.4"><path d="M0.4 7.1A6.3 6.5 0 0 1 4.4 1.05L6.7 7.1Z" fill="#38d028"/><path d="M4.4 1.05A6.3 6.5 0 0 1 10.3 1.75L6.7 7.1Z" fill="#f0f020"/><path d="M10.3 1.75A6.3 6.5 0 0 1 13 7.1L6.7 7.1Z" fill="#e02818"/><path d="M0.4 7.1A6.3 6.5 0 0 1 13 7.1Z" fill="none" stroke="#3a2a10" stroke-width="0.8"/><path d="M6.7 7.1L1.44 5.18" stroke="#101010" stroke-width="0.7"/></svg>
<span class="t" style="top:354.86px;font-size:5.4px;line-height:6.48px;color:#111;left:163.04px;max-width:50.9px;overflow:hidden;">Gwarm:100.0</span>
<div style="left:144.75px;top:363.30px;width:68.75px;height:8.70px;background:#eeebdd;border:1px solid #c2bead;border-right-color:#f8f7ee;border-bottom-color:#fbfaf4;box-sizing:border-box;"></div>
<svg class="abs" style="left:145.75px;top:364.20px" width="13.4" height="7.4" viewBox="0 0 13.4 7.4"><path d="M0.4 7.1A6.3 6.5 0 0 1 4.4 1.05L6.7 7.1Z" fill="#38d028"/><path d="M4.4 1.05A6.3 6.5 0 0 1 10.3 1.75L6.7 7.1Z" fill="#f0f020"/><path d="M10.3 1.75A6.3 6.5 0 0 1 13 7.1L6.7 7.1Z" fill="#e02818"/><path d="M0.4 7.1A6.3 6.5 0 0 1 13 7.1Z" fill="none" stroke="#3a2a10" stroke-width="0.8"/><path d="M6.7 7.1L3.90 2.25" stroke="#101010" stroke-width="0.7"/></svg>
<span class="t" style="top:364.36px;font-size:5.4px;line-height:6.48px;color:#111;left:161.95px;max-width:52.0px;overflow:hidden;">DutyCycle2:18.6</span>
<div style="left:144.75px;top:372.80px;width:68.75px;height:8.70px;background:#eeebdd;border:1px solid #c2bead;border-right-color:#f8f7ee;border-bottom-color:#fbfaf4;box-sizing:border-box;"></div>
<svg class="abs" style="left:145.75px;top:373.70px" width="13.4" height="7.4" viewBox="0 0 13.4 7.4"><path d="M0.4 7.1A6.3 6.5 0 0 1 4.4 1.05L6.7 7.1Z" fill="#38d028"/><path d="M4.4 1.05A6.3 6.5 0 0 1 10.3 1.75L6.7 7.1Z" fill="#f0f020"/><path d="M10.3 1.75A6.3 6.5 0 0 1 13 7.1L6.7 7.1Z" fill="#e02818"/><path d="M0.4 7.1A6.3 6.5 0 0 1 13 7.1Z" fill="none" stroke="#3a2a10" stroke-width="0.8"/><path d="M6.7 7.1L1.44 5.18" stroke="#101010" stroke-width="0.7"/></svg>
<span class="t" style="top:373.86px;font-size:5.4px;line-height:6.48px;color:#111;left:167.54px;max-width:46.4px;overflow:hidden;">deltaT:0.0</span>
<div style="left:144.75px;top:382.30px;width:68.75px;height:8.70px;background:#eeebdd;border:1px solid #c2bead;border-right-color:#f8f7ee;border-bottom-color:#fbfaf4;box-sizing:border-box;"></div>
<svg class="abs" style="left:145.75px;top:383.20px" width="13.4" height="7.4" viewBox="0 0 13.4 7.4"><path d="M0.4 7.1A6.3 6.5 0 0 1 4.4 1.05L6.7 7.1Z" fill="#38d028"/><path d="M4.4 1.05A6.3 6.5 0 0 1 10.3 1.75L6.7 7.1Z" fill="#f0f020"/><path d="M10.3 1.75A6.3 6.5 0 0 1 13 7.1L6.7 7.1Z" fill="#e02818"/><path d="M0.4 7.1A6.3 6.5 0 0 1 13 7.1Z" fill="none" stroke="#3a2a10" stroke-width="0.8"/><path d="M6.7 7.1L1.44 5.18" stroke="#101010" stroke-width="0.7"/></svg>
<span class="t" style="top:383.36px;font-size:5.4px;line-height:6.48px;color:#111;left:161.95px;max-width:52.0px;overflow:hidden;">EGT 6 temp:874.0</span>
<div style="left:144.75px;top:391.80px;width:68.75px;height:8.70px;background:#eeebdd;border:1px solid #c2bead;border-right-color:#f8f7ee;border-bottom-color:#fbfaf4;box-sizing:border-box;"></div>
<svg class="abs" style="left:145.75px;top:392.70px" width="13.4" height="7.4" viewBox="0 0 13.4 7.4"><path d="M0.4 7.1A6.3 6.5 0 0 1 4.4 1.05L6.7 7.1Z" fill="#38d028"/><path d="M4.4 1.05A6.3 6.5 0 0 1 10.3 1.75L6.7 7.1Z" fill="#f0f020"/><path d="M10.3 1.75A6.3 6.5 0 0 1 13 7.1L6.7 7.1Z" fill="#e02818"/><path d="M0.4 7.1A6.3 6.5 0 0 1 13 7.1Z" fill="none" stroke="#3a2a10" stroke-width="0.8"/><path d="M6.7 7.1L1.44 5.18" stroke="#101010" stroke-width="0.7"/></svg>
<span class="t" style="top:392.86px;font-size:5.4px;line-height:6.48px;color:#111;left:166.04px;max-width:47.9px;overflow:hidden;">status4:0.0</span>
<div style="left:215.25px;top:344.30px;width:68.75px;height:8.70px;background:#eeebdd;border:1px solid #c2bead;border-right-color:#f8f7ee;border-bottom-color:#fbfaf4;box-sizing:border-box;"></div>
<svg class="abs" style="left:216.25px;top:345.20px" width="13.4" height="7.4" viewBox="0 0 13.4 7.4"><path d="M0.4 7.1A6.3 6.5 0 0 1 4.4 1.05L6.7 7.1Z" fill="#38d028"/><path d="M4.4 1.05A6.3 6.5 0 0 1 10.3 1.75L6.7 7.1Z" fill="#f0f020"/><path d="M10.3 1.75A6.3 6.5 0 0 1 13 7.1L6.7 7.1Z" fill="#e02818"/><path d="M0.4 7.1A6.3 6.5 0 0 1 13 7.1Z" fill="none" stroke="#3a2a10" stroke-width="0.8"/><path d="M6.7 7.1L1.44 5.18" stroke="#101010" stroke-width="0.7"/></svg>
<span class="t" style="top:345.36px;font-size:5.4px;line-height:6.48px;color:#111;left:236.39px;max-width:48.1px;overflow:hidden;">MAP:102.3</span>
<div style="left:215.25px;top:353.80px;width:68.75px;height:8.70px;background:#eeebdd;border:1px solid #c2bead;border-right-color:#f8f7ee;border-bottom-color:#fbfaf4;box-sizing:border-box;"></div>
<svg class="abs" style="left:216.25px;top:354.70px" width="13.4" height="7.4" viewBox="0 0 13.4 7.4"><path d="M0.4 7.1A6.3 6.5 0 0 1 4.4 1.05L6.7 7.1Z" fill="#38d028"/><path d="M4.4 1.05A6.3 6.5 0 0 1 10.3 1.75L6.7 7.1Z" fill="#f0f020"/><path d="M10.3 1.75A6.3 6.5 0 0 1 13 7.1L6.7 7.1Z" fill="#e02818"/><path d="M0.4 7.1A6.3 6.5 0 0 1 13 7.1Z" fill="none" stroke="#3a2a10" stroke-width="0.8"/><path d="M6.7 7.1L6.21 1.52" stroke="#101010" stroke-width="0.7"/></svg>
<span class="t" style="top:354.86px;font-size:5.4px;line-height:6.48px;color:#111;left:236.24px;max-width:48.2px;overflow:hidden;">Gbaro:99.0</span>
<div style="left:215.25px;top:363.30px;width:68.75px;height:8.70px;background:#eeebdd;border:1px solid #c2bead;border-right-color:#f8f7ee;border-bottom-color:#fbfaf4;box-sizing:border-box;"></div>
<svg class="abs" style="left:216.25px;top:364.20px" width="13.4" height="7.4" viewBox="0 0 13.4 7.4"><path d="M0.4 7.1A6.3 6.5 0 0 1 4.4 1.05L6.7 7.1Z" fill="#38d028"/><path d="M4.4 1.05A6.3 6.5 0 0 1 10.3 1.75L6.7 7.1Z" fill="#f0f020"/><path d="M10.3 1.75A6.3 6.5 0 0 1 13 7.1L6.7 7.1Z" fill="#e02818"/><path d="M0.4 7.1A6.3 6.5 0 0 1 13 7.1Z" fill="none" stroke="#3a2a10" stroke-width="0.8"/><path d="M6.7 7.1L1.85 4.30" stroke="#101010" stroke-width="0.7"/></svg>
<span class="t" style="top:364.36px;font-size:5.4px;line-height:6.48px;color:#111;left:232.45px;max-width:52.0px;overflow:hidden;">SparkAdv:17.9</span>
<div style="left:215.25px;top:372.80px;width:68.75px;height:8.70px;background:#eeebdd;border:1px solid #c2bead;border-right-color:#f8f7ee;border-bottom-color:#fbfaf4;box-sizing:border-box;"></div>
<svg class="abs" style="left:216.25px;top:373.70px" width="13.4" height="7.4" viewBox="0 0 13.4 7.4"><path d="M0.4 7.1A6.3 6.5 0 0 1 4.4 1.05L6.7 7.1Z" fill="#38d028"/><path d="M4.4 1.05A6.3 6.5 0 0 1 10.3 1.75L6.7 7.1Z" fill="#f0f020"/><path d="M10.3 1.75A6.3 6.5 0 0 1 13 7.1L6.7 7.1Z" fill="#e02818"/><path d="M0.4 7.1A6.3 6.5 0 0 1 13 7.1Z" fill="none" stroke="#3a2a10" stroke-width="0.8"/><path d="M6.7 7.1L5.25 1.69" stroke="#101010" stroke-width="0.7"/></svg>
<span class="t" style="top:373.86px;font-size:5.4px;line-height:6.48px;color:#111;left:233.34px;max-width:51.1px;overflow:hidden;">WallFuel1:0.0</span>
<div style="left:215.25px;top:382.30px;width:68.75px;height:8.70px;background:#eeebdd;border:1px solid #c2bead;border-right-color:#f8f7ee;border-bottom-color:#fbfaf4;box-sizing:border-box;"></div>
<svg class="abs" style="left:216.25px;top:383.20px" width="13.4" height="7.4" viewBox="0 0 13.4 7.4"><path d="M0.4 7.1A6.3 6.5 0 0 1 4.4 1.05L6.7 7.1Z" fill="#38d028"/><path d="M4.4 1.05A6.3 6.5 0 0 1 10.3 1.75L6.7 7.1Z" fill="#f0f020"/><path d="M10.3 1.75A6.3 6.5 0 0 1 13 7.1L6.7 7.1Z" fill="#e02818"/><path d="M0.4 7.1A6.3 6.5 0 0 1 13 7.1Z" fill="none" stroke="#3a2a10" stroke-width="0.8"/><path d="M6.7 7.1L1.44 5.18" stroke="#101010" stroke-width="0.7"/></svg>
<span class="t" style="top:383.36px;font-size:5.4px;line-height:6.48px;color:#111;left:232.45px;max-width:52.0px;overflow:hidden;">EGT 7 temp:791.0</span>
<div style="left:215.25px;top:391.80px;width:68.75px;height:8.70px;background:#eeebdd;border:1px solid #c2bead;border-right-color:#f8f7ee;border-bottom-color:#fbfaf4;box-sizing:border-box;"></div>
<svg class="abs" style="left:216.25px;top:392.70px" width="13.4" height="7.4" viewBox="0 0 13.4 7.4"><path d="M0.4 7.1A6.3 6.5 0 0 1 4.4 1.05L6.7 7.1Z" fill="#38d028"/><path d="M4.4 1.05A6.3 6.5 0 0 1 10.3 1.75L6.7 7.1Z" fill="#f0f020"/><path d="M10.3 1.75A6.3 6.5 0 0 1 13 7.1L6.7 7.1Z" fill="#e02818"/><path d="M0.4 7.1A6.3 6.5 0 0 1 13 7.1Z" fill="none" stroke="#3a2a10" stroke-width="0.8"/><path d="M6.7 7.1L1.44 5.18" stroke="#101010" stroke-width="0.7"/></svg>
<span class="t" style="top:392.86px;font-size:5.4px;line-height:6.48px;color:#111;left:236.54px;max-width:47.9px;overflow:hidden;">status5:0.0</span>
<div style="left:285.75px;top:344.30px;width:68.75px;height:8.70px;background:#eeebdd;border:1px solid #c2bead;border-right-color:#f8f7ee;border-bottom-color:#fbfaf4;box-sizing:border-box;"></div>
<svg class="abs" style="left:286.75px;top:345.20px" width="13.4" height="7.4" viewBox="0 0 13.4 7.4"><path d="M0.4 7.1A6.3 6.5 0 0 1 4.4 1.05L6.7 7.1Z" fill="#38d028"/><path d="M4.4 1.05A6.3 6.5 0 0 1 10.3 1.75L6.7 7.1Z" fill="#f0f020"/><path d="M10.3 1.75A6.3 6.5 0 0 1 13 7.1L6.7 7.1Z" fill="#e02818"/><path d="M0.4 7.1A6.3 6.5 0 0 1 13 7.1Z" fill="none" stroke="#3a2a10" stroke-width="0.8"/><path d="M6.7 7.1L5.73 1.59" stroke="#101010" stroke-width="0.7"/></svg>
<span class="t" style="top:345.36px;font-size:5.4px;line-height:6.48px;color:#111;left:310.79px;max-width:44.2px;overflow:hidden;">TP:53.0</span>
<div style="left:285.75px;top:353.80px;width:68.75px;height:8.70px;background:#eeebdd;border:1px solid #c2bead;border-right-color:#f8f7ee;border-bottom-color:#fbfaf4;box-sizing:border-box;"></div>
<svg class="abs" style="left:286.75px;top:354.70px" width="13.4" height="7.4" viewBox="0 0 13.4 7.4"><path d="M0.4 7.1A6.3 6.5 0 0 1 4.4 1.05L6.7 7.1Z" fill="#38d028"/><path d="M4.4 1.05A6.3 6.5 0 0 1 10.3 1.75L6.7 7.1Z" fill="#f0f020"/><path d="M10.3 1.75A6.3 6.5 0 0 1 13 7.1L6.7 7.1Z" fill="#e02818"/><path d="M0.4 7.1A6.3 6.5 0 0 1 13 7.1Z" fill="none" stroke="#3a2a10" stroke-width="0.8"/><path d="M6.7 7.1L1.44 5.18" stroke="#101010" stroke-width="0.7"/></svg>
<span class="t" style="top:354.86px;font-size:5.4px;line-height:6.48px;color:#111;left:303.14px;max-width:51.8px;overflow:hidden;">Gammae:97.0</span>
<div style="left:285.75px;top:363.30px;width:68.75px;height:8.70px;background:#eeebdd;border:1px solid #c2bead;border-right-color:#f8f7ee;border-bottom-color:#fbfaf4;box-sizing:border-box;"></div>
<svg class="abs" style="left:286.75px;top:364.20px" width="13.4" height="7.4" viewBox="0 0 13.4 7.4"><path d="M0.4 7.1A6.3 6.5 0 0 1 4.4 1.05L6.7 7.1Z" fill="#38d028"/><path d="M4.4 1.05A6.3 6.5 0 0 1 10.3 1.75L6.7 7.1Z" fill="#f0f020"/><path d="M10.3 1.75A6.3 6.5 0 0 1 13 7.1L6.7 7.1Z" fill="#e02818"/><path d="M0.4 7.1A6.3 6.5 0 0 1 13 7.1Z" fill="none" stroke="#3a2a10" stroke-width="0.8"/><path d="M6.7 7.1L3.90 2.25" stroke="#101010" stroke-width="0.7"/></svg>
<span class="t" style="top:364.36px;font-size:5.4px;line-height:6.48px;color:#111;left:304.49px;max-width:50.5px;overflow:hidden;">knockRet:0.0</span>
<div style="left:285.75px;top:372.80px;width:68.75px;height:8.70px;background:#eeebdd;border:1px solid #c2bead;border-right-color:#f8f7ee;border-bottom-color:#fbfaf4;box-sizing:border-box;"></div>
<svg class="abs" style="left:286.75px;top:373.70px" width="13.4" height="7.4" viewBox="0 0 13.4 7.4"><path d="M0.4 7.1A6.3 6.5 0 0 1 4.4 1.05L6.7 7.1Z" fill="#38d028"/><path d="M4.4 1.05A6.3 6.5 0 0 1 10.3 1.75L6.7 7.1Z" fill="#f0f020"/><path d="M10.3 1.75A6.3 6.5 0 0 1 13 7.1L6.7 7.1Z" fill="#e02818"/><path d="M0.4 7.1A6.3 6.5 0 0 1 13 7.1Z" fill="none" stroke="#3a2a10" stroke-width="0.8"/><path d="M6.7 7.1L1.44 5.18" stroke="#101010" stroke-width="0.7"/></svg>
<span class="t" style="top:373.86px;font-size:5.4px;line-height:6.48px;color:#111;left:303.84px;max-width:51.1px;overflow:hidden;">WallFuel2:0.0</span>
<div style="left:285.75px;top:382.30px;width:68.75px;height:8.70px;background:#eeebdd;border:1px solid #c2bead;border-right-color:#f8f7ee;border-bottom-color:#fbfaf4;box-sizing:border-box;"></div>
<svg class="abs" style="left:286.75px;top:383.20px" width="13.4" height="7.4" viewBox="0 0 13.4 7.4"><path d="M0.4 7.1A6.3 6.5 0 0 1 4.4 1.05L6.7 7.1Z" fill="#38d028"/><path d="M4.4 1.05A6.3 6.5 0 0 1 10.3 1.75L6.7 7.1Z" fill="#f0f020"/><path d="M10.3 1.75A6.3 6.5 0 0 1 13 7.1L6.7 7.1Z" fill="#e02818"/><path d="M0.4 7.1A6.3 6.5 0 0 1 13 7.1Z" fill="none" stroke="#3a2a10" stroke-width="0.8"/><path d="M6.7 7.1L1.44 5.18" stroke="#101010" stroke-width="0.7"/></svg>
<span class="t" style="top:383.36px;font-size:5.4px;line-height:6.48px;color:#111;left:304.79px;max-width:50.2px;overflow:hidden;">gpioadc0:0.0</span>
<div style="left:285.75px;top:391.80px;width:68.75px;height:8.70px;background:#eeebdd;border:1px solid #c2bead;border-right-color:#f8f7ee;border-bottom-color:#fbfaf4;box-sizing:border-box;"></div>
<svg class="abs" style="left:286.75px;top:392.70px" width="13.4" height="7.4" viewBox="0 0 13.4 7.4"><path d="M0.4 7.1A6.3 6.5 0 0 1 4.4 1.05L6.7 7.1Z" fill="#38d028"/><path d="M4.4 1.05A6.3 6.5 0 0 1 10.3 1.75L6.7 7.1Z" fill="#f0f020"/><path d="M10.3 1.75A6.3 6.5 0 0 1 13 7.1L6.7 7.1Z" fill="#e02818"/><path d="M0.4 7.1A6.3 6.5 0 0 1 13 7.1Z" fill="none" stroke="#3a2a10" stroke-width="0.8"/><path d="M6.7 7.1L1.44 5.18" stroke="#101010" stroke-width="0.7"/></svg>
<span class="t" style="top:392.86px;font-size:5.4px;line-height:6.48px;color:#111;left:302.95px;max-width:52.0px;overflow:hidden;">timing err%:7.6</span>
<div style="left:356.25px;top:344.30px;width:68.75px;height:8.70px;background:#eeebdd;border:1px solid #c2bead;border-right-color:#f8f7ee;border-bottom-color:#fbfaf4;box-sizing:border-box;"></div>
<svg class="abs" style="left:357.25px;top:345.20px" width="13.4" height="7.4" viewBox="0 0 13.4 7.4"><path d="M0.4 7.1A6.3 6.5 0 0 1 4.4 1.05L6.7 7.1Z" fill="#38d028"/><path d="M4.4 1.05A6.3 6.5 0 0 1 10.3 1.75L6.7 7.1Z" fill="#f0f020"/><path d="M10.3 1.75A6.3 6.5 0 0 1 13 7.1L6.7 7.1Z" fill="#e02818"/><path d="M0.4 7.1A6.3 6.5 0 0 1 13 7.1Z" fill="none" stroke="#3a2a10" stroke-width="0.8"/><path d="M6.7 7.1L1.44 5.18" stroke="#101010" stroke-width="0.7"/></svg>
<span class="t" style="top:345.36px;font-size:5.4px;line-height:6.48px;color:#111;left:379.34px;max-width:46.1px;overflow:hidden;">AFR:18.9</span>
<div style="left:356.25px;top:353.80px;width:68.75px;height:8.70px;background:#eeebdd;border:1px solid #c2bead;border-right-color:#f8f7ee;border-bottom-color:#fbfaf4;box-sizing:border-box;"></div>
<svg class="abs" style="left:357.25px;top:354.70px" width="13.4" height="7.4" viewBox="0 0 13.4 7.4"><path d="M0.4 7.1A6.3 6.5 0 0 1 4.4 1.05L6.7 7.1Z" fill="#38d028"/><path d="M4.4 1.05A6.3 6.5 0 0 1 10.3 1.75L6.7 7.1Z" fill="#f0f020"/><path d="M10.3 1.75A6.3 6.5 0 0 1 13 7.1L6.7 7.1Z" fill="#e02818"/><path d="M0.4 7.1A6.3 6.5 0 0 1 13 7.1Z" fill="none" stroke="#3a2a10" stroke-width="0.8"/><path d="M6.7 7.1L6.21 1.52" stroke="#101010" stroke-width="0.7"/></svg>
<span class="t" style="top:354.86px;font-size:5.4px;line-height:6.48px;color:#111;left:373.79px;max-width:51.7px;overflow:hidden;">TPSacc:100.0</span>
<div style="left:356.25px;top:363.30px;width:68.75px;height:8.70px;background:#eeebdd;border:1px solid #c2bead;border-right-color:#f8f7ee;border-bottom-color:#fbfaf4;box-sizing:border-box;"></div>
<svg class="abs" style="left:357.25px;top:364.20px" width="13.4" height="7.4" viewBox="0 0 13.4 7.4"><path d="M0.4 7.1A6.3 6.5 0 0 1 4.4 1.05L6.7 7.1Z" fill="#38d028"/><path d="M4.4 1.05A6.3 6.5 0 0 1 10.3 1.75L6.7 7.1Z" fill="#f0f020"/><path d="M10.3 1.75A6.3 6.5 0 0 1 13 7.1L6.7 7.1Z" fill="#e02818"/><path d="M0.4 7.1A6.3 6.5 0 0 1 13 7.1Z" fill="none" stroke="#3a2a10" stroke-width="0.8"/><path d="M6.7 7.1L1.85 4.30" stroke="#101010" stroke-width="0.7"/></svg>
<span class="t" style="top:364.36px;font-size:5.4px;line-height:6.48px;color:#111;left:376.04px;max-width:49.4px;overflow:hidden;">ColdAdv:0.0</span>
<div style="left:356.25px;top:372.80px;width:68.75px;height:8.70px;background:#eeebdd;border:1px solid #c2bead;border-right-color:#f8f7ee;border-bottom-color:#fbfaf4;box-sizing:border-box;"></div>
<svg class="abs" style="left:357.25px;top:373.70px" width="13.4" height="7.4" viewBox="0 0 13.4 7.4"><path d="M0.4 7.1A6.3 6.5 0 0 1 4.4 1.05L6.7 7.1Z" fill="#38d028"/><path d="M4.4 1.05A6.3 6.5 0 0 1 10.3 1.75L6.7 7.1Z" fill="#f0f020"/><path d="M10.3 1.75A6.3 6.5 0 0 1 13 7.1L6.7 7.1Z" fill="#e02818"/><path d="M0.4 7.1A6.3 6.5 0 0 1 13 7.1Z" fill="none" stroke="#3a2a10" stroke-width="0.8"/><path d="M6.7 7.1L5.25 1.69" stroke="#101010" stroke-width="0.7"/></svg>
<span class="t" style="top:373.86px;font-size:5.4px;line-height:6.48px;color:#111;left:376.19px;max-width:49.3px;overflow:hidden;">EAE1 %:0.0</span>
<div style="left:356.25px;top:382.30px;width:68.75px;height:8.70px;background:#eeebdd;border:1px solid #c2bead;border-right-color:#f8f7ee;border-bottom-color:#fbfaf4;box-sizing:border-box;"></div>
<svg class="abs" style="left:357.25px;top:383.20px" width="13.4" height="7.4" viewBox="0 0 13.4 7.4"><path d="M0.4 7.1A6.3 6.5 0 0 1 4.4 1.05L6.7 7.1Z" fill="#38d028"/><path d="M4.4 1.05A6.3 6.5 0 0 1 10.3 1.75L6.7 7.1Z" fill="#f0f020"/><path d="M10.3 1.75A6.3 6.5 0 0 1 13 7.1L6.7 7.1Z" fill="#e02818"/><path d="M0.4 7.1A6.3 6.5 0 0 1 13 7.1Z" fill="none" stroke="#3a2a10" stroke-width="0.8"/><path d="M6.7 7.1L1.44 5.18" stroke="#101010" stroke-width="0.7"/></svg>
<span class="t" style="top:383.36px;font-size:5.4px;line-height:6.48px;color:#111;left:375.29px;max-width:50.2px;overflow:hidden;">gpioadc1:0.0</span>
<div style="left:356.25px;top:391.80px;width:68.75px;height:8.70px;background:#eeebdd;border:1px solid #c2bead;border-right-color:#f8f7ee;border-bottom-color:#fbfaf4;box-sizing:border-box;"></div>
<svg class="abs" style="left:357.25px;top:392.70px" width="13.4" height="7.4" viewBox="0 0 13.4 7.4"><path d="M0.4 7.1A6.3 6.5 0 0 1 4.4 1.05L6.7 7.1Z" fill="#38d028"/><path d="M4.4 1.05A6.3 6.5 0 0 1 10.3 1.75L6.7 7.1Z" fill="#f0f020"/><path d="M10.3 1.75A6.3 6.5 0 0 1 13 7.1L6.7 7.1Z" fill="#e02818"/><path d="M0.4 7.1A6.3 6.5 0 0 1 13 7.1Z" fill="none" stroke="#3a2a10" stroke-width="0.8"/><path d="M6.7 7.1L1.44 5.18" stroke="#101010" stroke-width="0.7"/></svg>
<span class="t" style="top:392.86px;font-size:5.4px;line-height:6.48px;color:#111;left:373.45px;max-width:52.0px;overflow:hidden;">AFR Target 1:1470.0</span>
<div style="left:426.75px;top:344.30px;width:68.75px;height:8.70px;background:#eeebdd;border:1px solid #c2bead;border-right-color:#f8f7ee;border-bottom-color:#fbfaf4;box-sizing:border-box;"></div>
<svg class="abs" style="left:427.75px;top:345.20px" width="13.4" height="7.4" viewBox="0 0 13.4 7.4"><path d="M0.4 7.1A6.3 6.5 0 0 1 4.4 1.05L6.7 7.1Z" fill="#38d028"/><path d="M4.4 1.05A6.3 6.5 0 0 1 10.3 1.75L6.7 7.1Z" fill="#f0f020"/><path d="M10.3 1.75A6.3 6.5 0 0 1 13 7.1L6.7 7.1Z" fill="#e02818"/><path d="M0.4 7.1A6.3 6.5 0 0 1 13 7.1Z" fill="none" stroke="#3a2a10" stroke-width="0.8"/><path d="M6.7 7.1L5.73 1.59" stroke="#101010" stroke-width="0.7"/></svg>
<span class="t" style="top:345.36px;font-size:5.4px;line-height:6.48px;color:#111;left:450.05px;max-width:45.9px;overflow:hidden;">MAT:26.7</span>
<div style="left:426.75px;top:353.80px;width:68.75px;height:8.70px;background:#eeebdd;border:1px solid #c2bead;border-right-color:#f8f7ee;border-bottom-color:#fbfaf4;box-sizing:border-box;"></div>
<svg class="abs" style="left:427.75px;top:354.70px" width="13.4" height="7.4" viewBox="0 0 13.4 7.4"><path d="M0.4 7.1A6.3 6.5 0 0 1 4.4 1.05L6.7 7.1Z" fill="#38d028"/><path d="M4.4 1.05A6.3 6.5 0 0 1 10.3 1.75L6.7 7.1Z" fill="#f0f020"/><path d="M10.3 1.75A6.3 6.5 0 0 1 13 7.1L6.7 7.1Z" fill="#e02818"/><path d="M0.4 7.1A6.3 6.5 0 0 1 13 7.1Z" fill="none" stroke="#3a2a10" stroke-width="0.8"/><path d="M6.7 7.1L1.44 5.18" stroke="#101010" stroke-width="0.7"/></svg>
<span class="t" style="top:354.86px;font-size:5.4px;line-height:6.48px;color:#111;left:450.29px;max-width:45.7px;overflow:hidden;">Gve:80.0</span>
<div style="left:426.75px;top:363.30px;width:68.75px;height:8.70px;background:#eeebdd;border:1px solid #c2bead;border-right-color:#f8f7ee;border-bottom-color:#fbfaf4;box-sizing:border-box;"></div>
<svg class="abs" style="left:427.75px;top:364.20px" width="13.4" height="7.4" viewBox="0 0 13.4 7.4"><path d="M0.4 7.1A6.3 6.5 0 0 1 4.4 1.05L6.7 7.1Z" fill="#38d028"/><path d="M4.4 1.05A6.3 6.5 0 0 1 10.3 1.75L6.7 7.1Z" fill="#f0f020"/><path d="M10.3 1.75A6.3 6.5 0 0 1 13 7.1L6.7 7.1Z" fill="#e02818"/><path d="M0.4 7.1A6.3 6.5 0 0 1 13 7.1Z" fill="none" stroke="#3a2a10" stroke-width="0.8"/><path d="M6.7 7.1L3.90 2.25" stroke="#101010" stroke-width="0.7"/></svg>
<span class="t" style="top:364.36px;font-size:5.4px;line-height:6.48px;color:#111;left:448.64px;max-width:47.3px;overflow:hidden;">Dwell:3.46</span>
<div style="left:426.75px;top:372.80px;width:68.75px;height:8.70px;background:#eeebdd;border:1px solid #c2bead;border-right-color:#f8f7ee;border-bottom-color:#fbfaf4;box-sizing:border-box;"></div>
<svg class="abs" style="left:427.75px;top:373.70px" width="13.4" height="7.4" viewBox="0 0 13.4 7.4"><path d="M0.4 7.1A6.3 6.5 0 0 1 4.4 1.05L6.7 7.1Z" fill="#38d028"/><path d="M4.4 1.05A6.3 6.5 0 0 1 10.3 1.75L6.7 7.1Z" fill="#f0f020"/><path d="M10.3 1.75A6.3 6.5 0 0 1 13 7.1L6.7 7.1Z" fill="#e02818"/><path d="M0.4 7.1A6.3 6.5 0 0 1 13 7.1Z" fill="none" stroke="#3a2a10" stroke-width="0.8"/><path d="M6.7 7.1L1.44 5.18" stroke="#101010" stroke-width="0.7"/></svg>
<span class="t" style="top:373.86px;font-size:5.4px;line-height:6.48px;color:#111;left:446.69px;max-width:49.3px;overflow:hidden;">EAE2 %:0.0</span>
<div style="left:426.75px;top:382.30px;width:68.75px;height:8.70px;background:#eeebdd;border:1px solid #c2bead;border-right-color:#f8f7ee;border-bottom-color:#fbfaf4;box-sizing:border-box;"></div>
<svg class="abs" style="left:427.75px;top:383.20px" width="13.4" height="7.4" viewBox="0 0 13.4 7.4"><path d="M0.4 7.1A6.3 6.5 0 0 1 4.4 1.05L6.7 7.1Z" fill="#38d028"/><path d="M4.4 1.05A6.3 6.5 0 0 1 10.3 1.75L6.7 7.1Z" fill="#f0f020"/><path d="M10.3 1.75A6.3 6.5 0 0 1 13 7.1L6.7 7.1Z" fill="#e02818"/><path d="M0.4 7.1A6.3 6.5 0 0 1 13 7.1Z" fill="none" stroke="#3a2a10" stroke-width="0.8"/><path d="M6.7 7.1L1.44 5.18" stroke="#101010" stroke-width="0.7"/></svg>
<span class="t" style="top:383.36px;font-size:5.4px;line-height:6.48px;color:#111;left:445.79px;max-width:50.2px;overflow:hidden;">gpioadc2:0.0</span>
<div style="left:426.75px;top:391.80px;width:68.75px;height:8.70px;background:#eeebdd;border:1px solid #c2bead;border-right-color:#f8f7ee;border-bottom-color:#fbfaf4;box-sizing:border-box;"></div>
<svg class="abs" style="left:427.75px;top:392.70px" width="13.4" height="7.4" viewBox="0 0 13.4 7.4"><path d="M0.4 7.1A6.3 6.5 0 0 1 4.4 1.05L6.7 7.1Z" fill="#38d028"/><path d="M4.4 1.05A6.3 6.5 0 0 1 10.3 1.75L6.7 7.1Z" fill="#f0f020"/><path d="M10.3 1.75A6.3 6.5 0 0 1 13 7.1L6.7 7.1Z" fill="#e02818"/><path d="M0.4 7.1A6.3 6.5 0 0 1 13 7.1Z" fill="none" stroke="#3a2a10" stroke-width="0.8"/><path d="M6.7 7.1L1.44 5.18" stroke="#101010" stroke-width="0.7"/></svg>
<span class="t" style="top:392.86px;font-size:5.4px;line-height:6.48px;color:#111;left:443.95px;max-width:52.0px;overflow:hidden;">Boost Duty:0.0</span>
<div style="left:497.25px;top:344.30px;width:68.75px;height:8.70px;background:#eeebdd;border:1px solid #c2bead;border-right-color:#f8f7ee;border-bottom-color:#fbfaf4;box-sizing:border-box;"></div>
<svg class="abs" style="left:498.25px;top:345.20px" width="13.4" height="7.4" viewBox="0 0 13.4 7.4"><path d="M0.4 7.1A6.3 6.5 0 0 1 4.4 1.05L6.7 7.1Z" fill="#38d028"/><path d="M4.4 1.05A6.3 6.5 0 0 1 10.3 1.75L6.7 7.1Z" fill="#f0f020"/><path d="M10.3 1.75A6.3 6.5 0 0 1 13 7.1L6.7 7.1Z" fill="#e02818"/><path d="M0.4 7.1A6.3 6.5 0 0 1 13 7.1Z" fill="none" stroke="#3a2a10" stroke-width="0.8"/><path d="M6.7 7.1L1.44 5.18" stroke="#101010" stroke-width="0.7"/></svg>
<span class="t" style="top:345.36px;font-size:5.4px;line-height:6.48px;color:#111;left:521.14px;max-width:45.3px;overflow:hidden;">CLT:82.4</span>
<div style="left:497.25px;top:353.80px;width:68.75px;height:8.70px;background:#eeebdd;border:1px solid #c2bead;border-right-color:#f8f7ee;border-bottom-color:#fbfaf4;box-sizing:border-box;"></div>
<svg class="abs" style="left:498.25px;top:354.70px" width="13.4" height="7.4" viewBox="0 0 13.4 7.4"><path d="M0.4 7.1A6.3 6.5 0 0 1 4.4 1.05L6.7 7.1Z" fill="#38d028"/><path d="M4.4 1.05A6.3 6.5 0 0 1 10.3 1.75L6.7 7.1Z" fill="#f0f020"/><path d="M10.3 1.75A6.3 6.5 0 0 1 13 7.1L6.7 7.1Z" fill="#e02818"/><path d="M0.4 7.1A6.3 6.5 0 0 1 13 7.1Z" fill="none" stroke="#3a2a10" stroke-width="0.8"/><path d="M6.7 7.1L6.21 1.52" stroke="#101010" stroke-width="0.7"/></svg>
<span class="t" style="top:354.86px;font-size:5.4px;line-height:6.48px;color:#111;left:519.94px;max-width:46.5px;overflow:hidden;">PW:9.084</span>
<div style="left:497.25px;top:363.30px;width:68.75px;height:8.70px;background:#eeebdd;border:1px solid #c2bead;border-right-color:#f8f7ee;border-bottom-color:#fbfaf4;box-sizing:border-box;"></div>
<svg class="abs" style="left:498.25px;top:364.20px" width="13.4" height="7.4" viewBox="0 0 13.4 7.4"><path d="M0.4 7.1A6.3 6.5 0 0 1 4.4 1.05L6.7 7.1Z" fill="#38d028"/><path d="M4.4 1.05A6.3 6.5 0 0 1 10.3 1.75L6.7 7.1Z" fill="#f0f020"/><path d="M10.3 1.75A6.3 6.5 0 0 1 13 7.1L6.7 7.1Z" fill="#e02818"/><path d="M0.4 7.1A6.3 6.5 0 0 1 13 7.1Z" fill="none" stroke="#3a2a10" stroke-width="0.8"/><path d="M6.7 7.1L1.85 4.30" stroke="#101010" stroke-width="0.7"/></svg>
<span class="t" style="top:364.36px;font-size:5.4px;line-height:6.48px;color:#111;left:515.24px;max-width:51.2px;overflow:hidden;">tpsDOT:101.4</span>
<div style="left:497.25px;top:372.80px;width:68.75px;height:8.70px;background:#eeebdd;border:1px solid #c2bead;border-right-color:#f8f7ee;border-bottom-color:#fbfaf4;box-sizing:border-box;"></div>
<svg class="abs" style="left:498.25px;top:373.70px" width="13.4" height="7.4" viewBox="0 0 13.4 7.4"><path d="M0.4 7.1A6.3 6.5 0 0 1 4.4 1.05L6.7 7.1Z" fill="#38d028"/><path d="M4.4 1.05A6.3 6.5 0 0 1 10.3 1.75L6.7 7.1Z" fill="#f0f020"/><path d="M10.3 1.75A6.3 6.5 0 0 1 13 7.1L6.7 7.1Z" fill="#e02818"/><path d="M0.4 7.1A6.3 6.5 0 0 1 13 7.1Z" fill="none" stroke="#3a2a10" stroke-width="0.8"/><path d="M6.7 7.1L5.25 1.69" stroke="#101010" stroke-width="0.7"/></svg>
<span class="t" style="top:373.86px;font-size:5.4px;line-height:6.48px;color:#111;left:519.74px;max-width:46.7px;overflow:hidden;">Load:53.1</span>
<div style="left:497.25px;top:382.30px;width:68.75px;height:8.70px;background:#eeebdd;border:1px solid #c2bead;border-right-color:#f8f7ee;border-bottom-color:#fbfaf4;box-sizing:border-box;"></div>
<svg class="abs" style="left:498.25px;top:383.20px" width="13.4" height="7.4" viewBox="0 0 13.4 7.4"><path d="M0.4 7.1A6.3 6.5 0 0 1 4.4 1.05L6.7 7.1Z" fill="#38d028"/><path d="M4.4 1.05A6.3 6.5 0 0 1 10.3 1.75L6.7 7.1Z" fill="#f0f020"/><path d="M10.3 1.75A6.3 6.5 0 0 1 13 7.1L6.7 7.1Z" fill="#e02818"/><path d="M0.4 7.1A6.3 6.5 0 0 1 13 7.1Z" fill="none" stroke="#3a2a10" stroke-width="0.8"/><path d="M6.7 7.1L1.44 5.18" stroke="#101010" stroke-width="0.7"/></svg>
<span class="t" style="top:383.36px;font-size:5.4px;line-height:6.48px;color:#111;left:516.29px;max-width:50.2px;overflow:hidden;">gpioadc3:0.0</span>
<div style="left:497.25px;top:391.80px;width:68.75px;height:8.70px;background:#eeebdd;border:1px solid #c2bead;border-right-color:#f8f7ee;border-bottom-color:#fbfaf4;box-sizing:border-box;"></div>
<svg class="abs" style="left:498.25px;top:392.70px" width="13.4" height="7.4" viewBox="0 0 13.4 7.4"><path d="M0.4 7.1A6.3 6.5 0 0 1 4.4 1.05L6.7 7.1Z" fill="#38d028"/><path d="M4.4 1.05A6.3 6.5 0 0 1 10.3 1.75L6.7 7.1Z" fill="#f0f020"/><path d="M10.3 1.75A6.3 6.5 0 0 1 13 7.1L6.7 7.1Z" fill="#e02818"/><path d="M0.4 7.1A6.3 6.5 0 0 1 13 7.1Z" fill="none" stroke="#3a2a10" stroke-width="0.8"/><path d="M6.7 7.1L1.44 5.18" stroke="#101010" stroke-width="0.7"/></svg>
<span class="t" style="top:392.86px;font-size:5.4px;line-height:6.48px;color:#111;left:514.45px;max-width:52.0px;overflow:hidden;">PWM Idle Duty:2.0</span>
<div style="left:567.75px;top:344.30px;width:68.75px;height:8.70px;background:#eeebdd;border:1px solid #c2bead;border-right-color:#f8f7ee;border-bottom-color:#fbfaf4;box-sizing:border-box;"></div>
<svg class="abs" style="left:568.75px;top:345.20px" width="13.4" height="7.4" viewBox="0 0 13.4 7.4"><path d="M0.4 7.1A6.3 6.5 0 0 1 4.4 1.05L6.7 7.1Z" fill="#38d028"/><path d="M4.4 1.05A6.3 6.5 0 0 1 10.3 1.75L6.7 7.1Z" fill="#f0f020"/><path d="M10.3 1.75A6.3 6.5 0 0 1 13 7.1L6.7 7.1Z" fill="#e02818"/><path d="M0.4 7.1A6.3 6.5 0 0 1 13 7.1Z" fill="none" stroke="#3a2a10" stroke-width="0.8"/><path d="M6.7 7.1L5.73 1.59" stroke="#101010" stroke-width="0.7"/></svg>
<span class="t" style="top:345.36px;font-size:5.4px;line-height:6.48px;color:#111;left:589.34px;max-width:47.6px;overflow:hidden;">Engine:1.0</span>
<div style="left:567.75px;top:353.80px;width:68.75px;height:8.70px;background:#eeebdd;border:1px solid #c2bead;border-right-color:#f8f7ee;border-bottom-color:#fbfaf4;box-sizing:border-box;"></div>
<svg class="abs" style="left:568.75px;top:354.70px" width="13.4" height="7.4" viewBox="0 0 13.4 7.4"><path d="M0.4 7.1A6.3 6.5 0 0 1 4.4 1.05L6.7 7.1Z" fill="#38d028"/><path d="M4.4 1.05A6.3 6.5 0 0 1 10.3 1.75L6.7 7.1Z" fill="#f0f020"/><path d="M10.3 1.75A6.3 6.5 0 0 1 13 7.1L6.7 7.1Z" fill="#e02818"/><path d="M0.4 7.1A6.3 6.5 0 0 1 13 7.1Z" fill="none" stroke="#3a2a10" stroke-width="0.8"/><path d="M6.7 7.1L1.44 5.18" stroke="#101010" stroke-width="0.7"/></svg>
<span class="t" style="top:354.86px;font-size:5.4px;line-height:6.48px;color:#111;left:584.95px;max-width:52.0px;overflow:hidden;">DutyCycle1:19.0</span>
<div style="left:567.75px;top:363.30px;width:68.75px;height:8.70px;background:#eeebdd;border:1px solid #c2bead;border-right-color:#f8f7ee;border-bottom-color:#fbfaf4;box-sizing:border-box;"></div>
<svg class="abs" style="left:568.75px;top:364.20px" width="13.4" height="7.4" viewBox="0 0 13.4 7.4"><path d="M0.4 7.1A6.3 6.5 0 0 1 4.4 1.05L6.7 7.1Z" fill="#38d028"/><path d="M4.4 1.05A6.3 6.5 0 0 1 10.3 1.75L6.7 7.1Z" fill="#f0f020"/><path d="M10.3 1.75A6.3 6.5 0 0 1 13 7.1L6.7 7.1Z" fill="#e02818"/><path d="M0.4 7.1A6.3 6.5 0 0 1 13 7.1Z" fill="none" stroke="#3a2a10" stroke-width="0.8"/><path d="M6.7 7.1L3.90 2.25" stroke="#101010" stroke-width="0.7"/></svg>
<span class="t" style="top:364.36px;font-size:5.4px;line-height:6.48px;color:#111;left:587.09px;max-width:49.9px;overflow:hidden;">mapDOT:0.0</span>
<div style="left:567.75px;top:372.80px;width:68.75px;height:8.70px;background:#eeebdd;border:1px solid #c2bead;border-right-color:#f8f7ee;border-bottom-color:#fbfaf4;box-sizing:border-box;"></div>
<svg class="abs" style="left:568.75px;top:373.70px" width="13.4" height="7.4" viewBox="0 0 13.4 7.4"><path d="M0.4 7.1A6.3 6.5 0 0 1 4.4 1.05L6.7 7.1Z" fill="#38d028"/><path d="M4.4 1.05A6.3 6.5 0 0 1 10.3 1.75L6.7 7.1Z" fill="#f0f020"/><path d="M10.3 1.75A6.3 6.5 0 0 1 13 7.1L6.7 7.1Z" fill="#e02818"/><path d="M0.4 7.1A6.3 6.5 0 0 1 13 7.1Z" fill="none" stroke="#3a2a10" stroke-width="0.8"/><path d="M6.7 7.1L1.44 5.18" stroke="#101010" stroke-width="0.7"/></svg>
<span class="t" style="top:373.86px;font-size:5.4px;line-height:6.48px;color:#111;left:584.95px;max-width:52.0px;overflow:hidden;">Secondary Load:0.0</span>
<div style="left:567.75px;top:382.30px;width:68.75px;height:8.70px;background:#eeebdd;border:1px solid #c2bead;border-right-color:#f8f7ee;border-bottom-color:#fbfaf4;box-sizing:border-box;"></div>
<svg class="abs" style="left:568.75px;top:383.20px" width="13.4" height="7.4" viewBox="0 0 13.4 7.4"><path d="M0.4 7.1A6.3 6.5 0 0 1 4.4 1.05L6.7 7.1Z" fill="#38d028"/><path d="M4.4 1.05A6.3 6.5 0 0 1 10.3 1.75L6.7 7.1Z" fill="#f0f020"/><path d="M10.3 1.75A6.3 6.5 0 0 1 13 7.1L6.7 7.1Z" fill="#e02818"/><path d="M0.4 7.1A6.3 6.5 0 0 1 13 7.1Z" fill="none" stroke="#3a2a10" stroke-width="0.8"/><path d="M6.7 7.1L1.44 5.18" stroke="#101010" stroke-width="0.7"/></svg>
<span class="t" style="top:383.36px;font-size:5.4px;line-height:6.48px;color:#111;left:587.54px;max-width:49.4px;overflow:hidden;">status1:24.0</span>
<div style="left:567.75px;top:391.80px;width:68.75px;height:8.70px;background:#eeebdd;border:1px solid #c2bead;border-right-color:#f8f7ee;border-bottom-color:#fbfaf4;box-sizing:border-box;"></div>
<svg class="abs" style="left:568.75px;top:392.70px" width="13.4" height="7.4" viewBox="0 0 13.4 7.4"><path d="M0.4 7.1A6.3 6.5 0 0 1 4.4 1.05L6.7 7.1Z" fill="#38d028"/><path d="M4.4 1.05A6.3 6.5 0 0 1 10.3 1.75L6.7 7.1Z" fill="#f0f020"/><path d="M10.3 1.75A6.3 6.5 0 0 1 13 7.1L6.7 7.1Z" fill="#e02818"/><path d="M0.4 7.1A6.3 6.5 0 0 1 13 7.1Z" fill="none" stroke="#3a2a10" stroke-width="0.8"/><path d="M6.7 7.1L1.44 5.18" stroke="#101010" stroke-width="0.7"/></svg>
<span class="t" style="top:392.86px;font-size:5.4px;line-height:6.48px;color:#111;left:584.95px;max-width:52.0px;overflow:hidden;">Lost sync count:1.0</span>
<div style="left:3.40px;top:412.20px;width:506.00px;height:8.20px;background:#fbfbf6;border:0.6px solid #8a8778;border-right-color:#fff;border-bottom-color:#fff;box-sizing:border-box;"></div>
<div style="left:5.00px;top:413.90px;width:80.00px;height:4.90px;background:#0808e8;"></div>
<svg class="abs" style="left:0;top:0" width="640" height="480" viewBox="0 0 640 480"><g fill="#000" stroke="none"><rect x="513" y="413.6" width="5.4" height="5.6"/><rect x="524" y="412.9" width="1.4" height="7"/><rect x="527.2" y="412.9" width="1.4" height="7"/><path d="M533.8 412.9L541 416.4L533.8 419.9Z"/><circle cx="558.8" cy="415.4" r="2.3" fill="#e4e4ec" stroke="#3a3a3a" stroke-width="0.8"/><path d="M557.0999999999999 417.3L554.5999999999999 420" stroke="#2a2a2a" stroke-width="1.2"/><circle cx="569.8" cy="415.4" r="2.3" fill="#e4e4ec" stroke="#3a3a3a" stroke-width="0.8"/><path d="M568.0999999999999 417.3L565.5999999999999 420" stroke="#2a2a2a" stroke-width="1.2"/><circle cx="569.8" cy="415.4" r="0.9" fill="#222"/><rect x="576" y="412.9" width="1.7" height="7"/><path d="M582.6 412.9V419.9L577.4 416.4Z"/><path d="M589.9 413.4V419.4L586 416.4Z M593.6 413.4V419.4L589.7 416.4Z"/><rect x="597.2" y="415.75" width="6.4" height="1.3"/><rect x="606.8" y="415.75" width="7" height="1.3"/><rect x="609.65" y="412.9" width="1.3" height="7"/><path d="M617.8 413.4V419.4L621.7 416.4Z M621.5 413.4V419.4L625.4 416.4Z"/><path d="M628.4 412.9V419.9L633.6 416.4Z"/><rect x="633.3" y="412.9" width="1.7" height="7"/></g></svg>
<div style="left:0.00px;top:424.30px;width:640.00px;height:15.40px;background:linear-gradient(#3a80ee 0%,#2663de 12%,#245cd8 50%,#2058cc 88%,#1b4ab6 100%);"></div>
<div style="left:0.00px;top:424.30px;width:47.50px;height:15.40px;background:linear-gradient(#5cb85c 0%,#3c9a3c 15%,#379337 60%,#2c7c2c 100%);border-radius:0 5px 5px 0;"></div>
<span class="t" style="top:426.08px;font-size:9.2px;line-height:11.04px;color:#fff;font-weight:bold;left:16.40px;font-style:italic;text-shadow:0.5px 0.5px 0.6px #1a4a1a;">start</span>
<svg class="abs" style="left:5px;top:427.6px" width="8.6" height="8.4" viewBox="0 0 8.6 8.4"><path d="M0.4 0.8Q2.2 0 3.8 0.9V3.8Q2.2 3 0.4 3.8Z" fill="#e8502c"/><path d="M4.5 1.1Q6.2 2 8 1.1V4Q6.2 4.9 4.5 4Z" fill="#6cc24a"/><path d="M0.4 4.5Q2.2 3.7 3.8 4.6V7.5Q2.2 6.7 0.4 7.5Z" fill="#3a7ae8"/><path d="M4.5 4.8Q6.2 5.7 8 4.8V7.7Q6.2 8.6 4.5 7.7Z" fill="#f4c42c"/></svg>
<svg class="abs" style="left:52px;top:426px" width="40" height="12" viewBox="0 0 40 12"><circle cx="6.5" cy="6" r="3" fill="none" stroke="#7cc4f8" stroke-width="1.4"/><path d="M3 7L10.4 3.6" stroke="#f0d060" stroke-width="0.8"/><rect x="14.2" y="3" width="6" height="6" rx="1" fill="#dfe8f8"/><rect x="15.4" y="4.2" width="3.6" height="3.6" fill="#3a6ad0"/><circle cx="28" cy="6" r="3" fill="#f0f0f0"/><circle cx="28" cy="6" r="1.6" fill="#e07820"/><circle cx="28" cy="6" r="0.7" fill="#303030"/></svg>
<span class="t" style="top:425.50px;font-size:5px;line-height:6.00px;color:#fff;left:92.00px;">»</span>
<div style="left:100.00px;top:426.00px;width:78.60px;height:12.40px;background:linear-gradient(#1c48a8,#2456c4);border-radius:1.5px;"></div>
<div style="left:104.20px;top:428.60px;width:6.80px;height:6.80px;background:#f0eedc;border-radius:1px;"></div>
<span class="t" style="top:429.02px;font-size:5.3px;line-height:6.36px;color:#fff;left:113.60px;">MegaLogViewer MS 3...</span>
<div style="left:180.40px;top:426.00px;width:77.60px;height:12.40px;background:linear-gradient(#4a8cf4,#3a78ea 30%,#3672e4);border-radius:1.5px;"></div>
<div style="left:184.60px;top:428.60px;width:6.80px;height:6.80px;background:#8ccaf8;border-radius:1px;"></div>
<span class="t" style="top:429.02px;font-size:5.3px;line-height:6.36px;color:#fff;left:194.00px;">aidan46's photo galle...</span>
<div style="left:260.40px;top:426.00px;width:76.60px;height:12.40px;background:linear-gradient(#4a8cf4,#3a78ea 30%,#3672e4);border-radius:1.5px;"></div>
<div style="left:264.60px;top:428.60px;width:6.80px;height:6.80px;background:#e8dca0;border-radius:1px;"></div>
<span class="t" style="top:429.02px;font-size:5.3px;line-height:6.36px;color:#fff;left:274.00px;">untitled - Paint</span>
<span class="t" style="top:429.20px;font-size:5px;line-height:6.00px;color:#fff;left:545.00px;">EN</span>
<div style="left:553.00px;top:424.30px;width:87.00px;height:15.40px;background:linear-gradient(#1ea4f2 0%,#1590ea 15%,#1188e2 60%,#0d78cc 100%);border-left:1px solid #0c48a8;box-sizing:border-box;"></div>
<div style="left:554.80px;top:428.20px;width:6.60px;height:6.60px;background:#dceaff;border-radius:50%;"></div>
<svg class="abs" style="left:556.2px;top:429.6px" width="3.4" height="3.8" viewBox="0 0 3.4 3.8"><path d="M2.8 0.4L0.8 1.9L2.8 3.4" fill="none" stroke="#2060d0" stroke-width="1.1"/></svg>
<div style="left:563.50px;top:428.40px;width:5.40px;height:6.40px;background:#f0902a;border-radius:1px;"></div>
<div style="left:571.00px;top:428.40px;width:2.60px;height:6.40px;background:#243a6a;border-radius:1px;"></div>
<div style="left:573.60px;top:428.40px;width:2.80px;height:6.40px;background:#e8eef8;border-radius:1px;"></div>
<div style="left:578.00px;top:428.40px;width:3.20px;height:6.40px;background:#d84048;border-radius:1px;"></div>
<div style="left:581.20px;top:428.40px;width:3.40px;height:6.40px;background:#3050b8;border-radius:1px;"></div>
<div style="left:584.60px;top:428.40px;width:3.00px;height:6.40px;background:#e8e0e8;border-radius:1px;"></div>
<div style="left:592.00px;top:428.40px;width:4.80px;height:6.40px;background:#1c2cb0;border-radius:1px;"></div>
<div style="left:599.40px;top:428.40px;width:7.20px;height:6.40px;background:#c8ccd0;border-radius:1px;"></div>
<div style="left:609.60px;top:428.40px;width:5.20px;height:6.40px;background:#f4f0e0;border-radius:1px;"></div>
<span class="t" style="top:428.96px;font-size:5.4px;line-height:6.48px;color:#fff;left:619.40px;">14:00</span>
</div></body></html>
